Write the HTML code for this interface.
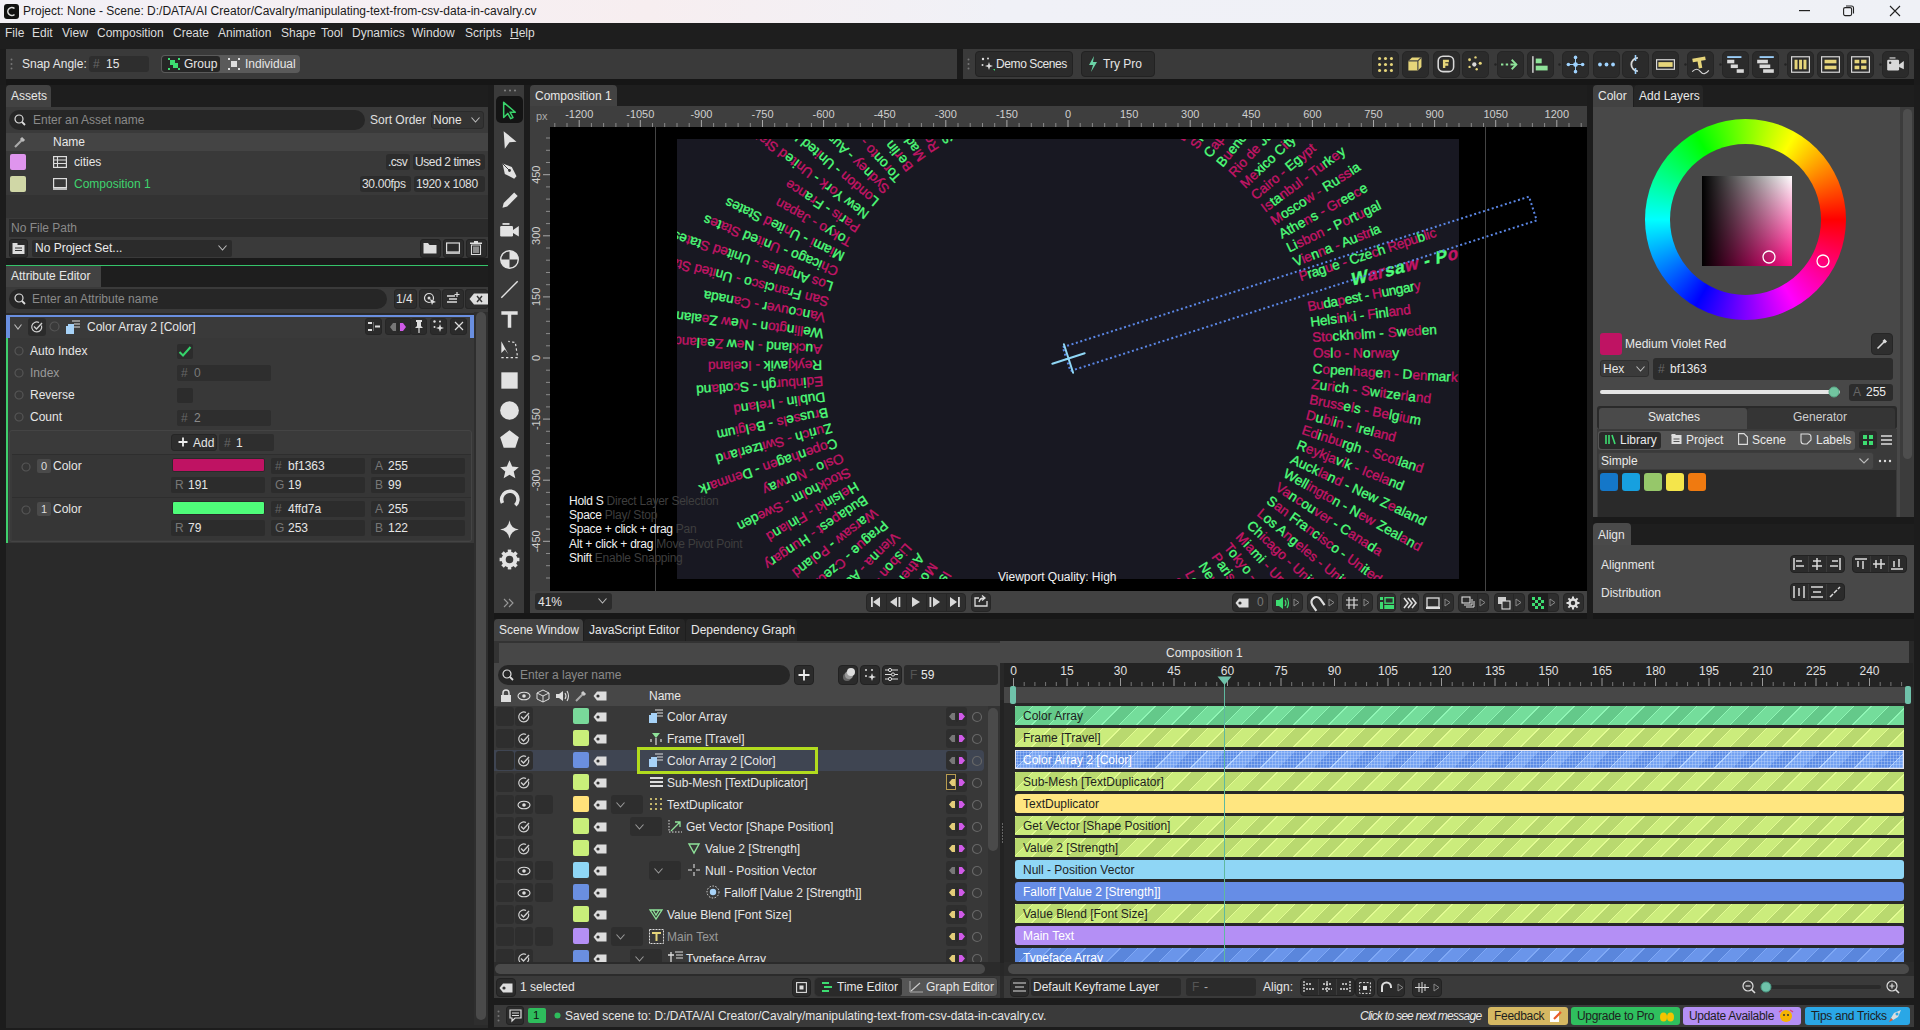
<!DOCTYPE html><html><head><meta charset="utf-8"><style>
*{margin:0;padding:0;box-sizing:border-box}
html,body{width:1920px;height:1030px;overflow:hidden;background:#1c1c1c;font-family:"Liberation Sans",sans-serif;}
div{position:absolute}
.t{white-space:nowrap;line-height:1}
.p{fill:#c21566;stroke:#c21566}.g{fill:#4ffd7a;stroke:#4ffd7a}
svg{position:absolute;overflow:visible}
</style></head><body><div style="left:0px;top:0px;width:1920px;height:23px;background:linear-gradient(to right,#f2f0f6 0px,#f6eff2 450px,#f7eef0 650px,#f0f1f7 1000px,#eff1f6 1920px);"></div>
<svg style="left:4px;top:4px" width="15" height="15"><rect x="0" y="0" width="15" height="15" rx="3" fill="#111"/><path d="M10.5 4.5 A4 4 0 1 0 10.5 10.5" stroke="#ddd" stroke-width="1.6" fill="none"/></svg>
<div class="t" style="left:23px;top:5px;color:#1a1a1a;font-size:12px;">Project: None - Scene: D:/DATA/AI Creator/Cavalry/manipulating-text-from-csv-data-in-cavalry.cv</div>
<svg style="left:1799px;top:10px" width="12" height="2"><rect width="11" height="1.2" fill="#222"/></svg>
<svg style="left:1843px;top:5px" width="12" height="12"><rect x="0.6" y="2.6" width="8" height="8" rx="1.5" fill="none" stroke="#222" stroke-width="1.1"/><path d="M3 1 h5.5 a2 2 0 0 1 2 2 v5.5" fill="none" stroke="#222" stroke-width="1.1"/></svg>
<svg style="left:1889px;top:5px" width="12" height="12"><path d="M1 1 L11 11 M11 1 L1 11" stroke="#222" stroke-width="1.1"/></svg>
<div style="left:0px;top:23px;width:1920px;height:26px;background:#1e1e1e;"></div>
<div class="t" style="left:5px;top:27px;color:#dcdcdc;font-size:12px;">File</div>
<div class="t" style="left:32px;top:27px;color:#dcdcdc;font-size:12px;">Edit</div>
<div class="t" style="left:62px;top:27px;color:#dcdcdc;font-size:12px;">View</div>
<div class="t" style="left:97px;top:27px;color:#dcdcdc;font-size:12px;">Composition</div>
<div class="t" style="left:173px;top:27px;color:#dcdcdc;font-size:12px;">Create</div>
<div class="t" style="left:218px;top:27px;color:#dcdcdc;font-size:12px;">Animation</div>
<div class="t" style="left:281px;top:27px;color:#dcdcdc;font-size:12px;">Shape</div>
<div class="t" style="left:321px;top:27px;color:#dcdcdc;font-size:12px;">Tool</div>
<div class="t" style="left:352px;top:27px;color:#dcdcdc;font-size:12px;">Dynamics</div>
<div class="t" style="left:412px;top:27px;color:#dcdcdc;font-size:12px;">Window</div>
<div class="t" style="left:465px;top:27px;color:#dcdcdc;font-size:12px;">Scripts</div>
<div class="t" style="left:510px;top:27px;color:#dcdcdc;font-size:12px;"><u>H</u>elp</div>
<div style="left:0px;top:49px;width:1920px;height:36px;background:#1b1b1b;"></div>
<div style="left:6px;top:49px;width:951px;height:30px;background:#3a3a3a;"></div>
<div style="left:963px;top:49px;width:951px;height:30px;background:#3a3a3a;"></div>
<div style="left:6px;top:79px;width:1908px;height:6px;background:#161616;"></div>
<svg style="left:10px;top:58px" width="3" height="12"><circle cx="1.5" cy="1.5" r="1" fill="#777"/><circle cx="1.5" cy="6" r="1" fill="#777"/><circle cx="1.5" cy="10.5" r="1" fill="#777"/></svg>
<div class="t" style="left:22px;top:58px;color:#e6e6e6;font-size:12px;">Snap Angle:</div>
<div style="left:89px;top:56px;width:60px;height:16px;background:#2e2e2e;border-radius:3px;"></div>
<div class="t" style="left:93px;top:58px;color:#666;font-size:12px;">#</div>
<div class="t" style="left:106px;top:58px;color:#e6e6e6;font-size:12px;">15</div>
<div style="left:161px;top:55px;width:139px;height:18px;background:#5a5a5a;border-radius:4px;"></div>
<div style="left:162px;top:56px;width:58px;height:16px;background:#262626;border-radius:3px;"></div>
<svg style="left:168px;top:58px" width="12" height="12"><g fill="#3ddc71"><rect x="0" y="0" width="2" height="2"/><rect x="10" y="0" width="2" height="2"/><rect x="0" y="10" width="2" height="2"/><rect x="10" y="10" width="2" height="2"/><rect x="2" y="2" width="5" height="5"/><rect x="5" y="5" width="5" height="5"/></g></svg>
<div class="t" style="left:184px;top:58px;color:#e6e6e6;font-size:12px;">Group</div>
<svg style="left:228px;top:58px" width="12" height="12"><g fill="#ddd"><rect x="0" y="0" width="2" height="2"/><rect x="10" y="0" width="2" height="2"/><rect x="0" y="10" width="2" height="2"/><rect x="10" y="10" width="2" height="2"/><rect x="3" y="3" width="6" height="6"/></g></svg>
<div class="t" style="left:245px;top:58px;color:#e6e6e6;font-size:12px;">Individual</div>
<svg style="left:967px;top:58px" width="3" height="12"><circle cx="1.5" cy="1.5" r="1" fill="#777"/><circle cx="1.5" cy="6" r="1" fill="#777"/><circle cx="1.5" cy="10.5" r="1" fill="#777"/></svg>
<div style="left:975px;top:51px;width:98px;height:26px;background:#2b2b2b;border:1px solid #222;border-radius:4px;"></div>
<svg style="left:981px;top:57px" width="14" height="14"><g fill="#ddd"><circle cx="2" cy="2" r="1.2"/><circle cx="7" cy="1.5" r="1"/><circle cx="1.5" cy="8" r="1"/><path d="M8 5 L9 8 L12 9 L9 10 L8 13 L7 10 L4 9 L7 8 Z"/></g><path d="M12 12 L14 12 L14 14 Z" fill="#3ddc71"/></svg>
<div class="t" style="left:996px;top:58px;color:#e6e6e6;font-size:12px;letter-spacing:-0.4px;">Demo Scenes</div>
<div style="left:1081px;top:51px;width:74px;height:26px;background:#2b2b2b;border:1px solid #222;border-radius:4px;"></div>
<svg style="left:1088px;top:56px" width="10" height="16"><path d="M6 0 L1 9 L5 9 L3 16 L9 6 L5 6 Z" fill="#6ad3a6"/></svg>
<div class="t" style="left:1103px;top:58px;color:#e6e6e6;font-size:12px;">Try Pro</div>
<div style="left:1372px;top:51px;width:27px;height:27px;background:#2b2b2b;border:1px solid #262626;border-radius:5px;"></div>
<svg style="left:1376px;top:55px" width="19" height="19" viewBox="0 0 16 16"><circle cx="3" cy="3" r="1.3" fill="#e6d57a"/><circle cx="3" cy="8" r="1.3" fill="#e6d57a"/><circle cx="3" cy="13" r="1.3" fill="#e6d57a"/><circle cx="8" cy="3" r="1.3" fill="#e6d57a"/><circle cx="8" cy="8" r="1.3" fill="#e6d57a"/><circle cx="8" cy="13" r="1.3" fill="#e6d57a"/><circle cx="13" cy="3" r="1.3" fill="#e6d57a"/><circle cx="13" cy="8" r="1.3" fill="#e6d57a"/><circle cx="13" cy="13" r="1.3" fill="#e6d57a"/></svg>
<div style="left:1402px;top:51px;width:27px;height:27px;background:#2b2b2b;border:1px solid #262626;border-radius:5px;"></div>
<svg style="left:1406px;top:55px" width="19" height="19" viewBox="0 0 16 16"><path d="M2 5 L5 2 L13 2 L13 10 L10 13 L2 13 Z" fill="#e6d57a"/><path d="M2 5 L10 5 L13 2 M10 5 L10 13" stroke="#444" stroke-width="1" fill="none"/></svg>
<div style="left:1433px;top:51px;width:27px;height:27px;background:#2b2b2b;border:1px solid #262626;border-radius:5px;"></div>
<svg style="left:1437px;top:55px" width="19" height="19" viewBox="0 0 16 16"><rect x="1" y="1" width="13" height="13" rx="4" fill="none" stroke="#d9d9d9" stroke-width="1.3"/><path d="M5 4 H10 V6 H7 V7 H9.5 V9 H7 V11 H5 Z" fill="#e6d57a"/></svg>
<div style="left:1462px;top:51px;width:27px;height:27px;background:#2b2b2b;border:1px solid #262626;border-radius:5px;"></div>
<svg style="left:1466px;top:55px" width="19" height="19" viewBox="0 0 16 16"><circle cx="3" cy="4" r="1.2" fill="#e6d57a"/><circle cx="8" cy="2" r="1" fill="#e6d57a"/><circle cx="7" cy="8" r="1.8" fill="#d9d9d9"/><circle cx="12" cy="7" r="1.3" fill="#e6d57a"/><circle cx="3" cy="10" r="1" fill="#e6d57a"/><circle cx="9" cy="12" r="1" fill="#e6d57a"/></svg>
<div style="left:1497px;top:51px;width:27px;height:27px;background:#2b2b2b;border:1px solid #262626;border-radius:5px;"></div>
<svg style="left:1501px;top:55px" width="19" height="19" viewBox="0 0 16 16"><path d="M0 8 H2 M4 8 H6 M8 8 H13" stroke="#8fe39a" stroke-width="1.5"/><path d="M9 4 L13 8 L9 12" stroke="#8fe39a" stroke-width="1.5" fill="none"/></svg>
<div style="left:1527px;top:51px;width:27px;height:27px;background:#2b2b2b;border:1px solid #262626;border-radius:5px;"></div>
<svg style="left:1531px;top:55px" width="19" height="19" viewBox="0 0 16 16"><rect x="1" y="1" width="1.2" height="14" fill="#d9d9d9"/><rect x="4" y="3" width="5" height="4" fill="#8fe39a"/><rect x="4" y="9" width="10" height="4" fill="#8fe39a"/></svg>
<div style="left:1562px;top:51px;width:27px;height:27px;background:#2b2b2b;border:1px solid #262626;border-radius:5px;"></div>
<svg style="left:1566px;top:55px" width="19" height="19" viewBox="0 0 16 16"><circle cx="8" cy="8" r="2" fill="#9fd3ff"/><circle cx="8" cy="2" r="1.5" fill="#9fd3ff"/><circle cx="8" cy="14" r="1.5" fill="#9fd3ff"/><circle cx="2" cy="8" r="1.5" fill="#9fd3ff"/><circle cx="14" cy="8" r="1.5" fill="#9fd3ff"/><path d="M8 2 V14 M2 8 H14" stroke="#9fd3ff" stroke-width="0.8"/></svg>
<div style="left:1593px;top:51px;width:27px;height:27px;background:#2b2b2b;border:1px solid #262626;border-radius:5px;"></div>
<svg style="left:1597px;top:55px" width="19" height="19" viewBox="0 0 16 16"><circle cx="2.5" cy="8" r="1.6" fill="#9fd3ff"/><circle cx="8" cy="8" r="1.6" fill="#9fd3ff"/><circle cx="13.5" cy="8" r="1.6" fill="#9fd3ff"/></svg>
<div style="left:1622px;top:51px;width:27px;height:27px;background:#2b2b2b;border:1px solid #262626;border-radius:5px;"></div>
<svg style="left:1626px;top:55px" width="19" height="19" viewBox="0 0 16 16"><path d="M10 2.5 A5.5 5.5 0 0 0 10 13.5" stroke="#d9d9d9" stroke-width="1.5" fill="none"/><path d="M8 0 V5 M8 11 V16" stroke="#9fd3ff" stroke-width="1.3"/></svg>
<div style="left:1652px;top:51px;width:27px;height:27px;background:#2b2b2b;border:1px solid #262626;border-radius:5px;"></div>
<svg style="left:1656px;top:55px" width="19" height="19" viewBox="0 0 16 16"><rect x="0.5" y="4" width="15" height="8" fill="none" stroke="#d9d9d9" stroke-width="1"/><rect x="2" y="6" width="12" height="4" fill="#e6d57a"/></svg>
<div style="left:1687px;top:51px;width:27px;height:27px;background:#2b2b2b;border:1px solid #262626;border-radius:5px;"></div>
<svg style="left:1691px;top:55px" width="19" height="19" viewBox="0 0 16 16"><path d="M2 2 H13 V5 H9 V11 H6 V5 H2 Z" fill="#e6d57a" transform="rotate(-10 8 8)"/><path d="M1 14 Q5 10 8 14 T15 13" stroke="#d9d9d9" fill="none" stroke-width="1"/></svg>
<div style="left:1722px;top:51px;width:27px;height:27px;background:#2b2b2b;border:1px solid #262626;border-radius:5px;"></div>
<svg style="left:1726px;top:55px" width="19" height="19" viewBox="0 0 16 16"><rect x="1" y="1" width="12" height="1.5" fill="#9fd3ff"/><rect x="1" y="4" width="6" height="3" fill="#d9d9d9"/><rect x="4" y="8" width="6" height="3" fill="#d9d9d9"/><rect x="9" y="12" width="6" height="3" fill="#d9d9d9"/></svg>
<div style="left:1752px;top:51px;width:27px;height:27px;background:#2b2b2b;border:1px solid #262626;border-radius:5px;"></div>
<svg style="left:1756px;top:55px" width="19" height="19" viewBox="0 0 16 16"><rect x="3" y="1" width="12" height="1.5" fill="#9fd3ff"/><rect x="1" y="4" width="9" height="3" fill="#d9d9d9"/><rect x="3" y="8" width="9" height="3" fill="#d9d9d9"/><rect x="6" y="12" width="9" height="3" fill="#d9d9d9"/></svg>
<div style="left:1787px;top:51px;width:27px;height:27px;background:#2b2b2b;border:1px solid #262626;border-radius:5px;"></div>
<svg style="left:1791px;top:55px" width="19" height="19" viewBox="0 0 16 16"><rect x="0.5" y="1.5" width="15" height="13" fill="none" stroke="#d9d9d9" stroke-width="1"/><rect x="3" y="4" width="2.5" height="8" fill="#e6d57a"/><rect x="6.8" y="4" width="2.5" height="8" fill="#e6d57a"/><rect x="10.5" y="4" width="2.5" height="8" fill="#e6d57a"/></svg>
<div style="left:1817px;top:51px;width:27px;height:27px;background:#2b2b2b;border:1px solid #262626;border-radius:5px;"></div>
<svg style="left:1821px;top:55px" width="19" height="19" viewBox="0 0 16 16"><rect x="0.5" y="1.5" width="15" height="13" fill="none" stroke="#d9d9d9" stroke-width="1"/><rect x="3" y="4" width="10" height="3" fill="#e6d57a"/><rect x="3" y="9" width="10" height="3" fill="#e6d57a"/></svg>
<div style="left:1847px;top:51px;width:27px;height:27px;background:#2b2b2b;border:1px solid #262626;border-radius:5px;"></div>
<svg style="left:1851px;top:55px" width="19" height="19" viewBox="0 0 16 16"><rect x="0.5" y="1.5" width="15" height="13" fill="none" stroke="#d9d9d9" stroke-width="1"/><rect x="3" y="4" width="4" height="3" fill="#e6d57a"/><rect x="8.5" y="4" width="4.5" height="3" fill="#e6d57a"/><rect x="3" y="9" width="4" height="3" fill="#e6d57a"/><rect x="8.5" y="9" width="4.5" height="3" fill="#e6d57a"/></svg>
<div style="left:1882px;top:51px;width:27px;height:27px;background:#2b2b2b;border:1px solid #262626;border-radius:5px;"></div>
<svg style="left:1886px;top:55px" width="19" height="19" viewBox="0 0 16 16"><rect x="1" y="4" width="10" height="9" rx="1" fill="#d9d9d9"/><path d="M11 8 L15 5 V12 L11 10 Z" fill="#d9d9d9"/><rect x="3" y="2" width="5" height="1" fill="#d9d9d9"/><circle cx="3.5" cy="6.5" r="1" fill="#333"/></svg>
<svg style="left:1494px;top:63px" width="3" height="3"><circle cx="1.5" cy="1.5" r="1.2" fill="#222"/></svg>
<svg style="left:1558px;top:63px" width="3" height="3"><circle cx="1.5" cy="1.5" r="1.2" fill="#222"/></svg>
<svg style="left:1684px;top:63px" width="3" height="3"><circle cx="1.5" cy="1.5" r="1.2" fill="#222"/></svg>
<svg style="left:1719px;top:63px" width="3" height="3"><circle cx="1.5" cy="1.5" r="1.2" fill="#222"/></svg>
<svg style="left:1784px;top:63px" width="3" height="3"><circle cx="1.5" cy="1.5" r="1.2" fill="#222"/></svg>
<svg style="left:1879px;top:63px" width="3" height="3"><circle cx="1.5" cy="1.5" r="1.2" fill="#222"/></svg>
<div style="left:6px;top:85px;width:482px;height:22px;background:#1e1e1e;"></div>
<div style="left:6px;top:85px;width:45px;height:22px;background:#424242;border-radius:4px 4px 0 0;"></div>
<div class="t" style="left:11px;top:90px;color:#e8e8e8;font-size:12px;">Assets</div>
<div style="left:6px;top:107px;width:482px;height:155px;background:#2b2b2b;"></div>
<div style="left:6px;top:107px;width:482px;height:26px;background:#3a3a3a;"></div>
<div style="left:9px;top:110px;width:356px;height:20px;background:#262626;border-radius:10px;"></div>
<svg style="left:14px;top:114px" width="12" height="12"><circle cx="5" cy="5" r="4" stroke="#ddd" stroke-width="1.2" fill="none"/><path d="M8 8 L11 11" stroke="#ddd" stroke-width="1.8"/></svg>
<div class="t" style="left:33px;top:114px;color:#8a8a8a;font-size:12px;">Enter an Asset name</div>
<div class="t" style="left:370px;top:114px;color:#e0e0e0;font-size:12px;">Sort Order</div>
<div style="left:431px;top:111px;width:53px;height:18px;background:#333;border:1px solid #2a2a2a;border-radius:3px;"></div>
<div class="t" style="left:433px;top:114px;color:#e6e6e6;font-size:12px;">None</div>
<svg style="left:471px;top:117px" width="9" height="6"><path d="M0.5 0.5 L4.5 5 L8.5 0.5" stroke="#bbb" stroke-width="1.1" fill="none"/></svg>
<div style="left:6px;top:133px;width:482px;height:18px;background:#444444;"></div>
<svg style="left:13px;top:136px" width="14" height="13"><path d="M2 11 L9 4" stroke="#aaa" stroke-width="2.2"/><path d="M8 2 L11 5" stroke="#bbb" stroke-width="3"/></svg>
<div class="t" style="left:53px;top:136px;color:#e8e8e8;font-size:12px;">Name</div>
<div style="left:6px;top:151px;width:482px;height:44px;background:#393939;"></div>
<div style="left:6px;top:195px;width:482px;height:23px;background:#333333;"></div>
<div style="left:10px;top:154px;width:16px;height:16px;background:#df95ee;border-radius:2px;"></div>
<div style="left:10px;top:176px;width:16px;height:16px;background:#d0d7a6;border-radius:2px;"></div>
<svg style="left:53px;top:156px" width="14" height="12"><rect x="0.6" y="0.6" width="12.8" height="10.8" fill="none" stroke="#ddd" stroke-width="1.2"/><path d="M0.6 4 H13.4 M0.6 7.5 H13.4 M4.5 0.6 V11.4" stroke="#ddd" stroke-width="1.1"/></svg>
<div class="t" style="left:74px;top:156px;color:#e6e6e6;font-size:12px;">cities</div>
<svg style="left:53px;top:178px" width="14" height="12"><rect x="0.6" y="0.6" width="12.8" height="9" fill="none" stroke="#ddd" stroke-width="1.2"/><rect x="0" y="10" width="14" height="2" fill="#bbb"/></svg>
<div class="t" style="left:74px;top:178px;color:#3fd46e;font-size:12px;">Composition 1</div>
<div style="left:386px;top:154px;width:24px;height:16px;background:#2c2c2c;border-radius:3px;"></div>
<div class="t" style="left:388px;top:156px;color:#e0e0e0;font-size:12px;letter-spacing:-0.5px;">.csv</div>
<div style="left:413px;top:154px;width:72px;height:16px;background:#2c2c2c;border-radius:3px;"></div>
<div class="t" style="left:415px;top:156px;color:#e0e0e0;font-size:12px;letter-spacing:-0.4px;">Used 2 times</div>
<div style="left:360px;top:176px;width:51px;height:16px;background:#2c2c2c;border-radius:3px;"></div>
<div class="t" style="left:362px;top:178px;color:#e0e0e0;font-size:12px;letter-spacing:-0.3px;">30.00fps</div>
<div style="left:414px;top:176px;width:71px;height:16px;background:#2c2c2c;border-radius:3px;"></div>
<div class="t" style="left:416px;top:178px;color:#e0e0e0;font-size:12px;letter-spacing:-0.4px;">1920 x 1080</div>
<div style="left:6px;top:218px;width:482px;height:20px;background:#3a3a3a;"></div>
<div style="left:9px;top:219px;width:479px;height:18px;background:#2b2b2b;"></div>
<div class="t" style="left:11px;top:222px;color:#8a8a8a;font-size:12px;">No File Path</div>
<div style="left:6px;top:238px;width:482px;height:20px;background:#3a3a3a;"></div>
<div style="left:9px;top:239px;width:19px;height:19px;background:#2b2b2b;border:1px solid #222;border-radius:3px;"></div>
<svg style="left:12px;top:242px" width="14" height="13"><rect x="0.5" y="3" width="12" height="9" fill="#ddd"/><rect x="0.5" y="1" width="5" height="2" fill="#ddd"/><path d="M3 6 H10 M3 8.5 H10" stroke="#333" stroke-width="1"/></svg>
<div style="left:32px;top:240px;width:200px;height:17px;background:#2b2b2b;border-radius:2px;"></div>
<div class="t" style="left:35px;top:242px;color:#ececec;font-size:12px;">No Project Set...</div>
<svg style="left:218px;top:245px" width="9" height="6"><path d="M0.5 0.5 L4.5 5 L8.5 0.5" stroke="#bbb" stroke-width="1.1" fill="none"/></svg>
<div style="left:420px;top:239px;width:21px;height:19px;background:#2b2b2b;border:1px solid #222;border-radius:3px;"></div>
<div style="left:443px;top:239px;width:21px;height:19px;background:#2b2b2b;border:1px solid #222;border-radius:3px;"></div>
<div style="left:466px;top:239px;width:21px;height:19px;background:#2b2b2b;border:1px solid #222;border-radius:3px;"></div>
<svg style="left:423px;top:242px" width="14" height="12"><path d="M0.5 1 H5 L6.5 3 H13.5 V11.5 H0.5 Z" fill="#ddd"/></svg>
<svg style="left:446px;top:242px" width="14" height="12"><rect x="0.6" y="1" width="12.8" height="9" fill="none" stroke="#ddd" stroke-width="1.2"/><rect x="0" y="10" width="14" height="2" fill="#bbb"/></svg>
<svg style="left:470px;top:241px" width="12" height="14"><rect x="0" y="1.5" width="12" height="1.5" fill="#ddd"/><rect x="4" y="0" width="4" height="2" fill="#ddd"/><path d="M1.5 4 H10.5 V13.5 H1.5 Z M4 5.5 V12 M6 5.5 V12 M8 5.5 V12" fill="none" stroke="#ddd" stroke-width="1.1"/></svg>
<div style="left:6px;top:258px;width:482px;height:7px;background:#1a1a1a;"></div>
<div style="left:6px;top:265px;width:482px;height:1px;background:#35c46a;"></div>
<div style="left:6px;top:266px;width:482px;height:21px;background:#1e1e1e;"></div>
<div style="left:6px;top:266px;width:95px;height:21px;background:#424242;"></div>
<div class="t" style="left:11px;top:270px;color:#e8e8e8;font-size:12px;">Attribute Editor</div>
<div style="left:6px;top:287px;width:482px;height:741px;background:#2a2a2a;"></div>
<div style="left:6px;top:287px;width:482px;height:26px;background:#3a3a3a;"></div>
<div style="left:9px;top:289px;width:378px;height:20px;background:#262626;border-radius:10px;"></div>
<svg style="left:14px;top:293px" width="12" height="12"><circle cx="5" cy="5" r="4" stroke="#ddd" stroke-width="1.2" fill="none"/><path d="M8 8 L11 11" stroke="#ddd" stroke-width="1.8"/></svg>
<div class="t" style="left:32px;top:293px;color:#8a8a8a;font-size:12px;">Enter an Attribute name</div>
<div style="left:394px;top:289px;width:23px;height:20px;background:#2d2d2d;border:1px solid #262626;border-radius:3px;"></div>
<div class="t" style="left:396px;top:293px;color:#e6e6e6;font-size:12px;">1/4</div>
<div style="left:419px;top:289px;width:22px;height:20px;background:#2d2d2d;border:1px solid #262626;border-radius:3px;"></div>
<div style="left:442px;top:289px;width:22px;height:20px;background:#2d2d2d;border:1px solid #262626;border-radius:3px;"></div>
<div style="left:465px;top:289px;width:22px;height:20px;background:#2d2d2d;border:1px solid #262626;border-radius:3px;"></div>
<svg style="left:423px;top:292px" width="14" height="14"><circle cx="6" cy="6" r="4.5" stroke="#ddd" stroke-width="1.2" fill="none"/><circle cx="6" cy="6" r="1.5" fill="#ddd"/><path d="M7 7 L13 10 L10 11 L9 13 Z" fill="#ddd"/></svg>
<svg style="left:446px;top:292px" width="14" height="14"><path d="M1 4 H9 M3 7 H11 M1 10 H11" stroke="#ddd" stroke-width="1.5"/><path d="M11 0 V5 M8.5 2.5 H13.5" stroke="#ddd" stroke-width="1.2"/></svg>
<svg style="left:469px;top:293px" width="14" height="12"><path d="M4 1 H13 V11 H4 L0 6 Z" fill="#ddd"/><path d="M6 3.5 L10.5 8.5 M10.5 3.5 L6 8.5" stroke="#333" stroke-width="1.4"/></svg>
<div style="left:6px;top:315px;width:468px;height:228px;background:#383838;"></div>
<div style="left:6px;top:315px;width:468px;height:23px;background:#3a3a3a;border-top:2px solid #6a8fe0;"></div>
<div style="left:6px;top:315px;width:4px;height:23px;background:#6a8fe0;"></div>
<div style="left:6px;top:338px;width:2px;height:205px;background:#3fcf6c;"></div>
<svg style="left:14px;top:324px" width="8" height="6"><path d="M0.5 0.5 L4.0 5 L7.5 0.5" stroke="#bbb" stroke-width="1.1" fill="none"/></svg>
<div style="left:28px;top:318px;width:18px;height:18px;background:#2b2b2b;border-radius:3px;"></div>
<svg style="left:31px;top:321px" width="12" height="12"><path d="M10.5 4.5 A5 5 0 1 1 8 1.5" stroke="#cfcfcf" stroke-width="1.2" fill="none"/><path d="M3 5.5 L5.5 8 L11 2" stroke="#cfcfcf" stroke-width="1.4" fill="none"/></svg>
<svg style="left:49px;top:321px" width="11" height="11"><circle cx="5.5" cy="5.5" r="4.5" stroke="#555" stroke-width="1.2" fill="none"/></svg>
<svg style="left:66px;top:320px" width="14" height="14"><rect x="0" y="6" width="8" height="8" fill="#a7d2f7"/><rect x="2" y="4" width="6" height="4" fill="#a7d2f7"/><path d="M6 1 H14 M8 4 H14 M8 7 H14" stroke="#ddd" stroke-width="1.1"/></svg>
<div class="t" style="left:87px;top:321px;color:#e8e8e8;font-size:12px;">Color Array 2 [Color]</div>
<div style="left:365px;top:318px;width:17px;height:17px;background:#2b2b2b;border:1px solid #262626;border-radius:3px;"></div>
<div style="left:385px;top:318px;width:27px;height:17px;background:#2b2b2b;border:1px solid #262626;border-radius:3px;"></div>
<div style="left:410px;top:318px;width:17px;height:17px;background:#2b2b2b;border:1px solid #262626;border-radius:3px;"></div>
<div style="left:430px;top:318px;width:17px;height:17px;background:#2b2b2b;border:1px solid #262626;border-radius:3px;"></div>
<div style="left:450px;top:318px;width:17px;height:17px;background:#2b2b2b;border:1px solid #262626;border-radius:3px;"></div>
<svg style="left:368px;top:321px" width="12" height="11"><path d="M0 2 H4 M0 9 H4 M7 5.5 H12" stroke="#ddd" stroke-width="2"/><path d="M5.5 1 V10" stroke="#666" stroke-width="1"/></svg>
<svg style="left:387px;top:321px" width="22" height="12"><path d="M3 6 L6 2 H9 V10 H6 Z" fill="#777"/><path d="M13 2 H16 L19 6 L16 10 H13 Z" fill="#d05ae8"/><path d="M11 0 V12" stroke="#262626"/></svg>
<svg style="left:414px;top:320px" width="10" height="13"><path d="M2 0 H8 V2 H7 V6 L9 8 H1 L3 6 V2 H2 Z" fill="#ddd"/><path d="M5 8 V13" stroke="#ddd" stroke-width="1.2"/></svg>
<svg style="left:433px;top:320px" width="12" height="12"><g fill="#ddd"><circle cx="1.5" cy="1.5" r="1.2"/><circle cx="7" cy="1.5" r="1"/><circle cx="1.5" cy="7" r="1"/><path d="M7 4 L8 7 L11 8 L8 9 L7 12 L6 9 L3 8 L6 7 Z"/></g></svg>
<svg style="left:454px;top:321px" width="10" height="10"><path d="M1 1 L9 9 M9 1 L1 9" stroke="#ddd" stroke-width="1.2"/></svg>
<svg style="left:14px;top:346px" width="10" height="10"><circle cx="5" cy="5" r="4" stroke="#555" stroke-width="1.2" fill="none"/></svg>
<div class="t" style="left:30px;top:345px;color:#e6e6e6;font-size:12px;">Auto Index</div>
<svg style="left:14px;top:368px" width="10" height="10"><circle cx="5" cy="5" r="4" stroke="#555" stroke-width="1.2" fill="none"/></svg>
<div class="t" style="left:30px;top:367px;color:#9a9a9a;font-size:12px;">Index</div>
<svg style="left:14px;top:390px" width="10" height="10"><circle cx="5" cy="5" r="4" stroke="#555" stroke-width="1.2" fill="none"/></svg>
<div class="t" style="left:30px;top:389px;color:#e6e6e6;font-size:12px;">Reverse</div>
<svg style="left:14px;top:412px" width="10" height="10"><circle cx="5" cy="5" r="4" stroke="#555" stroke-width="1.2" fill="none"/></svg>
<div class="t" style="left:30px;top:411px;color:#e6e6e6;font-size:12px;">Count</div>
<div style="left:177px;top:344px;width:16px;height:15px;background:#2c2c2c;border-radius:2px;"></div>
<svg style="left:178px;top:345px" width="14" height="13"><path d="M1.5 7 L5 10.5 L12.5 2" stroke="#35d46b" stroke-width="2" fill="none"/></svg>
<div style="left:177px;top:365px;width:94px;height:16px;background:#2e2e2e;border-radius:2px;"></div>
<div class="t" style="left:181px;top:367px;color:#666;font-size:12px;">#</div>
<div class="t" style="left:194px;top:367px;color:#7a7a7a;font-size:12px;">0</div>
<div style="left:177px;top:388px;width:16px;height:15px;background:#2c2c2c;border-radius:2px;"></div>
<div style="left:177px;top:410px;width:94px;height:16px;background:#2e2e2e;border-radius:2px;"></div>
<div class="t" style="left:181px;top:412px;color:#666;font-size:12px;">#</div>
<div class="t" style="left:194px;top:412px;color:#8a8a8a;font-size:12px;">2</div>
<div style="left:9px;top:430px;width:463px;height:112px;background:#3a3a3a;border:1px solid #444;border-radius:3px;"></div>
<div style="left:171px;top:434px;width:46px;height:17px;background:#2d2d2d;border:1px solid #262626;border-radius:3px;"></div>
<svg style="left:178px;top:437px" width="10" height="10"><path d="M5 0.5 V9.5 M0.5 5 H9.5" stroke="#eee" stroke-width="1.8"/></svg>
<div class="t" style="left:193px;top:437px;color:#e6e6e6;font-size:12px;">Add</div>
<div style="left:219px;top:434px;width:55px;height:17px;background:#2e2e2e;border-radius:2px;"></div>
<div class="t" style="left:224px;top:437px;color:#666;font-size:12px;">#</div>
<div class="t" style="left:236px;top:437px;color:#e6e6e6;font-size:12px;">1</div>
<div style="left:12px;top:454px;width:459px;height:43px;background:#363636;border-top:1px solid #2e2e2e;"></div>
<svg style="left:21px;top:462px" width="10" height="10"><circle cx="5" cy="5" r="4" stroke="#555" stroke-width="1.2" fill="none"/></svg>
<div style="left:37px;top:459px;width:14px;height:14px;background:#4a4a4a;border-radius:2px;"></div>
<div class="t" style="left:41px;top:461px;color:#ddd;font-size:11px;">0</div>
<div class="t" style="left:53px;top:460px;color:#e6e6e6;font-size:12px;">Color</div>
<div style="left:172px;top:458px;width:93px;height:14px;background:#bf1363;border-radius:2px;border:1px solid #2a2a2a;"></div>
<div style="left:271px;top:458px;width:94px;height:16px;background:#2c2c2c;border-radius:2px;"></div>
<div class="t" style="left:275px;top:460px;color:#666;font-size:12px;">#</div>
<div class="t" style="left:288px;top:460px;color:#e6e6e6;font-size:12px;">bf1363</div>
<div style="left:371px;top:458px;width:94px;height:16px;background:#2c2c2c;border-radius:2px;"></div>
<div class="t" style="left:375px;top:460px;color:#777;font-size:12px;">A</div>
<div class="t" style="left:388px;top:460px;color:#e6e6e6;font-size:12px;">255</div>
<div style="left:171px;top:477px;width:94px;height:16px;background:#2c2c2c;border-radius:2px;"></div>
<div class="t" style="left:175px;top:479px;color:#777;font-size:12px;">R</div>
<div class="t" style="left:188px;top:479px;color:#e6e6e6;font-size:12px;">191</div>
<div style="left:271px;top:477px;width:94px;height:16px;background:#2c2c2c;border-radius:2px;"></div>
<div class="t" style="left:275px;top:479px;color:#777;font-size:12px;">G</div>
<div class="t" style="left:288px;top:479px;color:#e6e6e6;font-size:12px;">19</div>
<div style="left:371px;top:477px;width:94px;height:16px;background:#2c2c2c;border-radius:2px;"></div>
<div class="t" style="left:375px;top:479px;color:#777;font-size:12px;">B</div>
<div class="t" style="left:388px;top:479px;color:#e6e6e6;font-size:12px;">99</div>
<div style="left:12px;top:497px;width:459px;height:43px;background:#363636;border-top:1px solid #2e2e2e;"></div>
<svg style="left:21px;top:505px" width="10" height="10"><circle cx="5" cy="5" r="4" stroke="#555" stroke-width="1.2" fill="none"/></svg>
<div style="left:37px;top:502px;width:14px;height:14px;background:#4a4a4a;border-radius:2px;"></div>
<div class="t" style="left:41px;top:504px;color:#ddd;font-size:11px;">1</div>
<div class="t" style="left:53px;top:503px;color:#e6e6e6;font-size:12px;">Color</div>
<div style="left:172px;top:501px;width:93px;height:14px;background:#4ffd7a;border-radius:2px;border:1px solid #2a2a2a;"></div>
<div style="left:271px;top:501px;width:94px;height:16px;background:#2c2c2c;border-radius:2px;"></div>
<div class="t" style="left:275px;top:503px;color:#666;font-size:12px;">#</div>
<div class="t" style="left:288px;top:503px;color:#e6e6e6;font-size:12px;">4ffd7a</div>
<div style="left:371px;top:501px;width:94px;height:16px;background:#2c2c2c;border-radius:2px;"></div>
<div class="t" style="left:375px;top:503px;color:#777;font-size:12px;">A</div>
<div class="t" style="left:388px;top:503px;color:#e6e6e6;font-size:12px;">255</div>
<div style="left:171px;top:520px;width:94px;height:16px;background:#2c2c2c;border-radius:2px;"></div>
<div class="t" style="left:175px;top:522px;color:#777;font-size:12px;">R</div>
<div class="t" style="left:188px;top:522px;color:#e6e6e6;font-size:12px;">79</div>
<div style="left:271px;top:520px;width:94px;height:16px;background:#2c2c2c;border-radius:2px;"></div>
<div class="t" style="left:275px;top:522px;color:#777;font-size:12px;">G</div>
<div class="t" style="left:288px;top:522px;color:#e6e6e6;font-size:12px;">253</div>
<div style="left:371px;top:520px;width:94px;height:16px;background:#2c2c2c;border-radius:2px;"></div>
<div class="t" style="left:375px;top:522px;color:#777;font-size:12px;">B</div>
<div class="t" style="left:388px;top:522px;color:#e6e6e6;font-size:12px;">122</div>
<div style="left:474px;top:312px;width:14px;height:713px;background:#2e2e2e;"></div>
<div style="left:476px;top:312px;width:10px;height:708px;background:#4a4a4a;border-radius:5px;"></div>
<div style="left:470px;top:315px;width:4px;height:23px;background:#6a8fe0;"></div>
<div style="left:465px;top:289px;width:23px;height:20px;background:#2d2d2d;border:1px solid #262626;border-radius:3px;"></div>
<svg style="left:469px;top:293px" width="19" height="12"><path d="M5 0.5 H19 V11.5 H5 L0.5 6 Z" fill="#ddd"/><path d="M8 3 L13 9 M13 3 L8 9" stroke="#333" stroke-width="1.4"/></svg>
<div style="left:494px;top:85px;width:30px;height:528px;background:#3a3a3a;"></div>
<svg style="left:503px;top:89px" width="14" height="3"><circle cx="2" cy="1.5" r="1" fill="#888"/><circle cx="7" cy="1.5" r="1" fill="#888"/><circle cx="12" cy="1.5" r="1" fill="#888"/></svg>
<div style="left:496px;top:96px;width:27px;height:27px;background:#141414;border-radius:5px;"></div>
<svg style="left:498.5px;top:99.5px" width="21" height="21" viewBox="0 0 18 18"><path d="M4 2 L4 15 L7.5 11.5 L10 16 L12 15 L9.5 10.5 L14 10.5 Z" fill="none" stroke="#39d46b" stroke-width="1.3" stroke-linejoin="round"/></svg>
<svg style="left:498.5px;top:129.5px" width="21" height="21" viewBox="0 0 18 18"><path d="M4 1 L15 10 L9 10.5 L5 16 Z" fill="#e2e2e2"/></svg>
<svg style="left:498.5px;top:159.5px" width="21" height="21" viewBox="0 0 18 18"><path d="M3 3 L11 6 L15 14 L13 16 L5 12 Z" fill="#e2e2e2"/><circle cx="9" cy="9" r="1.2" fill="#333"/><path d="M3 3 L9 9" stroke="#333" stroke-width="0.8"/></svg>
<svg style="left:498.5px;top:188.5px" width="21" height="21" viewBox="0 0 18 18"><path d="M3 16 L4 12 L13 3 L16 6 L7 15 Z" fill="#e2e2e2"/></svg>
<svg style="left:498.5px;top:218.5px" width="21" height="21" viewBox="0 0 18 18"><rect x="1" y="6" width="11" height="9" rx="1" fill="#e2e2e2"/><path d="M12 9.5 L17 6 V15 L12 12 Z" fill="#e2e2e2"/><rect x="3" y="3.5" width="6" height="1.5" fill="#e2e2e2"/></svg>
<svg style="left:498.5px;top:248.5px" width="21" height="21" viewBox="0 0 18 18"><circle cx="9" cy="9" r="7.5" fill="#e2e2e2"/><path d="M9 1.5 V9 H1.5 A7.5 7.5 0 0 1 9 1.5 Z M9 9 H16.5 A7.5 7.5 0 0 1 9 16.5 Z" fill="#3a3a3a"/><circle cx="9" cy="9" r="7.5" fill="none" stroke="#e2e2e2" stroke-width="1.2"/></svg>
<svg style="left:498.5px;top:278.5px" width="21" height="21" viewBox="0 0 18 18"><path d="M2 16 L16 2" stroke="#e2e2e2" stroke-width="1.2"/></svg>
<svg style="left:498.5px;top:308.5px" width="21" height="21" viewBox="0 0 18 18"><path d="M2 2 H16 V5 H10.5 V16 H7.5 V5 H2 Z" fill="#e2e2e2"/></svg>
<svg style="left:498.5px;top:338.5px" width="21" height="21" viewBox="0 0 18 18"><path d="M2 2 L2 12 L5 9 L8 13 Z" fill="#e2e2e2"/><path d="M2 16 H16 L14 3 L8 2" stroke="#e2e2e2" stroke-width="1" stroke-dasharray="2 2" fill="none"/></svg>
<svg style="left:498.5px;top:369.5px" width="21" height="21" viewBox="0 0 18 18"><rect x="2" y="2" width="14" height="14" fill="#e2e2e2"/></svg>
<svg style="left:498.5px;top:399.5px" width="21" height="21" viewBox="0 0 18 18"><circle cx="9" cy="9" r="8" fill="#e2e2e2"/></svg>
<svg style="left:498.5px;top:428.5px" width="21" height="21" viewBox="0 0 18 18"><path d="M9 1 L17 7 L14 16 H4 L1 7 Z" fill="#e2e2e2"/></svg>
<svg style="left:498.5px;top:458.5px" width="21" height="21" viewBox="0 0 18 18"><path d="M9 1 L11.3 6.5 L17 7 L12.6 10.8 L14 16.5 L9 13.5 L4 16.5 L5.4 10.8 L1 7 L6.7 6.5 Z" fill="#e2e2e2"/></svg>
<svg style="left:498.5px;top:488.5px" width="21" height="21" viewBox="0 0 18 18"><path d="M3 12 A7 7 0 1 1 14 14" stroke="#e2e2e2" stroke-width="3" fill="none"/></svg>
<svg style="left:498.5px;top:518.5px" width="21" height="21" viewBox="0 0 18 18"><path d="M9 1 Q10 8 17 9 Q10 10 9 17 Q8 10 1 9 Q8 8 9 1 Z" fill="#e2e2e2"/></svg>
<svg style="left:498.5px;top:548.5px" width="21" height="21" viewBox="0 0 18 18"><circle cx="9" cy="9" r="5" fill="none" stroke="#e2e2e2" stroke-width="3.5"/><rect x="7.5" y="0.5" width="3" height="4" fill="#e2e2e2" transform="rotate(0 9 9)"/><rect x="7.5" y="0.5" width="3" height="4" fill="#e2e2e2" transform="rotate(45 9 9)"/><rect x="7.5" y="0.5" width="3" height="4" fill="#e2e2e2" transform="rotate(90 9 9)"/><rect x="7.5" y="0.5" width="3" height="4" fill="#e2e2e2" transform="rotate(135 9 9)"/><rect x="7.5" y="0.5" width="3" height="4" fill="#e2e2e2" transform="rotate(180 9 9)"/><rect x="7.5" y="0.5" width="3" height="4" fill="#e2e2e2" transform="rotate(225 9 9)"/><rect x="7.5" y="0.5" width="3" height="4" fill="#e2e2e2" transform="rotate(270 9 9)"/><rect x="7.5" y="0.5" width="3" height="4" fill="#e2e2e2" transform="rotate(315 9 9)"/></svg>
<svg style="left:503px;top:598px" width="12" height="10"><path d="M1 1 L5 5 L1 9 M6 1 L10 5 L6 9" stroke="#999" stroke-width="1.1" fill="none"/></svg>
<div style="left:530px;top:85px;width:1057px;height:21px;background:#1e1e1e;"></div>
<div style="left:530px;top:85px;width:87px;height:21px;background:#424242;border-radius:4px 4px 0 0;"></div>
<div class="t" style="left:535px;top:90px;color:#e8e8e8;font-size:12px;">Composition 1</div>
<div style="left:530px;top:106px;width:1057px;height:485px;background:#3e3e3e;"></div>
<div style="left:550px;top:127px;width:1037px;height:464px;background:#000;"></div>
<svg style="left:530px;top:106px" width="1057" height="21"><path d="M24.8 17 V21" stroke="#8a8a8a" stroke-width="1"/><path d="M37.0 17 V21" stroke="#8a8a8a" stroke-width="1"/><path d="M49.2 14 V21" stroke="#a8a8a8" stroke-width="1"/><text x="49.2" y="12" fill="#cfcfcf" font-size="11" text-anchor="middle" font-family="Liberation Sans">-1200</text><path d="M61.4 17 V21" stroke="#8a8a8a" stroke-width="1"/><path d="M73.6 17 V21" stroke="#8a8a8a" stroke-width="1"/><path d="M85.9 17 V21" stroke="#8a8a8a" stroke-width="1"/><path d="M98.1 17 V21" stroke="#8a8a8a" stroke-width="1"/><path d="M110.3 14 V21" stroke="#a8a8a8" stroke-width="1"/><text x="110.3" y="12" fill="#cfcfcf" font-size="11" text-anchor="middle" font-family="Liberation Sans">-1050</text><path d="M122.5 17 V21" stroke="#8a8a8a" stroke-width="1"/><path d="M134.7 17 V21" stroke="#8a8a8a" stroke-width="1"/><path d="M147.0 17 V21" stroke="#8a8a8a" stroke-width="1"/><path d="M159.2 17 V21" stroke="#8a8a8a" stroke-width="1"/><path d="M171.4 14 V21" stroke="#a8a8a8" stroke-width="1"/><text x="171.4" y="12" fill="#cfcfcf" font-size="11" text-anchor="middle" font-family="Liberation Sans">-900</text><path d="M183.6 17 V21" stroke="#8a8a8a" stroke-width="1"/><path d="M195.8 17 V21" stroke="#8a8a8a" stroke-width="1"/><path d="M208.1 17 V21" stroke="#8a8a8a" stroke-width="1"/><path d="M220.3 17 V21" stroke="#8a8a8a" stroke-width="1"/><path d="M232.5 14 V21" stroke="#a8a8a8" stroke-width="1"/><text x="232.5" y="12" fill="#cfcfcf" font-size="11" text-anchor="middle" font-family="Liberation Sans">-750</text><path d="M244.7 17 V21" stroke="#8a8a8a" stroke-width="1"/><path d="M256.9 17 V21" stroke="#8a8a8a" stroke-width="1"/><path d="M269.2 17 V21" stroke="#8a8a8a" stroke-width="1"/><path d="M281.4 17 V21" stroke="#8a8a8a" stroke-width="1"/><path d="M293.6 14 V21" stroke="#a8a8a8" stroke-width="1"/><text x="293.6" y="12" fill="#cfcfcf" font-size="11" text-anchor="middle" font-family="Liberation Sans">-600</text><path d="M305.8 17 V21" stroke="#8a8a8a" stroke-width="1"/><path d="M318.0 17 V21" stroke="#8a8a8a" stroke-width="1"/><path d="M330.3 17 V21" stroke="#8a8a8a" stroke-width="1"/><path d="M342.5 17 V21" stroke="#8a8a8a" stroke-width="1"/><path d="M354.7 14 V21" stroke="#a8a8a8" stroke-width="1"/><text x="354.7" y="12" fill="#cfcfcf" font-size="11" text-anchor="middle" font-family="Liberation Sans">-450</text><path d="M366.9 17 V21" stroke="#8a8a8a" stroke-width="1"/><path d="M379.1 17 V21" stroke="#8a8a8a" stroke-width="1"/><path d="M391.4 17 V21" stroke="#8a8a8a" stroke-width="1"/><path d="M403.6 17 V21" stroke="#8a8a8a" stroke-width="1"/><path d="M415.8 14 V21" stroke="#a8a8a8" stroke-width="1"/><text x="415.8" y="12" fill="#cfcfcf" font-size="11" text-anchor="middle" font-family="Liberation Sans">-300</text><path d="M428.0 17 V21" stroke="#8a8a8a" stroke-width="1"/><path d="M440.2 17 V21" stroke="#8a8a8a" stroke-width="1"/><path d="M452.5 17 V21" stroke="#8a8a8a" stroke-width="1"/><path d="M464.7 17 V21" stroke="#8a8a8a" stroke-width="1"/><path d="M476.9 14 V21" stroke="#a8a8a8" stroke-width="1"/><text x="476.9" y="12" fill="#cfcfcf" font-size="11" text-anchor="middle" font-family="Liberation Sans">-150</text><path d="M489.1 17 V21" stroke="#8a8a8a" stroke-width="1"/><path d="M501.3 17 V21" stroke="#8a8a8a" stroke-width="1"/><path d="M513.6 17 V21" stroke="#8a8a8a" stroke-width="1"/><path d="M525.8 17 V21" stroke="#8a8a8a" stroke-width="1"/><path d="M538.0 14 V21" stroke="#a8a8a8" stroke-width="1"/><text x="538.0" y="12" fill="#cfcfcf" font-size="11" text-anchor="middle" font-family="Liberation Sans">0</text><path d="M550.2 17 V21" stroke="#8a8a8a" stroke-width="1"/><path d="M562.4 17 V21" stroke="#8a8a8a" stroke-width="1"/><path d="M574.7 17 V21" stroke="#8a8a8a" stroke-width="1"/><path d="M586.9 17 V21" stroke="#8a8a8a" stroke-width="1"/><path d="M599.1 14 V21" stroke="#a8a8a8" stroke-width="1"/><text x="599.1" y="12" fill="#cfcfcf" font-size="11" text-anchor="middle" font-family="Liberation Sans">150</text><path d="M611.3 17 V21" stroke="#8a8a8a" stroke-width="1"/><path d="M623.5 17 V21" stroke="#8a8a8a" stroke-width="1"/><path d="M635.8 17 V21" stroke="#8a8a8a" stroke-width="1"/><path d="M648.0 17 V21" stroke="#8a8a8a" stroke-width="1"/><path d="M660.2 14 V21" stroke="#a8a8a8" stroke-width="1"/><text x="660.2" y="12" fill="#cfcfcf" font-size="11" text-anchor="middle" font-family="Liberation Sans">300</text><path d="M672.4 17 V21" stroke="#8a8a8a" stroke-width="1"/><path d="M684.6 17 V21" stroke="#8a8a8a" stroke-width="1"/><path d="M696.9 17 V21" stroke="#8a8a8a" stroke-width="1"/><path d="M709.1 17 V21" stroke="#8a8a8a" stroke-width="1"/><path d="M721.3 14 V21" stroke="#a8a8a8" stroke-width="1"/><text x="721.3" y="12" fill="#cfcfcf" font-size="11" text-anchor="middle" font-family="Liberation Sans">450</text><path d="M733.5 17 V21" stroke="#8a8a8a" stroke-width="1"/><path d="M745.7 17 V21" stroke="#8a8a8a" stroke-width="1"/><path d="M758.0 17 V21" stroke="#8a8a8a" stroke-width="1"/><path d="M770.2 17 V21" stroke="#8a8a8a" stroke-width="1"/><path d="M782.4 14 V21" stroke="#a8a8a8" stroke-width="1"/><text x="782.4" y="12" fill="#cfcfcf" font-size="11" text-anchor="middle" font-family="Liberation Sans">600</text><path d="M794.6 17 V21" stroke="#8a8a8a" stroke-width="1"/><path d="M806.8 17 V21" stroke="#8a8a8a" stroke-width="1"/><path d="M819.1 17 V21" stroke="#8a8a8a" stroke-width="1"/><path d="M831.3 17 V21" stroke="#8a8a8a" stroke-width="1"/><path d="M843.5 14 V21" stroke="#a8a8a8" stroke-width="1"/><text x="843.5" y="12" fill="#cfcfcf" font-size="11" text-anchor="middle" font-family="Liberation Sans">750</text><path d="M855.7 17 V21" stroke="#8a8a8a" stroke-width="1"/><path d="M867.9 17 V21" stroke="#8a8a8a" stroke-width="1"/><path d="M880.2 17 V21" stroke="#8a8a8a" stroke-width="1"/><path d="M892.4 17 V21" stroke="#8a8a8a" stroke-width="1"/><path d="M904.6 14 V21" stroke="#a8a8a8" stroke-width="1"/><text x="904.6" y="12" fill="#cfcfcf" font-size="11" text-anchor="middle" font-family="Liberation Sans">900</text><path d="M916.8 17 V21" stroke="#8a8a8a" stroke-width="1"/><path d="M929.0 17 V21" stroke="#8a8a8a" stroke-width="1"/><path d="M941.3 17 V21" stroke="#8a8a8a" stroke-width="1"/><path d="M953.5 17 V21" stroke="#8a8a8a" stroke-width="1"/><path d="M965.7 14 V21" stroke="#a8a8a8" stroke-width="1"/><text x="965.7" y="12" fill="#cfcfcf" font-size="11" text-anchor="middle" font-family="Liberation Sans">1050</text><path d="M977.9 17 V21" stroke="#8a8a8a" stroke-width="1"/><path d="M990.1 17 V21" stroke="#8a8a8a" stroke-width="1"/><path d="M1002.4 17 V21" stroke="#8a8a8a" stroke-width="1"/><path d="M1014.6 17 V21" stroke="#8a8a8a" stroke-width="1"/><path d="M1026.8 14 V21" stroke="#a8a8a8" stroke-width="1"/><text x="1026.8" y="12" fill="#cfcfcf" font-size="11" text-anchor="middle" font-family="Liberation Sans">1200</text><path d="M1039.0 17 V21" stroke="#8a8a8a" stroke-width="1"/><path d="M1051.2 17 V21" stroke="#8a8a8a" stroke-width="1"/><text x="6" y="14" fill="#aaa" font-size="11" font-family="Liberation Sans">px</text></svg>
<svg style="left:530px;top:106px" width="20" height="485"><path d="M16 472.0 H20" stroke="#8a8a8a" stroke-width="1"/><path d="M16 459.7 H20" stroke="#8a8a8a" stroke-width="1"/><path d="M16 447.5 H20" stroke="#8a8a8a" stroke-width="1"/><path d="M13 435.3 H20" stroke="#a8a8a8" stroke-width="1"/><text transform="translate(10 435.3) rotate(-90)" fill="#cfcfcf" font-size="11" text-anchor="middle" font-family="Liberation Sans">-450</text><path d="M16 423.1 H20" stroke="#8a8a8a" stroke-width="1"/><path d="M16 410.9 H20" stroke="#8a8a8a" stroke-width="1"/><path d="M16 398.6 H20" stroke="#8a8a8a" stroke-width="1"/><path d="M16 386.4 H20" stroke="#8a8a8a" stroke-width="1"/><path d="M13 374.2 H20" stroke="#a8a8a8" stroke-width="1"/><text transform="translate(10 374.2) rotate(-90)" fill="#cfcfcf" font-size="11" text-anchor="middle" font-family="Liberation Sans">-300</text><path d="M16 362.0 H20" stroke="#8a8a8a" stroke-width="1"/><path d="M16 349.8 H20" stroke="#8a8a8a" stroke-width="1"/><path d="M16 337.5 H20" stroke="#8a8a8a" stroke-width="1"/><path d="M16 325.3 H20" stroke="#8a8a8a" stroke-width="1"/><path d="M13 313.1 H20" stroke="#a8a8a8" stroke-width="1"/><text transform="translate(10 313.1) rotate(-90)" fill="#cfcfcf" font-size="11" text-anchor="middle" font-family="Liberation Sans">-150</text><path d="M16 300.9 H20" stroke="#8a8a8a" stroke-width="1"/><path d="M16 288.7 H20" stroke="#8a8a8a" stroke-width="1"/><path d="M16 276.4 H20" stroke="#8a8a8a" stroke-width="1"/><path d="M16 264.2 H20" stroke="#8a8a8a" stroke-width="1"/><path d="M13 252.0 H20" stroke="#a8a8a8" stroke-width="1"/><text transform="translate(10 252.0) rotate(-90)" fill="#cfcfcf" font-size="11" text-anchor="middle" font-family="Liberation Sans">0</text><path d="M16 239.8 H20" stroke="#8a8a8a" stroke-width="1"/><path d="M16 227.6 H20" stroke="#8a8a8a" stroke-width="1"/><path d="M16 215.3 H20" stroke="#8a8a8a" stroke-width="1"/><path d="M16 203.1 H20" stroke="#8a8a8a" stroke-width="1"/><path d="M13 190.9 H20" stroke="#a8a8a8" stroke-width="1"/><text transform="translate(10 190.9) rotate(-90)" fill="#cfcfcf" font-size="11" text-anchor="middle" font-family="Liberation Sans">150</text><path d="M16 178.7 H20" stroke="#8a8a8a" stroke-width="1"/><path d="M16 166.5 H20" stroke="#8a8a8a" stroke-width="1"/><path d="M16 154.2 H20" stroke="#8a8a8a" stroke-width="1"/><path d="M16 142.0 H20" stroke="#8a8a8a" stroke-width="1"/><path d="M13 129.8 H20" stroke="#a8a8a8" stroke-width="1"/><text transform="translate(10 129.8) rotate(-90)" fill="#cfcfcf" font-size="11" text-anchor="middle" font-family="Liberation Sans">300</text><path d="M16 117.6 H20" stroke="#8a8a8a" stroke-width="1"/><path d="M16 105.4 H20" stroke="#8a8a8a" stroke-width="1"/><path d="M16 93.1 H20" stroke="#8a8a8a" stroke-width="1"/><path d="M16 80.9 H20" stroke="#8a8a8a" stroke-width="1"/><path d="M13 68.7 H20" stroke="#a8a8a8" stroke-width="1"/><text transform="translate(10 68.7) rotate(-90)" fill="#cfcfcf" font-size="11" text-anchor="middle" font-family="Liberation Sans">450</text><path d="M16 56.5 H20" stroke="#8a8a8a" stroke-width="1"/><path d="M16 44.3 H20" stroke="#8a8a8a" stroke-width="1"/><path d="M16 32.0 H20" stroke="#8a8a8a" stroke-width="1"/></svg>
<div style="left:655px;top:127px;width:1px;height:464px;background:#444;"></div>
<div style="left:1485px;top:127px;width:1px;height:464px;background:#444;"></div>
<div style="left:677px;top:139px;width:782px;height:440px;background:#181822;"></div>
<svg style="left:677px;top:139px" width="782" height="440" viewBox="0 0 782 440"><defs><clipPath id="cf"><rect width="782" height="440"/></clipPath></defs><g clip-path="url(#cf)" font-family="Liberation Sans" stroke-width="0.35"><text transform="translate(390.5 219) rotate(-61.64)" x="245.5" y="0" font-size="13.6" letter-spacing="0" font-weight="normal"><tspan class="p">L</tspan><tspan class="p">a</tspan><tspan class="g">g</tspan><tspan class="p">o</tspan><tspan class="g">s</tspan><tspan class="p"> </tspan><tspan class="p">-</tspan><tspan class="g"> </tspan><tspan class="p">N</tspan><tspan class="p">i</tspan><tspan class="p">g</tspan><tspan class="p">e</tspan><tspan class="p">r</tspan><tspan class="g">i</tspan><tspan class="p">a</tspan></text><text transform="translate(390.5 219) rotate(-58.02)" x="245.5" y="0" font-size="13.6" letter-spacing="0" font-weight="normal"><tspan class="p">S</tspan><tspan class="g">i</tspan><tspan class="g">n</tspan><tspan class="g">g</tspan><tspan class="p">a</tspan><tspan class="g">p</tspan><tspan class="p">o</tspan><tspan class="g">r</tspan><tspan class="p">e</tspan><tspan class="p"> </tspan><tspan class="p">-</tspan><tspan class="p"> </tspan><tspan class="g">S</tspan><tspan class="p">i</tspan><tspan class="g">n</tspan><tspan class="g">g</tspan><tspan class="p">a</tspan><tspan class="g">p</tspan><tspan class="p">o</tspan><tspan class="p">r</tspan><tspan class="p">e</tspan></text><text transform="translate(390.5 219) rotate(-54.40)" x="245.5" y="0" font-size="13.6" letter-spacing="0" font-weight="normal"><tspan class="g">C</tspan><tspan class="p">a</tspan><tspan class="p">p</tspan><tspan class="g">e</tspan><tspan class="p"> </tspan><tspan class="p">T</tspan><tspan class="g">o</tspan><tspan class="g">w</tspan><tspan class="p">n</tspan><tspan class="g"> </tspan><tspan class="g">-</tspan><tspan class="g"> </tspan><tspan class="g">S</tspan><tspan class="p">o</tspan><tspan class="g">u</tspan><tspan class="p">t</tspan><tspan class="p">h</tspan><tspan class="g"> </tspan><tspan class="p">A</tspan><tspan class="p">f</tspan><tspan class="p">r</tspan><tspan class="g">i</tspan><tspan class="g">c</tspan><tspan class="g">a</tspan></text><text transform="translate(390.5 219) rotate(-50.78)" x="245.5" y="0" font-size="13.6" letter-spacing="0" font-weight="normal"><tspan class="g">B</tspan><tspan class="p">u</tspan><tspan class="g">e</tspan><tspan class="g">n</tspan><tspan class="g">o</tspan><tspan class="p">s</tspan><tspan class="g"> </tspan><tspan class="g">A</tspan><tspan class="p">i</tspan><tspan class="g">r</tspan><tspan class="p">e</tspan><tspan class="g">s</tspan><tspan class="g"> </tspan><tspan class="g">-</tspan><tspan class="g"> </tspan><tspan class="p">A</tspan><tspan class="p">r</tspan><tspan class="g">g</tspan><tspan class="p">e</tspan><tspan class="p">n</tspan><tspan class="p">t</tspan><tspan class="p">i</tspan><tspan class="p">n</tspan><tspan class="g">a</tspan></text><text transform="translate(390.5 219) rotate(-47.16)" x="245.5" y="0" font-size="13.6" letter-spacing="0" font-weight="normal"><tspan class="p">R</tspan><tspan class="p">i</tspan><tspan class="p">o</tspan><tspan class="g"> </tspan><tspan class="p">d</tspan><tspan class="p">e</tspan><tspan class="g"> </tspan><tspan class="g">J</tspan><tspan class="g">a</tspan><tspan class="g">n</tspan><tspan class="p">e</tspan><tspan class="p">i</tspan><tspan class="p">r</tspan><tspan class="g">o</tspan><tspan class="g"> </tspan><tspan class="p">-</tspan><tspan class="p"> </tspan><tspan class="p">B</tspan><tspan class="p">r</tspan><tspan class="p">a</tspan><tspan class="g">z</tspan><tspan class="p">i</tspan><tspan class="p">l</tspan></text><text transform="translate(390.5 219) rotate(-43.54)" x="245.5" y="0" font-size="13.6" letter-spacing="0" font-weight="normal"><tspan class="p">M</tspan><tspan class="p">e</tspan><tspan class="g">x</tspan><tspan class="g">i</tspan><tspan class="g">c</tspan><tspan class="g">o</tspan><tspan class="g"> </tspan><tspan class="g">C</tspan><tspan class="p">i</tspan><tspan class="g">t</tspan><tspan class="g">y</tspan><tspan class="g"> </tspan><tspan class="g">-</tspan><tspan class="p"> </tspan><tspan class="p">M</tspan><tspan class="p">e</tspan><tspan class="g">x</tspan><tspan class="p">i</tspan><tspan class="p">c</tspan><tspan class="p">o</tspan></text><text transform="translate(390.5 219) rotate(-39.92)" x="245.5" y="0" font-size="13.6" letter-spacing="0" font-weight="normal"><tspan class="p">C</tspan><tspan class="p">a</tspan><tspan class="p">i</tspan><tspan class="p">r</tspan><tspan class="p">o</tspan><tspan class="p"> </tspan><tspan class="p">-</tspan><tspan class="p"> </tspan><tspan class="g">E</tspan><tspan class="g">g</tspan><tspan class="p">y</tspan><tspan class="p">p</tspan><tspan class="p">t</tspan></text><text transform="translate(390.5 219) rotate(-36.30)" x="245.5" y="0" font-size="13.6" letter-spacing="0" font-weight="normal"><tspan class="p">I</tspan><tspan class="p">s</tspan><tspan class="g">t</tspan><tspan class="g">a</tspan><tspan class="p">n</tspan><tspan class="p">b</tspan><tspan class="p">u</tspan><tspan class="p">l</tspan><tspan class="p"> </tspan><tspan class="p">-</tspan><tspan class="g"> </tspan><tspan class="p">T</tspan><tspan class="p">u</tspan><tspan class="g">r</tspan><tspan class="g">k</tspan><tspan class="p">e</tspan><tspan class="g">y</tspan></text><text transform="translate(390.5 219) rotate(-32.68)" x="245.5" y="0" font-size="13.6" letter-spacing="0" font-weight="normal"><tspan class="p">M</tspan><tspan class="g">o</tspan><tspan class="g">s</tspan><tspan class="g">c</tspan><tspan class="g">o</tspan><tspan class="p">w</tspan><tspan class="p"> </tspan><tspan class="p">-</tspan><tspan class="g"> </tspan><tspan class="g">R</tspan><tspan class="g">u</tspan><tspan class="p">s</tspan><tspan class="p">s</tspan><tspan class="g">i</tspan><tspan class="g">a</tspan></text><text transform="translate(390.5 219) rotate(-29.06)" x="245.5" y="0" font-size="13.6" letter-spacing="0" font-weight="normal"><tspan class="g">A</tspan><tspan class="g">t</tspan><tspan class="g">h</tspan><tspan class="g">e</tspan><tspan class="p">n</tspan><tspan class="g">s</tspan><tspan class="p"> </tspan><tspan class="p">-</tspan><tspan class="p"> </tspan><tspan class="p">G</tspan><tspan class="p">r</tspan><tspan class="g">e</tspan><tspan class="g">e</tspan><tspan class="p">c</tspan><tspan class="g">e</tspan></text><text transform="translate(390.5 219) rotate(-25.44)" x="245.5" y="0" font-size="13.6" letter-spacing="0" font-weight="normal"><tspan class="g">L</tspan><tspan class="g">i</tspan><tspan class="p">s</tspan><tspan class="p">b</tspan><tspan class="p">o</tspan><tspan class="p">n</tspan><tspan class="p"> </tspan><tspan class="g">-</tspan><tspan class="g"> </tspan><tspan class="g">P</tspan><tspan class="p">o</tspan><tspan class="g">r</tspan><tspan class="g">t</tspan><tspan class="p">u</tspan><tspan class="g">g</tspan><tspan class="g">a</tspan><tspan class="g">l</tspan></text><text transform="translate(390.5 219) rotate(-21.82)" x="245.5" y="0" font-size="13.6" letter-spacing="-0.2" font-weight="normal"><tspan class="g">V</tspan><tspan class="p">i</tspan><tspan class="p">e</tspan><tspan class="g">n</tspan><tspan class="p">n</tspan><tspan class="g">a</tspan><tspan class="g"> </tspan><tspan class="p">-</tspan><tspan class="p"> </tspan><tspan class="g">A</tspan><tspan class="g">u</tspan><tspan class="p">s</tspan><tspan class="p">t</tspan><tspan class="p">r</tspan><tspan class="g">i</tspan><tspan class="g">a</tspan></text><text transform="translate(390.5 219) rotate(-18.20)" x="245.5" y="0" font-size="13.6" letter-spacing="-0.35" font-weight="normal"><tspan class="p">P</tspan><tspan class="g">r</tspan><tspan class="g">a</tspan><tspan class="g">g</tspan><tspan class="p">u</tspan><tspan class="g">e</tspan><tspan class="p"> </tspan><tspan class="p">-</tspan><tspan class="g"> </tspan><tspan class="g">C</tspan><tspan class="g">z</tspan><tspan class="g">e</tspan><tspan class="p">c</tspan><tspan class="g">h</tspan><tspan class="g"> </tspan><tspan class="p">R</tspan><tspan class="p">e</tspan><tspan class="p">p</tspan><tspan class="p">u</tspan><tspan class="g">b</tspan><tspan class="p">l</tspan><tspan class="p">i</tspan><tspan class="p">c</tspan></text><text transform="translate(390.5 219) rotate(-14.28) skewX(-14)" x="293" y="0" font-size="17.5" letter-spacing="0.6" font-weight="bold"><tspan class="g">W</tspan><tspan class="p">a</tspan><tspan class="p">r</tspan><tspan class="g">s</tspan><tspan class="g">a</tspan><tspan class="p">w</tspan><tspan class="g"> </tspan><tspan class="g">-</tspan><tspan class="g"> </tspan><tspan class="g">P</tspan><tspan class="p">o</tspan><tspan class="p">l</tspan><tspan class="p">a</tspan><tspan class="p">n</tspan><tspan class="g">d</tspan></text><text transform="translate(390.5 219) rotate(-10.96)" x="245.5" y="0" font-size="13.6" letter-spacing="-0.35" font-weight="normal"><tspan class="p">B</tspan><tspan class="p">u</tspan><tspan class="g">d</tspan><tspan class="g">a</tspan><tspan class="p">p</tspan><tspan class="g">e</tspan><tspan class="g">s</tspan><tspan class="g">t</tspan><tspan class="p"> </tspan><tspan class="g">-</tspan><tspan class="p"> </tspan><tspan class="p">H</tspan><tspan class="g">u</tspan><tspan class="g">n</tspan><tspan class="g">g</tspan><tspan class="g">a</tspan><tspan class="g">r</tspan><tspan class="p">y</tspan></text><text transform="translate(390.5 219) rotate(-7.34)" x="245.5" y="0" font-size="13.6" letter-spacing="-0.2" font-weight="normal"><tspan class="g">H</tspan><tspan class="g">e</tspan><tspan class="g">l</tspan><tspan class="g">s</tspan><tspan class="p">i</tspan><tspan class="g">n</tspan><tspan class="p">k</tspan><tspan class="g">i</tspan><tspan class="g"> </tspan><tspan class="g">-</tspan><tspan class="g"> </tspan><tspan class="p">F</tspan><tspan class="g">i</tspan><tspan class="g">n</tspan><tspan class="g">l</tspan><tspan class="p">a</tspan><tspan class="p">n</tspan><tspan class="p">d</tspan></text><text transform="translate(390.5 219) rotate(-3.72)" x="245.5" y="0" font-size="13.6" letter-spacing="0" font-weight="normal"><tspan class="p">S</tspan><tspan class="p">t</tspan><tspan class="p">o</tspan><tspan class="g">c</tspan><tspan class="g">k</tspan><tspan class="g">h</tspan><tspan class="p">o</tspan><tspan class="g">l</tspan><tspan class="g">m</tspan><tspan class="p"> </tspan><tspan class="g">-</tspan><tspan class="g"> </tspan><tspan class="p">S</tspan><tspan class="g">w</tspan><tspan class="p">e</tspan><tspan class="p">d</tspan><tspan class="g">e</tspan><tspan class="g">n</tspan></text><text transform="translate(390.5 219) rotate(-0.10)" x="245.5" y="0" font-size="13.6" letter-spacing="0" font-weight="normal"><tspan class="p">O</tspan><tspan class="p">s</tspan><tspan class="g">l</tspan><tspan class="p">o</tspan><tspan class="p"> </tspan><tspan class="p">-</tspan><tspan class="g"> </tspan><tspan class="p">N</tspan><tspan class="g">o</tspan><tspan class="p">r</tspan><tspan class="p">w</tspan><tspan class="p">a</tspan><tspan class="g">y</tspan></text><text transform="translate(390.5 219) rotate(3.52)" x="245.5" y="0" font-size="13.6" letter-spacing="0" font-weight="normal"><tspan class="g">C</tspan><tspan class="p">o</tspan><tspan class="g">p</tspan><tspan class="g">e</tspan><tspan class="g">n</tspan><tspan class="p">h</tspan><tspan class="p">a</tspan><tspan class="p">g</tspan><tspan class="g">e</tspan><tspan class="p">n</tspan><tspan class="p"> </tspan><tspan class="p">-</tspan><tspan class="g"> </tspan><tspan class="g">D</tspan><tspan class="p">e</tspan><tspan class="p">n</tspan><tspan class="g">m</tspan><tspan class="g">a</tspan><tspan class="g">r</tspan><tspan class="p">k</tspan></text><text transform="translate(390.5 219) rotate(7.14)" x="245.5" y="0" font-size="13.6" letter-spacing="0" font-weight="normal"><tspan class="p">Z</tspan><tspan class="g">u</tspan><tspan class="p">r</tspan><tspan class="p">i</tspan><tspan class="g">c</tspan><tspan class="g">h</tspan><tspan class="g"> </tspan><tspan class="p">-</tspan><tspan class="g"> </tspan><tspan class="p">S</tspan><tspan class="g">w</tspan><tspan class="p">i</tspan><tspan class="p">t</tspan><tspan class="g">z</tspan><tspan class="g">e</tspan><tspan class="p">r</tspan><tspan class="p">l</tspan><tspan class="g">a</tspan><tspan class="p">n</tspan><tspan class="p">d</tspan></text><text transform="translate(390.5 219) rotate(10.76)" x="245.5" y="0" font-size="13.6" letter-spacing="0" font-weight="normal"><tspan class="p">B</tspan><tspan class="p">r</tspan><tspan class="p">u</tspan><tspan class="p">s</tspan><tspan class="p">s</tspan><tspan class="g">e</tspan><tspan class="p">l</tspan><tspan class="g">s</tspan><tspan class="p"> </tspan><tspan class="p">-</tspan><tspan class="p"> </tspan><tspan class="p">B</tspan><tspan class="p">e</tspan><tspan class="g">l</tspan><tspan class="g">g</tspan><tspan class="p">i</tspan><tspan class="p">u</tspan><tspan class="g">m</tspan></text><text transform="translate(390.5 219) rotate(14.38)" x="245.5" y="0" font-size="13.6" letter-spacing="0" font-weight="normal"><tspan class="p">D</tspan><tspan class="g">u</tspan><tspan class="p">b</tspan><tspan class="p">l</tspan><tspan class="g">i</tspan><tspan class="p">n</tspan><tspan class="g"> </tspan><tspan class="g">-</tspan><tspan class="g"> </tspan><tspan class="p">I</tspan><tspan class="g">r</tspan><tspan class="g">e</tspan><tspan class="g">l</tspan><tspan class="p">a</tspan><tspan class="p">n</tspan><tspan class="p">d</tspan></text><text transform="translate(390.5 219) rotate(18.00)" x="245.5" y="0" font-size="13.6" letter-spacing="0" font-weight="normal"><tspan class="p">E</tspan><tspan class="p">d</tspan><tspan class="g">i</tspan><tspan class="p">n</tspan><tspan class="p">b</tspan><tspan class="p">u</tspan><tspan class="g">r</tspan><tspan class="g">g</tspan><tspan class="g">h</tspan><tspan class="p"> </tspan><tspan class="p">-</tspan><tspan class="p"> </tspan><tspan class="p">S</tspan><tspan class="p">c</tspan><tspan class="p">o</tspan><tspan class="p">t</tspan><tspan class="g">l</tspan><tspan class="g">a</tspan><tspan class="g">n</tspan><tspan class="p">d</tspan></text><text transform="translate(390.5 219) rotate(21.62)" x="245.5" y="0" font-size="13.6" letter-spacing="0" font-weight="normal"><tspan class="g">R</tspan><tspan class="p">e</tspan><tspan class="p">y</tspan><tspan class="p">k</tspan><tspan class="p">j</tspan><tspan class="p">a</tspan><tspan class="g">v</tspan><tspan class="p">i</tspan><tspan class="g">k</tspan><tspan class="p"> </tspan><tspan class="p">-</tspan><tspan class="p"> </tspan><tspan class="p">I</tspan><tspan class="p">c</tspan><tspan class="p">e</tspan><tspan class="p">l</tspan><tspan class="p">a</tspan><tspan class="g">n</tspan><tspan class="g">d</tspan></text><text transform="translate(390.5 219) rotate(25.24)" x="245.5" y="0" font-size="13.6" letter-spacing="0" font-weight="normal"><tspan class="g">A</tspan><tspan class="g">u</tspan><tspan class="g">c</tspan><tspan class="g">k</tspan><tspan class="p">l</tspan><tspan class="p">a</tspan><tspan class="g">n</tspan><tspan class="p">d</tspan><tspan class="g"> </tspan><tspan class="g">-</tspan><tspan class="p"> </tspan><tspan class="g">N</tspan><tspan class="g">e</tspan><tspan class="g">w</tspan><tspan class="g"> </tspan><tspan class="g">Z</tspan><tspan class="p">e</tspan><tspan class="g">a</tspan><tspan class="g">l</tspan><tspan class="g">a</tspan><tspan class="g">n</tspan><tspan class="g">d</tspan></text><text transform="translate(390.5 219) rotate(28.86)" x="245.5" y="0" font-size="13.6" letter-spacing="0" font-weight="normal"><tspan class="g">W</tspan><tspan class="g">e</tspan><tspan class="g">l</tspan><tspan class="g">l</tspan><tspan class="p">i</tspan><tspan class="p">n</tspan><tspan class="p">g</tspan><tspan class="p">t</tspan><tspan class="p">o</tspan><tspan class="g">n</tspan><tspan class="g"> </tspan><tspan class="g">-</tspan><tspan class="g"> </tspan><tspan class="g">N</tspan><tspan class="p">e</tspan><tspan class="p">w</tspan><tspan class="g"> </tspan><tspan class="g">Z</tspan><tspan class="g">e</tspan><tspan class="g">a</tspan><tspan class="g">l</tspan><tspan class="p">a</tspan><tspan class="g">n</tspan><tspan class="p">d</tspan></text><text transform="translate(390.5 219) rotate(32.48)" x="245.5" y="0" font-size="13.6" letter-spacing="0" font-weight="normal"><tspan class="p">V</tspan><tspan class="p">a</tspan><tspan class="g">n</tspan><tspan class="p">c</tspan><tspan class="g">o</tspan><tspan class="g">u</tspan><tspan class="p">v</tspan><tspan class="p">e</tspan><tspan class="p">r</tspan><tspan class="g"> </tspan><tspan class="g">-</tspan><tspan class="g"> </tspan><tspan class="g">C</tspan><tspan class="p">a</tspan><tspan class="p">n</tspan><tspan class="p">a</tspan><tspan class="g">d</tspan><tspan class="p">a</tspan></text><text transform="translate(390.5 219) rotate(36.10)" x="245.5" y="0" font-size="13.6" letter-spacing="0" font-weight="normal"><tspan class="g">S</tspan><tspan class="p">a</tspan><tspan class="p">n</tspan><tspan class="p"> </tspan><tspan class="g">F</tspan><tspan class="g">r</tspan><tspan class="g">a</tspan><tspan class="p">n</tspan><tspan class="g">c</tspan><tspan class="p">i</tspan><tspan class="p">s</tspan><tspan class="p">c</tspan><tspan class="g">o</tspan><tspan class="p"> </tspan><tspan class="g">-</tspan><tspan class="g"> </tspan><tspan class="p">U</tspan><tspan class="p">n</tspan><tspan class="g">i</tspan><tspan class="g">t</tspan><tspan class="p">e</tspan><tspan class="p">d</tspan><tspan class="p"> </tspan><tspan class="g">S</tspan><tspan class="p">t</tspan><tspan class="g">a</tspan><tspan class="p">t</tspan><tspan class="g">e</tspan><tspan class="g">s</tspan></text><text transform="translate(390.5 219) rotate(39.72)" x="245.5" y="0" font-size="13.6" letter-spacing="0" font-weight="normal"><tspan class="p">L</tspan><tspan class="g">o</tspan><tspan class="g">s</tspan><tspan class="g"> </tspan><tspan class="g">A</tspan><tspan class="p">n</tspan><tspan class="g">g</tspan><tspan class="p">e</tspan><tspan class="p">l</tspan><tspan class="p">e</tspan><tspan class="p">s</tspan><tspan class="p"> </tspan><tspan class="p">-</tspan><tspan class="p"> </tspan><tspan class="p">U</tspan><tspan class="p">n</tspan><tspan class="g">i</tspan><tspan class="p">t</tspan><tspan class="g">e</tspan><tspan class="g">d</tspan><tspan class="p"> </tspan><tspan class="g">S</tspan><tspan class="g">t</tspan><tspan class="g">a</tspan><tspan class="p">t</tspan><tspan class="p">e</tspan><tspan class="p">s</tspan></text><text transform="translate(390.5 219) rotate(43.34)" x="245.5" y="0" font-size="13.6" letter-spacing="0" font-weight="normal"><tspan class="g">C</tspan><tspan class="g">h</tspan><tspan class="p">i</tspan><tspan class="p">c</tspan><tspan class="p">a</tspan><tspan class="p">g</tspan><tspan class="p">o</tspan><tspan class="g"> </tspan><tspan class="p">-</tspan><tspan class="g"> </tspan><tspan class="p">U</tspan><tspan class="p">n</tspan><tspan class="g">i</tspan><tspan class="p">t</tspan><tspan class="p">e</tspan><tspan class="g">d</tspan><tspan class="g"> </tspan><tspan class="g">S</tspan><tspan class="g">t</tspan><tspan class="g">a</tspan><tspan class="g">t</tspan><tspan class="g">e</tspan><tspan class="g">s</tspan></text><text transform="translate(390.5 219) rotate(46.96)" x="245.5" y="0" font-size="13.6" letter-spacing="0" font-weight="normal"><tspan class="p">M</tspan><tspan class="g">i</tspan><tspan class="p">a</tspan><tspan class="g">m</tspan><tspan class="g">i</tspan><tspan class="p"> </tspan><tspan class="p">-</tspan><tspan class="g"> </tspan><tspan class="p">U</tspan><tspan class="p">n</tspan><tspan class="p">i</tspan><tspan class="p">t</tspan><tspan class="g">e</tspan><tspan class="g">d</tspan><tspan class="p"> </tspan><tspan class="g">S</tspan><tspan class="p">t</tspan><tspan class="g">a</tspan><tspan class="p">t</tspan><tspan class="p">e</tspan><tspan class="p">s</tspan></text><text transform="translate(390.5 219) rotate(50.58)" x="245.5" y="0" font-size="13.6" letter-spacing="0" font-weight="normal"><tspan class="p">T</tspan><tspan class="g">o</tspan><tspan class="p">k</tspan><tspan class="p">y</tspan><tspan class="g">o</tspan><tspan class="g"> </tspan><tspan class="p">-</tspan><tspan class="p"> </tspan><tspan class="p">J</tspan><tspan class="p">a</tspan><tspan class="p">p</tspan><tspan class="p">a</tspan><tspan class="p">n</tspan></text><text transform="translate(390.5 219) rotate(54.20)" x="245.5" y="0" font-size="13.6" letter-spacing="0" font-weight="normal"><tspan class="p">P</tspan><tspan class="g">a</tspan><tspan class="g">r</tspan><tspan class="g">i</tspan><tspan class="p">s</tspan><tspan class="p"> </tspan><tspan class="g">-</tspan><tspan class="p"> </tspan><tspan class="p">F</tspan><tspan class="p">r</tspan><tspan class="p">a</tspan><tspan class="g">n</tspan><tspan class="p">c</tspan><tspan class="g">e</tspan></text><text transform="translate(390.5 219) rotate(57.82)" x="245.5" y="0" font-size="13.6" letter-spacing="0" font-weight="normal"><tspan class="g">N</tspan><tspan class="g">e</tspan><tspan class="p">w</tspan><tspan class="p"> </tspan><tspan class="p">Y</tspan><tspan class="p">o</tspan><tspan class="p">r</tspan><tspan class="g">k</tspan><tspan class="g"> </tspan><tspan class="g">-</tspan><tspan class="p"> </tspan><tspan class="p">U</tspan><tspan class="g">n</tspan><tspan class="g">i</tspan><tspan class="p">t</tspan><tspan class="g">e</tspan><tspan class="p">d</tspan><tspan class="p"> </tspan><tspan class="g">S</tspan><tspan class="g">t</tspan><tspan class="g">a</tspan><tspan class="g">t</tspan><tspan class="p">e</tspan><tspan class="p">s</tspan></text><text transform="translate(390.5 219) rotate(61.44)" x="245.5" y="0" font-size="13.6" letter-spacing="0" font-weight="normal"><tspan class="p">L</tspan><tspan class="g">o</tspan><tspan class="g">n</tspan><tspan class="g">d</tspan><tspan class="g">o</tspan><tspan class="g">n</tspan><tspan class="g"> </tspan><tspan class="p">-</tspan><tspan class="g"> </tspan><tspan class="p">U</tspan><tspan class="g">n</tspan><tspan class="p">i</tspan><tspan class="g">t</tspan><tspan class="g">e</tspan><tspan class="p">d</tspan><tspan class="p"> </tspan><tspan class="p">K</tspan><tspan class="g">i</tspan><tspan class="g">n</tspan><tspan class="p">g</tspan><tspan class="p">d</tspan><tspan class="g">o</tspan><tspan class="g">m</tspan></text><text transform="translate(390.5 219) rotate(65.06)" x="245.5" y="0" font-size="13.6" letter-spacing="0" font-weight="normal"><tspan class="p">S</tspan><tspan class="p">y</tspan><tspan class="g">d</tspan><tspan class="p">n</tspan><tspan class="p">e</tspan><tspan class="p">y</tspan><tspan class="g"> </tspan><tspan class="g">-</tspan><tspan class="g"> </tspan><tspan class="p">A</tspan><tspan class="p">u</tspan><tspan class="p">s</tspan><tspan class="g">t</tspan><tspan class="g">r</tspan><tspan class="p">a</tspan><tspan class="p">l</tspan><tspan class="p">i</tspan><tspan class="g">a</tspan></text><text transform="translate(390.5 219) rotate(68.68)" x="245.5" y="0" font-size="13.6" letter-spacing="0" font-weight="normal"><tspan class="p">T</tspan><tspan class="p">o</tspan><tspan class="g">r</tspan><tspan class="g">o</tspan><tspan class="p">n</tspan><tspan class="p">t</tspan><tspan class="p">o</tspan><tspan class="p"> </tspan><tspan class="g">-</tspan><tspan class="p"> </tspan><tspan class="g">C</tspan><tspan class="g">a</tspan><tspan class="g">n</tspan><tspan class="p">a</tspan><tspan class="g">d</tspan><tspan class="p">a</tspan></text><text transform="translate(390.5 219) rotate(72.30)" x="245.5" y="0" font-size="13.6" letter-spacing="0" font-weight="normal"><tspan class="g">B</tspan><tspan class="p">e</tspan><tspan class="p">r</tspan><tspan class="g">l</tspan><tspan class="p">i</tspan><tspan class="g">n</tspan><tspan class="p"> </tspan><tspan class="p">-</tspan><tspan class="p"> </tspan><tspan class="p">G</tspan><tspan class="g">e</tspan><tspan class="g">r</tspan><tspan class="p">m</tspan><tspan class="p">a</tspan><tspan class="p">n</tspan><tspan class="g">y</tspan></text><text transform="translate(390.5 219) rotate(75.92)" x="245.5" y="0" font-size="13.6" letter-spacing="0" font-weight="normal"><tspan class="p">M</tspan><tspan class="p">a</tspan><tspan class="p">d</tspan><tspan class="p">r</tspan><tspan class="g">i</tspan><tspan class="g">d</tspan><tspan class="g"> </tspan><tspan class="g">-</tspan><tspan class="g"> </tspan><tspan class="p">S</tspan><tspan class="p">p</tspan><tspan class="g">a</tspan><tspan class="g">i</tspan><tspan class="p">n</tspan></text><text transform="translate(390.5 219) rotate(79.54)" x="245.5" y="0" font-size="13.6" letter-spacing="0" font-weight="normal"><tspan class="g">R</tspan><tspan class="p">o</tspan><tspan class="p">m</tspan><tspan class="p">e</tspan><tspan class="p"> </tspan><tspan class="p">-</tspan><tspan class="p"> </tspan><tspan class="p">I</tspan><tspan class="g">t</tspan><tspan class="p">a</tspan><tspan class="g">l</tspan><tspan class="p">y</tspan></text><text transform="translate(390.5 219) rotate(83.16)" x="245.5" y="0" font-size="13.6" letter-spacing="0" font-weight="normal"><tspan class="p">S</tspan><tspan class="g">e</tspan><tspan class="g">o</tspan><tspan class="p">u</tspan><tspan class="p">l</tspan><tspan class="p"> </tspan><tspan class="p">-</tspan><tspan class="g"> </tspan><tspan class="p">S</tspan><tspan class="p">o</tspan><tspan class="g">u</tspan><tspan class="p">t</tspan><tspan class="p">h</tspan><tspan class="g"> </tspan><tspan class="g">K</tspan><tspan class="p">o</tspan><tspan class="p">r</tspan><tspan class="p">e</tspan><tspan class="g">a</tspan></text><text transform="translate(390.5 219) rotate(86.78)" x="245.5" y="0" font-size="13.6" letter-spacing="0" font-weight="normal"><tspan class="p">D</tspan><tspan class="g">u</tspan><tspan class="g">b</tspan><tspan class="p">a</tspan><tspan class="p">i</tspan><tspan class="g"> </tspan><tspan class="g">-</tspan><tspan class="p"> </tspan><tspan class="g">U</tspan><tspan class="p">A</tspan><tspan class="p">E</tspan></text><text transform="translate(390.5 219) rotate(94.30)" x="245.5" y="0" font-size="13.6" letter-spacing="0" font-weight="normal"><tspan class="p">L</tspan><tspan class="g">a</tspan><tspan class="g">g</tspan><tspan class="g">o</tspan><tspan class="g">s</tspan><tspan class="p"> </tspan><tspan class="p">-</tspan><tspan class="p"> </tspan><tspan class="g">N</tspan><tspan class="g">i</tspan><tspan class="p">g</tspan><tspan class="p">e</tspan><tspan class="p">r</tspan><tspan class="p">i</tspan><tspan class="g">a</tspan></text><text transform="translate(390.5 219) rotate(98.00)" x="245.5" y="0" font-size="13.6" letter-spacing="0" font-weight="normal"><tspan class="p">S</tspan><tspan class="g">i</tspan><tspan class="g">n</tspan><tspan class="g">g</tspan><tspan class="g">a</tspan><tspan class="g">p</tspan><tspan class="p">o</tspan><tspan class="p">r</tspan><tspan class="p">e</tspan><tspan class="g"> </tspan><tspan class="p">-</tspan><tspan class="p"> </tspan><tspan class="g">S</tspan><tspan class="p">i</tspan><tspan class="p">n</tspan><tspan class="p">g</tspan><tspan class="g">a</tspan><tspan class="p">p</tspan><tspan class="g">o</tspan><tspan class="g">r</tspan><tspan class="g">e</tspan></text><text transform="translate(390.5 219) rotate(101.70)" x="245.5" y="0" font-size="13.6" letter-spacing="0" font-weight="normal"><tspan class="p">C</tspan><tspan class="p">a</tspan><tspan class="p">p</tspan><tspan class="p">e</tspan><tspan class="g"> </tspan><tspan class="p">T</tspan><tspan class="p">o</tspan><tspan class="p">w</tspan><tspan class="g">n</tspan><tspan class="g"> </tspan><tspan class="g">-</tspan><tspan class="g"> </tspan><tspan class="g">S</tspan><tspan class="p">o</tspan><tspan class="g">u</tspan><tspan class="p">t</tspan><tspan class="g">h</tspan><tspan class="p"> </tspan><tspan class="g">A</tspan><tspan class="p">f</tspan><tspan class="p">r</tspan><tspan class="p">i</tspan><tspan class="p">c</tspan><tspan class="g">a</tspan></text><text transform="translate(390.5 219) rotate(105.40)" x="245.5" y="0" font-size="13.6" letter-spacing="0" font-weight="normal"><tspan class="g">B</tspan><tspan class="p">u</tspan><tspan class="p">e</tspan><tspan class="g">n</tspan><tspan class="g">o</tspan><tspan class="p">s</tspan><tspan class="g"> </tspan><tspan class="g">A</tspan><tspan class="g">i</tspan><tspan class="p">r</tspan><tspan class="p">e</tspan><tspan class="g">s</tspan><tspan class="g"> </tspan><tspan class="g">-</tspan><tspan class="p"> </tspan><tspan class="p">A</tspan><tspan class="p">r</tspan><tspan class="p">g</tspan><tspan class="g">e</tspan><tspan class="g">n</tspan><tspan class="g">t</tspan><tspan class="p">i</tspan><tspan class="g">n</tspan><tspan class="p">a</tspan></text><text transform="translate(390.5 219) rotate(109.10)" x="245.5" y="0" font-size="13.6" letter-spacing="0" font-weight="normal"><tspan class="p">R</tspan><tspan class="g">i</tspan><tspan class="g">o</tspan><tspan class="p"> </tspan><tspan class="g">d</tspan><tspan class="g">e</tspan><tspan class="p"> </tspan><tspan class="p">J</tspan><tspan class="p">a</tspan><tspan class="p">n</tspan><tspan class="p">e</tspan><tspan class="g">i</tspan><tspan class="g">r</tspan><tspan class="p">o</tspan><tspan class="p"> </tspan><tspan class="p">-</tspan><tspan class="g"> </tspan><tspan class="p">B</tspan><tspan class="p">r</tspan><tspan class="p">a</tspan><tspan class="g">z</tspan><tspan class="g">i</tspan><tspan class="p">l</tspan></text><text transform="translate(390.5 219) rotate(112.80)" x="245.5" y="0" font-size="13.6" letter-spacing="0" font-weight="normal"><tspan class="p">M</tspan><tspan class="p">e</tspan><tspan class="g">x</tspan><tspan class="g">i</tspan><tspan class="p">c</tspan><tspan class="p">o</tspan><tspan class="g"> </tspan><tspan class="p">C</tspan><tspan class="p">i</tspan><tspan class="p">t</tspan><tspan class="g">y</tspan><tspan class="p"> </tspan><tspan class="g">-</tspan><tspan class="p"> </tspan><tspan class="p">M</tspan><tspan class="g">e</tspan><tspan class="g">x</tspan><tspan class="p">i</tspan><tspan class="p">c</tspan><tspan class="g">o</tspan></text><text transform="translate(390.5 219) rotate(116.50)" x="245.5" y="0" font-size="13.6" letter-spacing="0" font-weight="normal"><tspan class="p">C</tspan><tspan class="p">a</tspan><tspan class="g">i</tspan><tspan class="p">r</tspan><tspan class="g">o</tspan><tspan class="p"> </tspan><tspan class="g">-</tspan><tspan class="p"> </tspan><tspan class="p">E</tspan><tspan class="p">g</tspan><tspan class="g">y</tspan><tspan class="g">p</tspan><tspan class="g">t</tspan></text><text transform="translate(390.5 219) rotate(120.20)" x="245.5" y="0" font-size="13.6" letter-spacing="0" font-weight="normal"><tspan class="p">I</tspan><tspan class="g">s</tspan><tspan class="p">t</tspan><tspan class="g">a</tspan><tspan class="p">n</tspan><tspan class="p">b</tspan><tspan class="g">u</tspan><tspan class="g">l</tspan><tspan class="p"> </tspan><tspan class="p">-</tspan><tspan class="g"> </tspan><tspan class="g">T</tspan><tspan class="p">u</tspan><tspan class="p">r</tspan><tspan class="g">k</tspan><tspan class="g">e</tspan><tspan class="p">y</tspan></text><text transform="translate(390.5 219) rotate(123.90)" x="245.5" y="0" font-size="13.6" letter-spacing="0" font-weight="normal"><tspan class="p">M</tspan><tspan class="g">o</tspan><tspan class="p">s</tspan><tspan class="g">c</tspan><tspan class="g">o</tspan><tspan class="g">w</tspan><tspan class="p"> </tspan><tspan class="g">-</tspan><tspan class="p"> </tspan><tspan class="p">R</tspan><tspan class="g">u</tspan><tspan class="g">s</tspan><tspan class="p">s</tspan><tspan class="p">i</tspan><tspan class="p">a</tspan></text><text transform="translate(390.5 219) rotate(127.60)" x="245.5" y="0" font-size="13.6" letter-spacing="0" font-weight="normal"><tspan class="g">A</tspan><tspan class="p">t</tspan><tspan class="p">h</tspan><tspan class="p">e</tspan><tspan class="g">n</tspan><tspan class="g">s</tspan><tspan class="p"> </tspan><tspan class="g">-</tspan><tspan class="g"> </tspan><tspan class="p">G</tspan><tspan class="g">r</tspan><tspan class="p">e</tspan><tspan class="g">e</tspan><tspan class="g">c</tspan><tspan class="g">e</tspan></text><text transform="translate(390.5 219) rotate(131.30)" x="245.5" y="0" font-size="13.6" letter-spacing="0" font-weight="normal"><tspan class="p">L</tspan><tspan class="p">i</tspan><tspan class="g">s</tspan><tspan class="p">b</tspan><tspan class="g">o</tspan><tspan class="p">n</tspan><tspan class="p"> </tspan><tspan class="p">-</tspan><tspan class="g"> </tspan><tspan class="p">P</tspan><tspan class="p">o</tspan><tspan class="g">r</tspan><tspan class="g">t</tspan><tspan class="p">u</tspan><tspan class="p">g</tspan><tspan class="p">a</tspan><tspan class="p">l</tspan></text><text transform="translate(390.5 219) rotate(135.00)" x="245.5" y="0" font-size="13.6" letter-spacing="0" font-weight="normal"><tspan class="p">V</tspan><tspan class="p">i</tspan><tspan class="p">e</tspan><tspan class="p">n</tspan><tspan class="g">n</tspan><tspan class="p">a</tspan><tspan class="g"> </tspan><tspan class="p">-</tspan><tspan class="g"> </tspan><tspan class="g">A</tspan><tspan class="g">u</tspan><tspan class="p">s</tspan><tspan class="g">t</tspan><tspan class="p">r</tspan><tspan class="g">i</tspan><tspan class="p">a</tspan></text><text transform="translate(390.5 219) rotate(138.70)" x="245.5" y="0" font-size="13.6" letter-spacing="0" font-weight="normal"><tspan class="g">P</tspan><tspan class="g">r</tspan><tspan class="g">a</tspan><tspan class="g">g</tspan><tspan class="p">u</tspan><tspan class="g">e</tspan><tspan class="p"> </tspan><tspan class="g">-</tspan><tspan class="g"> </tspan><tspan class="p">C</tspan><tspan class="g">z</tspan><tspan class="g">e</tspan><tspan class="p">c</tspan><tspan class="p">h</tspan><tspan class="g"> </tspan><tspan class="p">R</tspan><tspan class="g">e</tspan><tspan class="p">p</tspan><tspan class="g">u</tspan><tspan class="p">b</tspan><tspan class="g">l</tspan><tspan class="g">i</tspan><tspan class="p">c</tspan></text><text transform="translate(390.5 219) rotate(142.40)" x="245.5" y="0" font-size="13.6" letter-spacing="0" font-weight="normal"><tspan class="p">W</tspan><tspan class="g">a</tspan><tspan class="p">r</tspan><tspan class="p">s</tspan><tspan class="p">a</tspan><tspan class="p">w</tspan><tspan class="g"> </tspan><tspan class="g">-</tspan><tspan class="g"> </tspan><tspan class="p">P</tspan><tspan class="g">o</tspan><tspan class="p">l</tspan><tspan class="g">a</tspan><tspan class="g">n</tspan><tspan class="p">d</tspan></text><text transform="translate(390.5 219) rotate(146.10)" x="245.5" y="0" font-size="13.6" letter-spacing="0" font-weight="normal"><tspan class="g">B</tspan><tspan class="g">u</tspan><tspan class="g">d</tspan><tspan class="g">a</tspan><tspan class="p">p</tspan><tspan class="g">e</tspan><tspan class="g">s</tspan><tspan class="p">t</tspan><tspan class="g"> </tspan><tspan class="p">-</tspan><tspan class="g"> </tspan><tspan class="g">H</tspan><tspan class="p">u</tspan><tspan class="g">n</tspan><tspan class="p">g</tspan><tspan class="p">a</tspan><tspan class="g">r</tspan><tspan class="p">y</tspan></text><text transform="translate(390.5 219) rotate(149.80)" x="245.5" y="0" font-size="13.6" letter-spacing="0" font-weight="normal"><tspan class="g">H</tspan><tspan class="p">e</tspan><tspan class="g">l</tspan><tspan class="g">s</tspan><tspan class="g">i</tspan><tspan class="g">n</tspan><tspan class="p">k</tspan><tspan class="p">i</tspan><tspan class="p"> </tspan><tspan class="p">-</tspan><tspan class="g"> </tspan><tspan class="p">F</tspan><tspan class="g">i</tspan><tspan class="g">n</tspan><tspan class="p">l</tspan><tspan class="p">a</tspan><tspan class="g">n</tspan><tspan class="p">d</tspan></text><text transform="translate(390.5 219) rotate(153.50)" x="245.5" y="0" font-size="13.6" letter-spacing="0" font-weight="normal"><tspan class="p">S</tspan><tspan class="p">t</tspan><tspan class="p">o</tspan><tspan class="p">c</tspan><tspan class="p">k</tspan><tspan class="g">h</tspan><tspan class="g">o</tspan><tspan class="p">l</tspan><tspan class="g">m</tspan><tspan class="p"> </tspan><tspan class="p">-</tspan><tspan class="g"> </tspan><tspan class="p">S</tspan><tspan class="p">w</tspan><tspan class="p">e</tspan><tspan class="g">d</tspan><tspan class="g">e</tspan><tspan class="g">n</tspan></text><text transform="translate(390.5 219) rotate(157.20)" x="245.5" y="0" font-size="13.6" letter-spacing="0" font-weight="normal"><tspan class="p">O</tspan><tspan class="p">s</tspan><tspan class="p">l</tspan><tspan class="g">o</tspan><tspan class="g"> </tspan><tspan class="p">-</tspan><tspan class="g"> </tspan><tspan class="p">N</tspan><tspan class="g">o</tspan><tspan class="g">r</tspan><tspan class="p">w</tspan><tspan class="g">a</tspan><tspan class="p">y</tspan></text><text transform="translate(390.5 219) rotate(160.90)" x="245.5" y="0" font-size="13.6" letter-spacing="0" font-weight="normal"><tspan class="g">C</tspan><tspan class="p">o</tspan><tspan class="p">p</tspan><tspan class="p">e</tspan><tspan class="g">n</tspan><tspan class="p">h</tspan><tspan class="g">a</tspan><tspan class="g">g</tspan><tspan class="p">e</tspan><tspan class="p">n</tspan><tspan class="g"> </tspan><tspan class="g">-</tspan><tspan class="g"> </tspan><tspan class="g">D</tspan><tspan class="p">e</tspan><tspan class="p">n</tspan><tspan class="p">m</tspan><tspan class="p">a</tspan><tspan class="g">r</tspan><tspan class="g">k</tspan></text><text transform="translate(390.5 219) rotate(164.60)" x="245.5" y="0" font-size="13.6" letter-spacing="0" font-weight="normal"><tspan class="g">Z</tspan><tspan class="p">u</tspan><tspan class="g">r</tspan><tspan class="g">i</tspan><tspan class="p">c</tspan><tspan class="g">h</tspan><tspan class="p"> </tspan><tspan class="p">-</tspan><tspan class="p"> </tspan><tspan class="p">S</tspan><tspan class="p">w</tspan><tspan class="p">i</tspan><tspan class="g">t</tspan><tspan class="g">z</tspan><tspan class="g">e</tspan><tspan class="g">r</tspan><tspan class="p">l</tspan><tspan class="g">a</tspan><tspan class="p">n</tspan><tspan class="g">d</tspan></text><text transform="translate(390.5 219) rotate(168.30)" x="245.5" y="0" font-size="13.6" letter-spacing="0" font-weight="normal"><tspan class="g">B</tspan><tspan class="p">r</tspan><tspan class="g">u</tspan><tspan class="g">s</tspan><tspan class="p">s</tspan><tspan class="g">e</tspan><tspan class="p">l</tspan><tspan class="p">s</tspan><tspan class="p"> </tspan><tspan class="g">-</tspan><tspan class="g"> </tspan><tspan class="g">B</tspan><tspan class="p">e</tspan><tspan class="g">l</tspan><tspan class="p">g</tspan><tspan class="p">i</tspan><tspan class="g">u</tspan><tspan class="g">m</tspan></text><text transform="translate(390.5 219) rotate(172.00)" x="245.5" y="0" font-size="13.6" letter-spacing="0" font-weight="normal"><tspan class="g">D</tspan><tspan class="g">u</tspan><tspan class="g">b</tspan><tspan class="p">l</tspan><tspan class="g">i</tspan><tspan class="g">n</tspan><tspan class="g"> </tspan><tspan class="p">-</tspan><tspan class="g"> </tspan><tspan class="g">I</tspan><tspan class="p">r</tspan><tspan class="p">e</tspan><tspan class="g">l</tspan><tspan class="p">a</tspan><tspan class="g">n</tspan><tspan class="p">d</tspan></text><text transform="translate(390.5 219) rotate(175.70)" x="245.5" y="0" font-size="13.6" letter-spacing="0" font-weight="normal"><tspan class="p">E</tspan><tspan class="p">d</tspan><tspan class="g">i</tspan><tspan class="p">n</tspan><tspan class="p">b</tspan><tspan class="p">u</tspan><tspan class="p">r</tspan><tspan class="g">g</tspan><tspan class="g">h</tspan><tspan class="g"> </tspan><tspan class="g">-</tspan><tspan class="p"> </tspan><tspan class="g">S</tspan><tspan class="p">c</tspan><tspan class="g">o</tspan><tspan class="g">t</tspan><tspan class="g">l</tspan><tspan class="p">a</tspan><tspan class="g">n</tspan><tspan class="g">d</tspan></text><text transform="translate(390.5 219) rotate(179.40)" x="245.5" y="0" font-size="13.6" letter-spacing="0" font-weight="normal"><tspan class="g">R</tspan><tspan class="p">e</tspan><tspan class="p">y</tspan><tspan class="p">k</tspan><tspan class="p">j</tspan><tspan class="g">a</tspan><tspan class="g">v</tspan><tspan class="g">i</tspan><tspan class="g">k</tspan><tspan class="g"> </tspan><tspan class="p">-</tspan><tspan class="p"> </tspan><tspan class="p">I</tspan><tspan class="g">c</tspan><tspan class="p">e</tspan><tspan class="p">l</tspan><tspan class="p">a</tspan><tspan class="p">n</tspan><tspan class="p">d</tspan></text><text transform="translate(390.5 219) rotate(183.10)" x="245.5" y="0" font-size="13.6" letter-spacing="0" font-weight="normal"><tspan class="p">A</tspan><tspan class="g">u</tspan><tspan class="p">c</tspan><tspan class="p">k</tspan><tspan class="g">l</tspan><tspan class="g">a</tspan><tspan class="g">n</tspan><tspan class="g">d</tspan><tspan class="p"> </tspan><tspan class="p">-</tspan><tspan class="p"> </tspan><tspan class="g">N</tspan><tspan class="p">e</tspan><tspan class="g">w</tspan><tspan class="g"> </tspan><tspan class="p">Z</tspan><tspan class="g">e</tspan><tspan class="p">a</tspan><tspan class="g">l</tspan><tspan class="p">a</tspan><tspan class="p">n</tspan><tspan class="p">d</tspan></text><text transform="translate(390.5 219) rotate(186.80)" x="245.5" y="0" font-size="13.6" letter-spacing="0" font-weight="normal"><tspan class="g">W</tspan><tspan class="g">e</tspan><tspan class="p">l</tspan><tspan class="p">l</tspan><tspan class="p">i</tspan><tspan class="g">n</tspan><tspan class="p">g</tspan><tspan class="p">t</tspan><tspan class="p">o</tspan><tspan class="g">n</tspan><tspan class="p"> </tspan><tspan class="g">-</tspan><tspan class="p"> </tspan><tspan class="p">N</tspan><tspan class="g">e</tspan><tspan class="p">w</tspan><tspan class="p"> </tspan><tspan class="g">Z</tspan><tspan class="p">e</tspan><tspan class="g">a</tspan><tspan class="g">l</tspan><tspan class="g">a</tspan><tspan class="g">n</tspan><tspan class="p">d</tspan></text><text transform="translate(390.5 219) rotate(190.50)" x="245.5" y="0" font-size="13.6" letter-spacing="0" font-weight="normal"><tspan class="p">V</tspan><tspan class="p">a</tspan><tspan class="g">n</tspan><tspan class="p">c</tspan><tspan class="g">o</tspan><tspan class="p">u</tspan><tspan class="p">v</tspan><tspan class="p">e</tspan><tspan class="g">r</tspan><tspan class="g"> </tspan><tspan class="p">-</tspan><tspan class="g"> </tspan><tspan class="p">C</tspan><tspan class="p">a</tspan><tspan class="g">n</tspan><tspan class="g">a</tspan><tspan class="g">d</tspan><tspan class="g">a</tspan></text><text transform="translate(390.5 219) rotate(194.20)" x="245.5" y="0" font-size="13.6" letter-spacing="0" font-weight="normal"><tspan class="p">S</tspan><tspan class="p">a</tspan><tspan class="p">n</tspan><tspan class="g"> </tspan><tspan class="g">F</tspan><tspan class="g">r</tspan><tspan class="p">a</tspan><tspan class="p">n</tspan><tspan class="g">c</tspan><tspan class="g">i</tspan><tspan class="p">s</tspan><tspan class="p">c</tspan><tspan class="g">o</tspan><tspan class="p"> </tspan><tspan class="p">-</tspan><tspan class="p"> </tspan><tspan class="g">U</tspan><tspan class="g">n</tspan><tspan class="p">i</tspan><tspan class="p">t</tspan><tspan class="p">e</tspan><tspan class="p">d</tspan><tspan class="g"> </tspan><tspan class="p">S</tspan><tspan class="p">t</tspan><tspan class="p">a</tspan><tspan class="g">t</tspan><tspan class="g">e</tspan><tspan class="p">s</tspan></text><text transform="translate(390.5 219) rotate(197.90)" x="245.5" y="0" font-size="13.6" letter-spacing="0" font-weight="normal"><tspan class="g">L</tspan><tspan class="p">o</tspan><tspan class="p">s</tspan><tspan class="g"> </tspan><tspan class="g">A</tspan><tspan class="g">n</tspan><tspan class="p">g</tspan><tspan class="p">e</tspan><tspan class="g">l</tspan><tspan class="p">e</tspan><tspan class="p">s</tspan><tspan class="p"> </tspan><tspan class="p">-</tspan><tspan class="p"> </tspan><tspan class="g">U</tspan><tspan class="g">n</tspan><tspan class="g">i</tspan><tspan class="g">t</tspan><tspan class="p">e</tspan><tspan class="p">d</tspan><tspan class="g"> </tspan><tspan class="p">S</tspan><tspan class="g">t</tspan><tspan class="g">a</tspan><tspan class="p">t</tspan><tspan class="g">e</tspan><tspan class="g">s</tspan></text><text transform="translate(390.5 219) rotate(201.60)" x="245.5" y="0" font-size="13.6" letter-spacing="0" font-weight="normal"><tspan class="p">C</tspan><tspan class="p">h</tspan><tspan class="g">i</tspan><tspan class="g">c</tspan><tspan class="g">a</tspan><tspan class="g">g</tspan><tspan class="g">o</tspan><tspan class="g"> </tspan><tspan class="g">-</tspan><tspan class="p"> </tspan><tspan class="p">U</tspan><tspan class="g">n</tspan><tspan class="p">i</tspan><tspan class="p">t</tspan><tspan class="g">e</tspan><tspan class="g">d</tspan><tspan class="g"> </tspan><tspan class="p">S</tspan><tspan class="p">t</tspan><tspan class="p">a</tspan><tspan class="g">t</tspan><tspan class="p">e</tspan><tspan class="g">s</tspan></text><text transform="translate(390.5 219) rotate(205.30)" x="245.5" y="0" font-size="13.6" letter-spacing="0" font-weight="normal"><tspan class="g">M</tspan><tspan class="p">i</tspan><tspan class="g">a</tspan><tspan class="g">m</tspan><tspan class="p">i</tspan><tspan class="p"> </tspan><tspan class="g">-</tspan><tspan class="p"> </tspan><tspan class="g">U</tspan><tspan class="p">n</tspan><tspan class="g">i</tspan><tspan class="g">t</tspan><tspan class="g">e</tspan><tspan class="p">d</tspan><tspan class="g"> </tspan><tspan class="g">S</tspan><tspan class="g">t</tspan><tspan class="g">a</tspan><tspan class="g">t</tspan><tspan class="g">e</tspan><tspan class="g">s</tspan></text><text transform="translate(390.5 219) rotate(209.00)" x="245.5" y="0" font-size="13.6" letter-spacing="0" font-weight="normal"><tspan class="p">T</tspan><tspan class="g">o</tspan><tspan class="p">k</tspan><tspan class="g">y</tspan><tspan class="p">o</tspan><tspan class="g"> </tspan><tspan class="p">-</tspan><tspan class="g"> </tspan><tspan class="p">J</tspan><tspan class="p">a</tspan><tspan class="p">p</tspan><tspan class="p">a</tspan><tspan class="p">n</tspan></text><text transform="translate(390.5 219) rotate(212.70)" x="245.5" y="0" font-size="13.6" letter-spacing="0" font-weight="normal"><tspan class="p">P</tspan><tspan class="p">a</tspan><tspan class="g">r</tspan><tspan class="p">i</tspan><tspan class="p">s</tspan><tspan class="p"> </tspan><tspan class="g">-</tspan><tspan class="g"> </tspan><tspan class="g">F</tspan><tspan class="p">r</tspan><tspan class="g">a</tspan><tspan class="p">n</tspan><tspan class="p">c</tspan><tspan class="p">e</tspan></text><text transform="translate(390.5 219) rotate(216.40)" x="245.5" y="0" font-size="13.6" letter-spacing="0" font-weight="normal"><tspan class="g">N</tspan><tspan class="g">e</tspan><tspan class="g">w</tspan><tspan class="p"> </tspan><tspan class="g">Y</tspan><tspan class="p">o</tspan><tspan class="g">r</tspan><tspan class="p">k</tspan><tspan class="g"> </tspan><tspan class="g">-</tspan><tspan class="g"> </tspan><tspan class="p">U</tspan><tspan class="p">n</tspan><tspan class="g">i</tspan><tspan class="p">t</tspan><tspan class="g">e</tspan><tspan class="p">d</tspan><tspan class="g"> </tspan><tspan class="p">S</tspan><tspan class="p">t</tspan><tspan class="p">a</tspan><tspan class="p">t</tspan><tspan class="p">e</tspan><tspan class="p">s</tspan></text><text transform="translate(390.5 219) rotate(220.10)" x="245.5" y="0" font-size="13.6" letter-spacing="0" font-weight="normal"><tspan class="g">L</tspan><tspan class="p">o</tspan><tspan class="p">n</tspan><tspan class="p">d</tspan><tspan class="p">o</tspan><tspan class="p">n</tspan><tspan class="g"> </tspan><tspan class="g">-</tspan><tspan class="p"> </tspan><tspan class="g">U</tspan><tspan class="g">n</tspan><tspan class="p">i</tspan><tspan class="g">t</tspan><tspan class="g">e</tspan><tspan class="g">d</tspan><tspan class="p"> </tspan><tspan class="g">K</tspan><tspan class="g">i</tspan><tspan class="p">n</tspan><tspan class="p">g</tspan><tspan class="g">d</tspan><tspan class="g">o</tspan><tspan class="p">m</tspan></text><text transform="translate(390.5 219) rotate(223.80)" x="245.5" y="0" font-size="13.6" letter-spacing="0" font-weight="normal"><tspan class="p">S</tspan><tspan class="p">y</tspan><tspan class="p">d</tspan><tspan class="g">n</tspan><tspan class="p">e</tspan><tspan class="p">y</tspan><tspan class="g"> </tspan><tspan class="g">-</tspan><tspan class="p"> </tspan><tspan class="g">A</tspan><tspan class="g">u</tspan><tspan class="g">s</tspan><tspan class="g">t</tspan><tspan class="g">r</tspan><tspan class="g">a</tspan><tspan class="g">l</tspan><tspan class="p">i</tspan><tspan class="g">a</tspan></text><text transform="translate(390.5 219) rotate(227.50)" x="245.5" y="0" font-size="13.6" letter-spacing="0" font-weight="normal"><tspan class="g">T</tspan><tspan class="g">o</tspan><tspan class="p">r</tspan><tspan class="g">o</tspan><tspan class="g">n</tspan><tspan class="p">t</tspan><tspan class="p">o</tspan><tspan class="p"> </tspan><tspan class="p">-</tspan><tspan class="p"> </tspan><tspan class="p">C</tspan><tspan class="p">a</tspan><tspan class="p">n</tspan><tspan class="p">a</tspan><tspan class="g">d</tspan><tspan class="g">a</tspan></text><text transform="translate(390.5 219) rotate(231.20)" x="245.5" y="0" font-size="13.6" letter-spacing="0" font-weight="normal"><tspan class="p">B</tspan><tspan class="g">e</tspan><tspan class="p">r</tspan><tspan class="g">l</tspan><tspan class="g">i</tspan><tspan class="g">n</tspan><tspan class="p"> </tspan><tspan class="p">-</tspan><tspan class="g"> </tspan><tspan class="p">G</tspan><tspan class="g">e</tspan><tspan class="g">r</tspan><tspan class="p">m</tspan><tspan class="g">a</tspan><tspan class="g">n</tspan><tspan class="g">y</tspan></text><text transform="translate(390.5 219) rotate(234.90)" x="245.5" y="0" font-size="13.6" letter-spacing="0" font-weight="normal"><tspan class="p">M</tspan><tspan class="g">a</tspan><tspan class="g">d</tspan><tspan class="p">r</tspan><tspan class="g">i</tspan><tspan class="p">d</tspan><tspan class="g"> </tspan><tspan class="g">-</tspan><tspan class="p"> </tspan><tspan class="g">S</tspan><tspan class="p">p</tspan><tspan class="p">a</tspan><tspan class="g">i</tspan><tspan class="g">n</tspan></text><text transform="translate(390.5 219) rotate(238.60)" x="245.5" y="0" font-size="13.6" letter-spacing="0" font-weight="normal"><tspan class="p">R</tspan><tspan class="p">o</tspan><tspan class="p">m</tspan><tspan class="g">e</tspan><tspan class="g"> </tspan><tspan class="p">-</tspan><tspan class="g"> </tspan><tspan class="p">I</tspan><tspan class="g">t</tspan><tspan class="p">a</tspan><tspan class="g">l</tspan><tspan class="g">y</tspan></text><text transform="translate(390.5 219) rotate(242.30)" x="245.5" y="0" font-size="13.6" letter-spacing="0" font-weight="normal"><tspan class="g">S</tspan><tspan class="g">e</tspan><tspan class="p">o</tspan><tspan class="p">u</tspan><tspan class="p">l</tspan><tspan class="g"> </tspan><tspan class="g">-</tspan><tspan class="g"> </tspan><tspan class="p">S</tspan><tspan class="g">o</tspan><tspan class="g">u</tspan><tspan class="g">t</tspan><tspan class="p">h</tspan><tspan class="p"> </tspan><tspan class="p">K</tspan><tspan class="p">o</tspan><tspan class="g">r</tspan><tspan class="g">e</tspan><tspan class="g">a</tspan></text><text transform="translate(390.5 219) rotate(246.00)" x="245.5" y="0" font-size="13.6" letter-spacing="0" font-weight="normal"><tspan class="g">D</tspan><tspan class="g">u</tspan><tspan class="g">b</tspan><tspan class="g">a</tspan><tspan class="g">i</tspan><tspan class="g"> </tspan><tspan class="g">-</tspan><tspan class="g"> </tspan><tspan class="p">U</tspan><tspan class="g">A</tspan><tspan class="p">E</tspan></text></g></svg>
<svg style="left:0;top:0" width="1920" height="1030"><g transform="translate(1068.5 358.5) rotate(-17.9)"><rect x="-2" y="-12.5" width="490" height="25" fill="none" stroke="#5b87e6" stroke-width="2" stroke-dasharray="2 2.6"/><path d="M-17 0 H17 M0 -15 V15" stroke="#8fd6f5" stroke-width="2" stroke-linecap="round"/></g></svg>
<div class="t" style="left:569px;top:495.0px;font-size:12px;color:#f0f0f0;letter-spacing:-0.25px">Hold S <span style="color:#3e3e3e">Direct Layer Selection</span></div>
<div class="t" style="left:569px;top:509.2px;font-size:12px;color:#f0f0f0;letter-spacing:-0.25px">Space <span style="color:#3e3e3e">Play/ Stop</span></div>
<div class="t" style="left:569px;top:523.4px;font-size:12px;color:#f0f0f0;letter-spacing:-0.25px">Space + click + drag <span style="color:#3e3e3e">Pan</span></div>
<div class="t" style="left:569px;top:537.6px;font-size:12px;color:#f0f0f0;letter-spacing:-0.25px">Alt + click + drag <span style="color:#3e3e3e">Move Pivot Point</span></div>
<div class="t" style="left:569px;top:551.8px;font-size:12px;color:#f0f0f0;letter-spacing:-0.25px">Shift <span style="color:#3e3e3e">Enable Snapping</span></div>
<div class="t" style="left:998px;top:571px;color:#f2f2f2;font-size:12px;">Viewport Quality: High</div>
<div style="left:530px;top:591px;width:1057px;height:22px;background:#424242;"></div>
<div style="left:535px;top:593px;width:77px;height:17px;background:#2b2b2b;border-radius:3px;"></div>
<div class="t" style="left:538px;top:596px;color:#e6e6e6;font-size:12px;">41%</div>
<svg style="left:598px;top:598px" width="9" height="6"><path d="M0.5 0.5 L4.5 5 L8.5 0.5" stroke="#bbb" stroke-width="1.1" fill="none"/></svg>
<div style="left:866px;top:593px;width:100px;height:19px;background:#2e2e2e;border:1px solid #262626;border-radius:4px;"></div>
<div style="left:886px;top:594px;width:1px;height:17px;background:#262626;"></div>
<div style="left:906px;top:594px;width:1px;height:17px;background:#262626;"></div>
<div style="left:926px;top:594px;width:1px;height:17px;background:#262626;"></div>
<div style="left:946px;top:594px;width:1px;height:17px;background:#262626;"></div>
<svg style="left:870.0px;top:596px" width="12" height="12"><rect x="1" y="1" width="1.8" height="10" fill="#d8d8d8"/><path d="M10 1 L3 6 L10 11 Z" fill="#d8d8d8"/></svg>
<svg style="left:889.8px;top:596px" width="12" height="12"><path d="M7 1 L0 6 L7 11 Z" fill="#d8d8d8"/><rect x="8.5" y="1" width="1.8" height="10" fill="#d8d8d8"/></svg>
<svg style="left:909.6px;top:596px" width="12" height="12"><path d="M2 1 L10 6 L2 11 Z" fill="#d8d8d8"/></svg>
<svg style="left:929.4px;top:596px" width="12" height="12"><rect x="0.5" y="1" width="1.8" height="10" fill="#d8d8d8"/><path d="M4 1 L11 6 L4 11 Z" fill="#d8d8d8"/></svg>
<svg style="left:949.2px;top:596px" width="12" height="12"><path d="M1 1 L8 6 L1 11 Z" fill="#d8d8d8"/><rect x="9" y="1" width="1.8" height="10" fill="#d8d8d8"/></svg>
<div style="left:971px;top:593px;width:20px;height:19px;background:#2e2e2e;border:1px solid #262626;border-radius:4px;"></div>
<svg style="left:974px;top:595px" width="14" height="13"><path d="M5 3 H1 V11 H13 V6" stroke="#ddd" stroke-width="1.3" fill="none"/><path d="M5 7 Q6 3 10 3 M8 0.5 L11 3 L8 5.5" stroke="#ddd" stroke-width="1.3" fill="none"/></svg>
<div style="left:1232px;top:593px;width:36px;height:19px;background:#2e2e2e;border:1px solid #262626;border-radius:4px;"></div>
<svg style="left:1235px;top:598px" width="14" height="10"><path d="M4 0.5 H13.5 V9.5 H4 L0.5 5 Z" fill="#ddd"/><circle cx="5" cy="5" r="1.6" fill="#333"/></svg>
<div class="t" style="left:1257px;top:596px;color:#777;font-size:12px;">0</div>
<div style="left:1272px;top:593px;width:31px;height:19px;background:#2e2e2e;border:1px solid #262626;border-radius:4px;"></div>
<div style="left:1291px;top:594px;width:1px;height:17px;background:#262626;"></div>
<svg style="left:1293px;top:598px" width="7" height="9"><path d="M1 1 L6 4.5 L1 8 Z" fill="none" stroke="#888" stroke-width="1"/></svg>
<div style="left:1307px;top:593px;width:31px;height:19px;background:#2e2e2e;border:1px solid #262626;border-radius:4px;"></div>
<div style="left:1326px;top:594px;width:1px;height:17px;background:#262626;"></div>
<svg style="left:1328px;top:598px" width="7" height="9"><path d="M1 1 L6 4.5 L1 8 Z" fill="none" stroke="#888" stroke-width="1"/></svg>
<div style="left:1342px;top:593px;width:31px;height:19px;background:#2e2e2e;border:1px solid #262626;border-radius:4px;"></div>
<div style="left:1361px;top:594px;width:1px;height:17px;background:#262626;"></div>
<svg style="left:1363px;top:598px" width="7" height="9"><path d="M1 1 L6 4.5 L1 8 Z" fill="none" stroke="#888" stroke-width="1"/></svg>
<div style="left:1377px;top:593px;width:19px;height:19px;background:#2e2e2e;border:1px solid #262626;border-radius:4px;"></div>
<div style="left:1400px;top:593px;width:19px;height:19px;background:#2e2e2e;border:1px solid #262626;border-radius:4px;"></div>
<div style="left:1423px;top:593px;width:31px;height:19px;background:#2e2e2e;border:1px solid #262626;border-radius:4px;"></div>
<div style="left:1442px;top:594px;width:1px;height:17px;background:#262626;"></div>
<svg style="left:1444px;top:598px" width="7" height="9"><path d="M1 1 L6 4.5 L1 8 Z" fill="none" stroke="#888" stroke-width="1"/></svg>
<div style="left:1458px;top:593px;width:31px;height:19px;background:#2e2e2e;border:1px solid #262626;border-radius:4px;"></div>
<div style="left:1477px;top:594px;width:1px;height:17px;background:#262626;"></div>
<svg style="left:1479px;top:598px" width="7" height="9"><path d="M1 1 L6 4.5 L1 8 Z" fill="none" stroke="#888" stroke-width="1"/></svg>
<div style="left:1494px;top:593px;width:31px;height:19px;background:#2e2e2e;border:1px solid #262626;border-radius:4px;"></div>
<div style="left:1513px;top:594px;width:1px;height:17px;background:#262626;"></div>
<svg style="left:1515px;top:598px" width="7" height="9"><path d="M1 1 L6 4.5 L1 8 Z" fill="none" stroke="#888" stroke-width="1"/></svg>
<div style="left:1528px;top:593px;width:31px;height:19px;background:#2e2e2e;border:1px solid #262626;border-radius:4px;"></div>
<div style="left:1547px;top:594px;width:1px;height:17px;background:#262626;"></div>
<svg style="left:1549px;top:598px" width="7" height="9"><path d="M1 1 L6 4.5 L1 8 Z" fill="none" stroke="#888" stroke-width="1"/></svg>
<div style="left:1563px;top:593px;width:21px;height:19px;background:#2e2e2e;border:1px solid #262626;border-radius:4px;"></div>
<div style="left:1528px;top:593px;width:20px;height:19px;background:#1e1e1e;border-radius:4px 0 0 4px;"></div>
<svg style="left:1275px;top:596px" width="14" height="14"><path d="M1 4 H4 L8 1 V13 L4 10 H1 Z" fill="#3ddc71"/><path d="M10 4 Q12 7 10 10 M12 2 Q15 7 12 12" stroke="#3ddc71" stroke-width="1.2" fill="none"/></svg>
<svg style="left:1310px;top:596px" width="14" height="14"><g transform="rotate(-35 7 7)"><path d="M2 13 V6 A5 5 0 0 1 12 6 V13" stroke="#ddd" stroke-width="2.2" fill="none"/></g></svg>
<svg style="left:1345px;top:596px" width="14" height="14"><path d="M4 1 V13 M9 1 V13 M1 4 H13 M1 9 H13" stroke="#ddd" stroke-width="1.2"/></svg>
<svg style="left:1380px;top:596px" width="14" height="14"><rect x="0" y="1" width="3" height="3" fill="#3ddc71"/><rect x="0" y="6" width="3" height="7" fill="#3ddc71"/><rect x="5" y="1.7" width="8.3" height="5.5" fill="none" stroke="#3ddc71" stroke-width="1.4"/><rect x="4.3" y="9" width="9.7" height="4" fill="#3ddc71"/></svg>
<svg style="left:1403px;top:596px" width="14" height="14"><path d="M1 2 L5 7 L1 12 M5 2 L9 7 L5 12 M9 2 L13 7 L9 12" stroke="#ddd" stroke-width="1.6" fill="none"/></svg>
<svg style="left:1426px;top:596px" width="14" height="14"><rect x="1" y="2" width="12" height="9" fill="none" stroke="#ddd" stroke-width="1.3"/><rect x="0" y="11" width="14" height="2" fill="#ddd"/></svg>
<svg style="left:1461px;top:596px" width="14" height="14"><rect x="1" y="1" width="8" height="6" fill="none" stroke="#ddd" stroke-width="1.1"/><path d="M3 9 H11 V3 M5 11 H13 V5" stroke="#ddd" stroke-width="1" fill="none"/></svg>
<svg style="left:1497px;top:596px" width="14" height="14"><rect x="1" y="1" width="8" height="7" fill="#ccc"/><rect x="5" y="5" width="8" height="8" fill="#333" stroke="#ddd" stroke-width="1.1"/></svg>
<svg style="left:1531px;top:596px" width="14" height="14"><rect x="1" y="1" width="3" height="3" fill="#3ddc71"/><rect x="1" y="7" width="3" height="3" fill="#3ddc71"/><rect x="4" y="4" width="3" height="3" fill="#3ddc71"/><rect x="4" y="10" width="3" height="3" fill="#3ddc71"/><rect x="7" y="1" width="3" height="3" fill="#3ddc71"/><rect x="7" y="7" width="3" height="3" fill="#3ddc71"/><rect x="10" y="4" width="3" height="3" fill="#3ddc71"/><rect x="10" y="10" width="3" height="3" fill="#3ddc71"/></svg>
<svg style="left:1566px;top:596px" width="14" height="14"><circle cx="7" cy="7" r="3.5" fill="none" stroke="#ddd" stroke-width="2.5"/><rect x="6" y="0.5" width="2" height="3" fill="#ddd" transform="rotate(0 7 7)"/><rect x="6" y="0.5" width="2" height="3" fill="#ddd" transform="rotate(45 7 7)"/><rect x="6" y="0.5" width="2" height="3" fill="#ddd" transform="rotate(90 7 7)"/><rect x="6" y="0.5" width="2" height="3" fill="#ddd" transform="rotate(135 7 7)"/><rect x="6" y="0.5" width="2" height="3" fill="#ddd" transform="rotate(180 7 7)"/><rect x="6" y="0.5" width="2" height="3" fill="#ddd" transform="rotate(225 7 7)"/><rect x="6" y="0.5" width="2" height="3" fill="#ddd" transform="rotate(270 7 7)"/><rect x="6" y="0.5" width="2" height="3" fill="#ddd" transform="rotate(315 7 7)"/></svg>
<div style="left:494px;top:613px;width:1093px;height:6px;background:#171717;"></div>
<div style="left:1593px;top:85px;width:321px;height:22px;background:#1e1e1e;"></div>
<div style="left:1593px;top:85px;width:40px;height:22px;background:#424242;border-radius:4px 4px 0 0;"></div>
<div style="left:1634px;top:85px;width:69px;height:22px;background:#262626;border-radius:4px 4px 0 0;"></div>
<div class="t" style="left:1598px;top:90px;color:#e8e8e8;font-size:12px;">Color</div>
<div class="t" style="left:1639px;top:90px;color:#e8e8e8;font-size:12px;">Add Layers</div>
<div style="left:1593px;top:107px;width:321px;height:410px;background:#484848;"></div>
<div style="left:1900px;top:107px;width:14px;height:410px;background:#3c3c3c;"></div>
<div style="left:1903px;top:109px;width:9px;height:350px;background:#4e4e4e;border-radius:5px;"></div>
<div style="left:1645px;top:119px;width:201px;height:201px;border-radius:50%;background:conic-gradient(from 0deg, hsl(90,100%,50%), hsl(60,100%,50%) 30deg, hsl(30,100%,50%) 60deg, hsl(0,100%,50%) 90deg, hsl(330,100%,50%) 120deg, hsl(300,100%,50%) 150deg, hsl(270,100%,50%) 180deg, hsl(240,100%,50%) 210deg, hsl(210,100%,50%) 240deg, hsl(180,100%,50%) 270deg, hsl(150,100%,50%) 300deg, hsl(120,100%,50%) 330deg, hsl(90,100%,50%) 360deg);"></div>
<div style="left:1670px;top:144px;width:151px;height:151px;border-radius:50%;background:#484848"></div>
<div style="left:1702px;top:176px;width:90px;height:90px;background:linear-gradient(to right,#000,rgba(0,0,0,0)),linear-gradient(to bottom,#fff,#ff0a84)"></div>
<svg style="left:1760px;top:248px" width="18" height="18"><circle cx="9" cy="9" r="6" fill="none" stroke="#fff" stroke-width="1.3"/></svg>
<svg style="left:1814px;top:252px" width="18" height="18"><circle cx="9" cy="9" r="6" fill="none" stroke="#fff" stroke-width="1.3"/></svg>
<div style="left:1600px;top:333px;width:22px;height:22px;background:#bf1363;border-radius:3px;"></div>
<div class="t" style="left:1625px;top:338px;color:#eaeaea;font-size:12px;">Medium Violet Red</div>
<div style="left:1871px;top:333px;width:22px;height:22px;background:#2e2e2e;border:1px solid #262626;border-radius:4px;"></div>
<svg style="left:1876px;top:337px" width="13" height="13"><path d="M1.5 11.5 L8 5" stroke="#ddd" stroke-width="1.6"/><path d="M7.5 3 L10 5.5" stroke="#ddd" stroke-width="3"/></svg>
<div style="left:1600px;top:360px;width:49px;height:17px;background:#3a3a3a;border:1px solid #2e2e2e;border-radius:3px;"></div>
<div class="t" style="left:1603px;top:363px;color:#e6e6e6;font-size:12px;">Hex</div>
<svg style="left:1636px;top:366px" width="9" height="6"><path d="M0.5 0.5 L4.5 5 L8.5 0.5" stroke="#bbb" stroke-width="1.1" fill="none"/></svg>
<div style="left:1653px;top:358px;width:240px;height:22px;background:#2c2c2c;border-radius:3px;"></div>
<div class="t" style="left:1658px;top:363px;color:#666;font-size:12px;">#</div>
<div class="t" style="left:1670px;top:363px;color:#eaeaea;font-size:12px;">bf1363</div>
<svg style="left:1598px;top:385px" width="250" height="14"><rect x="2" y="5" width="240" height="4" rx="2" fill="#e6e6e6"/><circle cx="236" cy="7" r="5" fill="#72c5a0" stroke="#5aa987" stroke-width="1"/></svg>
<div style="left:1849px;top:384px;width:44px;height:17px;background:#2c2c2c;border-radius:3px;"></div>
<div class="t" style="left:1853px;top:386px;color:#666;font-size:12px;">A</div>
<div class="t" style="left:1866px;top:386px;color:#eaeaea;font-size:12px;">255</div>
<div style="left:1597px;top:406px;width:300px;height:23px;background:#2a2a2a;border-radius:3px;"></div>
<div style="left:1599px;top:408px;width:148px;height:21px;background:#4a4a4a;border-radius:3px 3px 0 0;"></div>
<div style="left:1747px;top:408px;width:148px;height:21px;background:#353535;border-radius:3px 3px 0 0;"></div>
<div class="t" style="left:1648px;top:411px;color:#eaeaea;font-size:12px;">Swatches</div>
<div class="t" style="left:1793px;top:411px;color:#cfcfcf;font-size:12px;">Generator</div>
<div style="left:1597px;top:429px;width:300px;height:88px;background:#3a3a3a;"></div>
<div style="left:1598px;top:431px;width:257px;height:19px;background:#555555;border-radius:3px;"></div>
<div style="left:1599px;top:432px;width:62px;height:17px;background:#2a2a2a;border-radius:3px;"></div>
<svg style="left:1605px;top:434px" width="12" height="11"><path d="M1 1 V10 M4 1 V10 M7 1 L10 10" stroke="#3ddc71" stroke-width="1.6"/></svg>
<div class="t" style="left:1620px;top:434px;color:#eaeaea;font-size:12px;">Library</div>
<svg style="left:1671px;top:434px" width="11" height="11"><rect x="0.5" y="1" width="10" height="9" fill="#ddd"/><rect x="0.5" y="0" width="4" height="2" fill="#ddd"/><path d="M2.5 5 H8.5 M2.5 7.5 H8.5" stroke="#555" stroke-width="1"/></svg>
<div class="t" style="left:1686px;top:434px;color:#eaeaea;font-size:12px;">Project</div>
<svg style="left:1738px;top:433px" width="10" height="12"><path d="M0.6 0.6 H6 L9.4 4 V11.4 H0.6 Z" fill="none" stroke="#ddd" stroke-width="1.1"/></svg>
<div class="t" style="left:1752px;top:434px;color:#eaeaea;font-size:12px;">Scene</div>
<svg style="left:1800px;top:433px" width="12" height="12"><path d="M1 1 H8 Q11 1 11 4 V7 L7 11 H4 Q1 11 1 8 Z" fill="none" stroke="#ddd" stroke-width="1.1"/></svg>
<div class="t" style="left:1816px;top:434px;color:#eaeaea;font-size:12px;">Labels</div>
<div style="left:1859px;top:431px;width:18px;height:18px;background:#2a2a2a;border-radius:3px;"></div>
<svg style="left:1863px;top:435px" width="10" height="10"><rect x="0" y="0" width="4" height="4" fill="#3ddc71"/><rect x="6" y="0" width="4" height="4" fill="#3ddc71"/><rect x="0" y="6" width="4" height="4" fill="#3ddc71"/><rect x="6" y="6" width="4" height="4" fill="#3ddc71"/></svg>
<svg style="left:1881px;top:435px" width="11" height="10"><path d="M0 1 H11 M0 5 H11 M0 9 H11" stroke="#ddd" stroke-width="1.3"/></svg>
<div style="left:1598px;top:452px;width:276px;height:18px;background:#474747;border:1px solid #3c3c3c;border-radius:3px;"></div>
<div class="t" style="left:1601px;top:455px;color:#eaeaea;font-size:12px;">Simple</div>
<svg style="left:1859px;top:458px" width="10" height="6"><path d="M0.5 0.5 L5.0 5 L9.5 0.5" stroke="#bbb" stroke-width="1.1" fill="none"/></svg>
<svg style="left:1878px;top:459px" width="14" height="4"><circle cx="2" cy="2" r="1.2" fill="#ddd"/><circle cx="7" cy="2" r="1.2" fill="#ddd"/><circle cx="12" cy="2" r="1.2" fill="#ddd"/></svg>
<div style="left:1598px;top:470px;width:298px;height:47px;background:#2a2a2a;"></div>
<div style="left:1600px;top:473px;width:18px;height:18px;background:#1477c9;border-radius:3px;"></div>
<div style="left:1622px;top:473px;width:18px;height:18px;background:#17a0df;border-radius:3px;"></div>
<div style="left:1644px;top:473px;width:18px;height:18px;background:#96c76a;border-radius:3px;"></div>
<div style="left:1666px;top:473px;width:18px;height:18px;background:#f4e54b;border-radius:3px;"></div>
<div style="left:1688px;top:473px;width:18px;height:18px;background:#f07a10;border-radius:3px;"></div>
<div style="left:1593px;top:517px;width:321px;height:7px;background:#1a1a1a;"></div>
<div style="left:1593px;top:524px;width:321px;height:21px;background:#1e1e1e;"></div>
<div style="left:1593px;top:523px;width:38px;height:22px;background:#4a4a4a;border-radius:4px 4px 0 0;"></div>
<div class="t" style="left:1598px;top:529px;color:#e8e8e8;font-size:12px;">Align</div>
<div style="left:1593px;top:545px;width:321px;height:68px;background:#484848;"></div>
<div class="t" style="left:1601px;top:559px;color:#e6e6e6;font-size:12px;">Alignment</div>
<div class="t" style="left:1601px;top:587px;color:#e6e6e6;font-size:12px;">Distribution</div>
<div style="left:1790px;top:555px;width:55px;height:18px;background:#2b2b2b;border:1px solid #222;border-radius:4px;"></div>
<svg style="left:1793px;top:558px" width="12" height="12"><path d="M1 0 V12 M3 3 H9 M3 8 H11" stroke="#dcdcdc" stroke-width="1.5"/></svg>
<div style="left:1808px;top:556px;width:1px;height:16px;background:#3a3a3a;"></div>
<svg style="left:1811px;top:558px" width="12" height="12"><path d="M6 0 V12 M2 3 H10 M1 8 H11" stroke="#dcdcdc" stroke-width="1.5"/></svg>
<div style="left:1826px;top:556px;width:1px;height:16px;background:#3a3a3a;"></div>
<svg style="left:1829px;top:558px" width="12" height="12"><path d="M11 0 V12 M3 3 H9 M1 8 H9" stroke="#dcdcdc" stroke-width="1.5"/></svg>
<div style="left:1852px;top:555px;width:55px;height:18px;background:#2b2b2b;border:1px solid #222;border-radius:4px;"></div>
<svg style="left:1855px;top:558px" width="12" height="12"><path d="M0 1 H12 M3 3 V9 M8 3 V11" stroke="#dcdcdc" stroke-width="1.5"/></svg>
<div style="left:1870px;top:556px;width:1px;height:16px;background:#3a3a3a;"></div>
<svg style="left:1873px;top:558px" width="12" height="12"><path d="M0 6 H12 M3 2 V10 M8 1 V11" stroke="#dcdcdc" stroke-width="1.5"/></svg>
<div style="left:1888px;top:556px;width:1px;height:16px;background:#3a3a3a;"></div>
<svg style="left:1891px;top:558px" width="12" height="12"><path d="M0 11 H12 M3 3 V9 M8 1 V9" stroke="#dcdcdc" stroke-width="1.5"/></svg>
<div style="left:1790px;top:583px;width:55px;height:18px;background:#2b2b2b;border:1px solid #222;border-radius:4px;"></div>
<svg style="left:1793px;top:586px" width="12" height="12"><path d="M1 0 V12 M6 2 V10 M11 0 V12" stroke="#dcdcdc" stroke-width="1.5"/></svg>
<div style="left:1808px;top:584px;width:1px;height:16px;background:#3a3a3a;"></div>
<svg style="left:1811px;top:586px" width="12" height="12"><path d="M0 1 H12 M2 6 H10 M0 11 H12" stroke="#dcdcdc" stroke-width="1.5"/></svg>
<div style="left:1826px;top:584px;width:1px;height:16px;background:#3a3a3a;"></div>
<svg style="left:1829px;top:586px" width="12" height="12"><path d="M1 11 L4 8 M5 7 L8 4 M9 3 L11 1" stroke="#dcdcdc" stroke-width="1.5"/></svg>
<div style="left:1593px;top:613px;width:321px;height:6px;background:#171717;"></div>
<div style="left:494px;top:619px;width:1420px;height:22px;background:#1e1e1e;"></div>
<div style="left:494px;top:619px;width:89px;height:22px;background:#424242;border-radius:4px 4px 0 0;"></div>
<div style="left:584px;top:619px;width:101px;height:22px;background:#262626;border-radius:4px 4px 0 0;"></div>
<div style="left:686px;top:619px;width:111px;height:22px;background:#262626;border-radius:4px 4px 0 0;"></div>
<div class="t" style="left:499px;top:624px;color:#e8e8e8;font-size:12px;">Scene Window</div>
<div class="t" style="left:589px;top:624px;color:#e8e8e8;font-size:12px;">JavaScript Editor</div>
<div class="t" style="left:691px;top:624px;color:#e8e8e8;font-size:12px;">Dependency Graph</div>
<div style="left:494px;top:641px;width:1420px;height:362px;background:#2b2b2b;"></div>
<div style="left:494px;top:641px;width:506px;height:335px;background:#333333;"></div>
<div style="left:1000px;top:641px;width:914px;height:335px;background:#282828;"></div>
<div style="left:499px;top:643px;width:501px;height:20px;background:#474747;"></div>
<div style="left:494px;top:663px;width:506px;height:43px;background:#474747;"></div>
<div style="left:498px;top:665px;width:292px;height:20px;background:#262626;border-radius:10px;"></div>
<svg style="left:502px;top:669px" width="12" height="12"><circle cx="5" cy="5" r="4" stroke="#ddd" stroke-width="1.2" fill="none"/><path d="M8 8 L11 11" stroke="#ddd" stroke-width="1.8"/></svg>
<div class="t" style="left:520px;top:669px;color:#8a8a8a;font-size:12px;">Enter a layer name</div>
<div style="left:794px;top:665px;width:20px;height:20px;background:#2b2b2b;border:1px solid #222;border-radius:4px;"></div>
<svg style="left:798px;top:669px" width="12" height="12"><path d="M6 0.5 V11.5 M0.5 6 H11.5" stroke="#eee" stroke-width="1.8"/></svg>
<div style="left:838px;top:665px;width:20px;height:20px;background:#2b2b2b;border:1px solid #222;border-radius:4px;"></div>
<div style="left:860px;top:665px;width:20px;height:20px;background:#2b2b2b;border:1px solid #222;border-radius:4px;"></div>
<div style="left:882px;top:665px;width:20px;height:20px;background:#2b2b2b;border:1px solid #222;border-radius:4px;"></div>
<svg style="left:841px;top:667px" width="15" height="15"><circle cx="6" cy="10" r="4" fill="#666"/><circle cx="8" cy="8" r="4" fill="#999"/><circle cx="10" cy="5" r="4" fill="#ddd"/></svg>
<svg style="left:864px;top:668px" width="13" height="13"><g fill="#ddd"><circle cx="2" cy="2" r="1"/><circle cx="8" cy="2" r="1"/><circle cx="2" cy="8" r="1"/><path d="M8 5 L9 8 L12 9 L9 10 L8 13 L7 10 L4 9 L7 8 Z"/></g></svg>
<svg style="left:885px;top:668px" width="14" height="13"><path d="M0 2 H13 M0 6.5 H13 M0 11 H13" stroke="#ddd" stroke-width="1"/><circle cx="5" cy="2" r="1.6" fill="#2b2b2b" stroke="#ddd"/><circle cx="8" cy="6.5" r="1.6" fill="#2b2b2b" stroke="#ddd"/><circle cx="5" cy="11" r="1.6" fill="#2b2b2b" stroke="#ddd"/></svg>
<div style="left:904px;top:665px;width:94px;height:20px;background:#2b2b2b;border-radius:3px;"></div>
<div class="t" style="left:910px;top:669px;color:#555;font-size:12px;">F</div>
<div class="t" style="left:921px;top:669px;color:#eaeaea;font-size:12px;">59</div>
<svg style="left:500px;top:689px" width="14" height="14"><rect x="1" y="6" width="10" height="7" fill="#ddd"/><path d="M3 6 V4 A3 3 0 0 1 9 4 V6" stroke="#ddd" stroke-width="1.5" fill="none"/></svg>
<svg style="left:517px;top:689px" width="14" height="14"><ellipse cx="7" cy="7" rx="6" ry="3.8" fill="none" stroke="#ddd" stroke-width="1.1"/><circle cx="7" cy="7" r="1.8" fill="#ddd"/></svg>
<svg style="left:536px;top:689px" width="14" height="14"><path d="M7 1 L13 4 V10 L7 13 L1 10 V4 Z M1 4 L7 7 L13 4 M7 7 V13" fill="none" stroke="#ddd" stroke-width="1"/></svg>
<svg style="left:555px;top:689px" width="14" height="14"><path d="M1 5 H4 L8 2 V12 L4 9 H1 Z" fill="#ddd"/><path d="M10 4 Q12 7 10 10 M12 2 Q15 7 12 12" stroke="#ddd" stroke-width="1.1" fill="none"/></svg>
<svg style="left:574px;top:689px" width="14" height="14"><path d="M2 12 L9 5" stroke="#aaa" stroke-width="2"/><path d="M8 3 L11 6" stroke="#ccc" stroke-width="3"/></svg>
<svg style="left:593px;top:691px" width="14" height="10"><path d="M4 0.5 H13.5 V9.5 H4 L0.5 5 Z" fill="#ddd"/><circle cx="5" cy="5" r="1.6" fill="#333"/></svg>
<div class="t" style="left:649px;top:690px;color:#e8e8e8;font-size:12px;">Name</div>
<div style="left:494px;top:706px;width:494px;height:22px;background:#383838;"></div>
<div style="left:496px;top:707px;width:18px;height:19px;background:#2e2e2e;border-radius:3px;"></div>
<div style="left:515px;top:707px;width:18px;height:19px;background:#2e2e2e;border-radius:3px;"></div>
<svg style="left:518px;top:711px" width="12" height="12"><path d="M10.5 4.5 A5 5 0 1 1 8 1.5" stroke="#cfcfcf" stroke-width="1.2" fill="none"/><path d="M3 5.5 L5.5 8 L11 2" stroke="#cfcfcf" stroke-width="1.4" fill="none"/></svg>
<div style="left:573px;top:708px;width:16px;height:16px;background:#79d99a;border-radius:2px;"></div>
<svg style="left:593px;top:712px" width="14" height="10"><path d="M4 0.5 H13.5 V9.5 H4 L0.5 5 Z" fill="#ddd"/><circle cx="5" cy="5" r="1.6" fill="#333"/></svg>
<svg style="left:649px;top:709px" width="15" height="15"><rect x="0" y="6" width="8" height="8" fill="#a7d2f7"/><rect x="2" y="4" width="6" height="4" fill="#a7d2f7"/><path d="M6 1 H14 M8 4 H14 M8 7 H14" stroke="#ddd" stroke-width="1.1"/></svg>
<div class="t" style="left:667px;top:711px;color:#e6e6e6;font-size:12px;">Color Array</div>
<div style="left:946px;top:707px;width:21px;height:19px;background:#2e2e2e;border-radius:3px;"></div>
<svg style="left:948px;top:711px" width="18" height="11"><path d="M1 5.5 L4 2 H7 V9 H4 Z" fill="#777"/><path d="M11 2 H14 L17 5.5 L14 9 H11 Z" fill="#d05ae8"/><path d="M9 0 V11" stroke="#262626"/></svg>
<svg style="left:971px;top:711px" width="12" height="12"><circle cx="6" cy="6" r="4.5" fill="none" stroke="#666" stroke-width="1.2"/></svg>
<div style="left:1015px;top:706px;width:889px;height:19px;background:repeating-linear-gradient(135deg, #8ff5b5 0 1px, #64c98a 1px 12.35px, #8ff5b5 12.35px 13.35px, #74dd9b 13.35px 24.7px);"></div>
<div class="t" style="left:1023px;top:710px;font-size:12px;color:#1e1e1e">Color Array</div>
<div style="left:494px;top:728px;width:494px;height:22px;background:#383838;"></div>
<div style="left:496px;top:729px;width:18px;height:19px;background:#2e2e2e;border-radius:3px;"></div>
<div style="left:515px;top:729px;width:18px;height:19px;background:#2e2e2e;border-radius:3px;"></div>
<svg style="left:518px;top:733px" width="12" height="12"><path d="M10.5 4.5 A5 5 0 1 1 8 1.5" stroke="#cfcfcf" stroke-width="1.2" fill="none"/><path d="M3 5.5 L5.5 8 L11 2" stroke="#cfcfcf" stroke-width="1.4" fill="none"/></svg>
<div style="left:573px;top:730px;width:16px;height:16px;background:#c9ef7a;border-radius:2px;"></div>
<svg style="left:593px;top:734px" width="14" height="10"><path d="M4 0.5 H13.5 V9.5 H4 L0.5 5 Z" fill="#ddd"/><circle cx="5" cy="5" r="1.6" fill="#333"/></svg>
<svg style="left:649px;top:731px" width="15" height="15"><path d="M3 2 H11 L7 7 Z" fill="#8fe39a"/><path d="M7 7 V14 M2 8 V11 M12 8 V11" stroke="#ddd" stroke-width="1.2"/></svg>
<div class="t" style="left:667px;top:733px;color:#e6e6e6;font-size:12px;">Frame [Travel]</div>
<div style="left:946px;top:729px;width:21px;height:19px;background:#2e2e2e;border-radius:3px;"></div>
<svg style="left:948px;top:733px" width="18" height="11"><path d="M1 5.5 L4 2 H7 V9 H4 Z" fill="#777"/><path d="M11 2 H14 L17 5.5 L14 9 H11 Z" fill="#d05ae8"/><path d="M9 0 V11" stroke="#262626"/></svg>
<svg style="left:971px;top:733px" width="12" height="12"><circle cx="6" cy="6" r="4.5" fill="none" stroke="#666" stroke-width="1.2"/></svg>
<div style="left:1015px;top:728px;width:889px;height:19px;background:repeating-linear-gradient(135deg, #e2fb92 0 1px, #b9d96f 1px 12.35px, #e2fb92 12.35px 13.35px, #cbec7c 13.35px 24.7px);"></div>
<div class="t" style="left:1023px;top:732px;font-size:12px;color:#1e1e1e">Frame [Travel]</div>
<div style="left:494px;top:750px;width:494px;height:22px;background:#383838;"></div>
<div style="left:494px;top:750px;width:490px;height:21px;background:#3f4552;border-radius:0 4px 4px 0;"></div>
<div style="left:496px;top:751px;width:18px;height:19px;background:#2e2e2e;border-radius:3px;"></div>
<div style="left:515px;top:751px;width:18px;height:19px;background:#2e2e2e;border-radius:3px;"></div>
<svg style="left:518px;top:755px" width="12" height="12"><path d="M10.5 4.5 A5 5 0 1 1 8 1.5" stroke="#cfcfcf" stroke-width="1.2" fill="none"/><path d="M3 5.5 L5.5 8 L11 2" stroke="#cfcfcf" stroke-width="1.4" fill="none"/></svg>
<div style="left:573px;top:752px;width:16px;height:16px;background:#6a8fe0;border-radius:2px;"></div>
<svg style="left:593px;top:756px" width="14" height="10"><path d="M4 0.5 H13.5 V9.5 H4 L0.5 5 Z" fill="#ddd"/><circle cx="5" cy="5" r="1.6" fill="#333"/></svg>
<svg style="left:649px;top:753px" width="15" height="15"><rect x="0" y="6" width="8" height="8" fill="#a7d2f7"/><rect x="2" y="4" width="6" height="4" fill="#a7d2f7"/><path d="M6 1 H14 M8 4 H14 M8 7 H14" stroke="#ddd" stroke-width="1.1"/></svg>
<div class="t" style="left:667px;top:755px;color:#e6e6e6;font-size:12px;">Color Array 2 [Color]</div>
<div style="left:946px;top:751px;width:21px;height:19px;background:#2e2e2e;border-radius:3px;"></div>
<svg style="left:948px;top:755px" width="18" height="11"><path d="M1 5.5 L4 2 H7 V9 H4 Z" fill="#777"/><path d="M11 2 H14 L17 5.5 L14 9 H11 Z" fill="#d05ae8"/><path d="M9 0 V11" stroke="#262626"/></svg>
<svg style="left:971px;top:755px" width="12" height="12"><circle cx="6" cy="6" r="4.5" fill="none" stroke="#666" stroke-width="1.2"/></svg>
<div style="left:1015px;top:750px;width:889px;height:19px;background:repeating-linear-gradient(135deg, #5c8ce6 0 11.5px, #a8ccff 11.5px 12.5px, #74a2f2 12.5px 24.7px);border:1px solid #e8e8f0;"><div style="left:0;top:0;right:0;bottom:0;background:radial-gradient(circle, rgba(215,232,255,0.5) 0.8px, transparent 1.3px);background-size:3px 3px"></div></div>
<div class="t" style="left:1023px;top:754px;font-size:12px;color:#ffffff">Color Array 2 [Color]</div>
<div style="left:494px;top:772px;width:494px;height:22px;background:#383838;"></div>
<div style="left:496px;top:773px;width:18px;height:19px;background:#2e2e2e;border-radius:3px;"></div>
<div style="left:515px;top:773px;width:18px;height:19px;background:#2e2e2e;border-radius:3px;"></div>
<svg style="left:518px;top:777px" width="12" height="12"><path d="M10.5 4.5 A5 5 0 1 1 8 1.5" stroke="#cfcfcf" stroke-width="1.2" fill="none"/><path d="M3 5.5 L5.5 8 L11 2" stroke="#cfcfcf" stroke-width="1.4" fill="none"/></svg>
<div style="left:573px;top:774px;width:16px;height:16px;background:#c9ef7a;border-radius:2px;"></div>
<svg style="left:593px;top:778px" width="14" height="10"><path d="M4 0.5 H13.5 V9.5 H4 L0.5 5 Z" fill="#ddd"/><circle cx="5" cy="5" r="1.6" fill="#333"/></svg>
<svg style="left:649px;top:775px" width="15" height="15"><path d="M1 3 H14 M1 7 H14 M1 11 H14" stroke="#ddd" stroke-width="2"/></svg>
<div class="t" style="left:667px;top:777px;color:#e6e6e6;font-size:12px;">Sub-Mesh [TextDuplicator]</div>
<div style="left:946px;top:773px;width:21px;height:19px;background:#2e2e2e;border-radius:3px;"></div>
<svg style="left:948px;top:777px" width="18" height="11"><path d="M1 5.5 L4 2 H7 V9 H4 Z" fill="#e2cc78"/><path d="M11 2 H14 L17 5.5 L14 9 H11 Z" fill="#d05ae8"/><path d="M9 0 V11" stroke="#262626"/></svg>
<svg style="left:971px;top:777px" width="12" height="12"><circle cx="6" cy="6" r="4.5" fill="none" stroke="#666" stroke-width="1.2"/></svg>
<div style="left:1015px;top:772px;width:889px;height:19px;background:repeating-linear-gradient(135deg, #e2fb92 0 1px, #b9d96f 1px 12.35px, #e2fb92 12.35px 13.35px, #cbec7c 13.35px 24.7px);"></div>
<div class="t" style="left:1023px;top:776px;font-size:12px;color:#1e1e1e">Sub-Mesh [TextDuplicator]</div>
<div style="left:494px;top:794px;width:494px;height:22px;background:#383838;"></div>
<div style="left:496px;top:795px;width:18px;height:19px;background:#2e2e2e;border-radius:3px;"></div>
<div style="left:515px;top:795px;width:18px;height:19px;background:#2e2e2e;border-radius:3px;"></div>
<svg style="left:517px;top:799px" width="14" height="12"><ellipse cx="7" cy="6" rx="6" ry="3.8" fill="none" stroke="#ddd" stroke-width="1.1"/><circle cx="7" cy="6" r="1.8" fill="#ddd"/></svg>
<div style="left:535px;top:795px;width:18px;height:19px;background:#2e2e2e;border-radius:3px;"></div>
<div style="left:573px;top:796px;width:16px;height:16px;background:#ffe27a;border-radius:2px;"></div>
<svg style="left:593px;top:800px" width="14" height="10"><path d="M4 0.5 H13.5 V9.5 H4 L0.5 5 Z" fill="#ddd"/><circle cx="5" cy="5" r="1.6" fill="#333"/></svg>
<div style="left:611px;top:795px;width:32px;height:19px;background:#2e2e2e;border-radius:3px;"></div>
<svg style="left:616px;top:802px" width="9" height="6"><path d="M0.5 0.5 L4.5 5 L8.5 0.5" stroke="#999" stroke-width="1.1" fill="none"/></svg>
<svg style="left:649px;top:797px" width="15" height="15"><circle cx="2" cy="2" r="1.1" fill="#e6d57a"/><circle cx="2" cy="7" r="1.1" fill="#e6d57a"/><circle cx="2" cy="12" r="1.1" fill="#e6d57a"/><circle cx="7" cy="2" r="1.1" fill="#e6d57a"/><circle cx="7" cy="7" r="1.1" fill="#e6d57a"/><circle cx="7" cy="12" r="1.1" fill="#e6d57a"/><circle cx="12" cy="2" r="1.1" fill="#e6d57a"/><circle cx="12" cy="7" r="1.1" fill="#e6d57a"/><circle cx="12" cy="12" r="1.1" fill="#e6d57a"/></svg>
<div class="t" style="left:667px;top:799px;color:#e6e6e6;font-size:12px;">TextDuplicator</div>
<div style="left:946px;top:795px;width:21px;height:19px;background:#2e2e2e;border-radius:3px;"></div>
<svg style="left:948px;top:799px" width="18" height="11"><path d="M1 5.5 L4 2 H7 V9 H4 Z" fill="#e2cc78"/><path d="M11 2 H14 L17 5.5 L14 9 H11 Z" fill="#d05ae8"/><path d="M9 0 V11" stroke="#262626"/></svg>
<svg style="left:971px;top:799px" width="12" height="12"><circle cx="6" cy="6" r="4.5" fill="none" stroke="#666" stroke-width="1.2"/></svg>
<div style="left:1015px;top:794px;width:889px;height:19px;background:#ffe680;border-radius:3px;"></div>
<div class="t" style="left:1023px;top:798px;font-size:12px;color:#1e1e1e">TextDuplicator</div>
<div style="left:494px;top:816px;width:494px;height:22px;background:#383838;"></div>
<div style="left:496px;top:817px;width:18px;height:19px;background:#2e2e2e;border-radius:3px;"></div>
<div style="left:515px;top:817px;width:18px;height:19px;background:#2e2e2e;border-radius:3px;"></div>
<svg style="left:518px;top:821px" width="12" height="12"><path d="M10.5 4.5 A5 5 0 1 1 8 1.5" stroke="#cfcfcf" stroke-width="1.2" fill="none"/><path d="M3 5.5 L5.5 8 L11 2" stroke="#cfcfcf" stroke-width="1.4" fill="none"/></svg>
<div style="left:573px;top:818px;width:16px;height:16px;background:#c9ef7a;border-radius:2px;"></div>
<svg style="left:593px;top:822px" width="14" height="10"><path d="M4 0.5 H13.5 V9.5 H4 L0.5 5 Z" fill="#ddd"/><circle cx="5" cy="5" r="1.6" fill="#333"/></svg>
<div style="left:630px;top:817px;width:32px;height:19px;background:#2e2e2e;border-radius:3px;"></div>
<svg style="left:635px;top:824px" width="9" height="6"><path d="M0.5 0.5 L4.5 5 L8.5 0.5" stroke="#999" stroke-width="1.1" fill="none"/></svg>
<svg style="left:668px;top:819px" width="15" height="15"><path d="M1 1 V13 H14" stroke="#ddd" stroke-width="1" stroke-dasharray="1.5 1.5" fill="none"/><path d="M3 12 L12 3 M7 3 H12 V8" stroke="#8fe39a" stroke-width="1.3" fill="none"/></svg>
<div class="t" style="left:686px;top:821px;color:#e6e6e6;font-size:12px;">Get Vector [Shape Position]</div>
<div style="left:946px;top:817px;width:21px;height:19px;background:#2e2e2e;border-radius:3px;"></div>
<svg style="left:948px;top:821px" width="18" height="11"><path d="M1 5.5 L4 2 H7 V9 H4 Z" fill="#e2cc78"/><path d="M11 2 H14 L17 5.5 L14 9 H11 Z" fill="#d05ae8"/><path d="M9 0 V11" stroke="#262626"/></svg>
<svg style="left:971px;top:821px" width="12" height="12"><circle cx="6" cy="6" r="4.5" fill="none" stroke="#666" stroke-width="1.2"/></svg>
<div style="left:1015px;top:816px;width:889px;height:19px;background:repeating-linear-gradient(135deg, #e2fb92 0 1px, #b9d96f 1px 12.35px, #e2fb92 12.35px 13.35px, #cbec7c 13.35px 24.7px);"></div>
<div class="t" style="left:1023px;top:820px;font-size:12px;color:#1e1e1e">Get Vector [Shape Position]</div>
<div style="left:494px;top:838px;width:494px;height:22px;background:#383838;"></div>
<div style="left:496px;top:839px;width:18px;height:19px;background:#2e2e2e;border-radius:3px;"></div>
<div style="left:515px;top:839px;width:18px;height:19px;background:#2e2e2e;border-radius:3px;"></div>
<svg style="left:518px;top:843px" width="12" height="12"><path d="M10.5 4.5 A5 5 0 1 1 8 1.5" stroke="#cfcfcf" stroke-width="1.2" fill="none"/><path d="M3 5.5 L5.5 8 L11 2" stroke="#cfcfcf" stroke-width="1.4" fill="none"/></svg>
<div style="left:573px;top:840px;width:16px;height:16px;background:#c9ef7a;border-radius:2px;"></div>
<svg style="left:593px;top:844px" width="14" height="10"><path d="M4 0.5 H13.5 V9.5 H4 L0.5 5 Z" fill="#ddd"/><circle cx="5" cy="5" r="1.6" fill="#333"/></svg>
<svg style="left:687px;top:841px" width="15" height="15"><path d="M2 3 H12 L7 12 Z" fill="none" stroke="#8fe39a" stroke-width="1.4"/></svg>
<div class="t" style="left:705px;top:843px;color:#e6e6e6;font-size:12px;">Value 2 [Strength]</div>
<div style="left:946px;top:839px;width:21px;height:19px;background:#2e2e2e;border-radius:3px;"></div>
<svg style="left:948px;top:843px" width="18" height="11"><path d="M1 5.5 L4 2 H7 V9 H4 Z" fill="#e2cc78"/><path d="M11 2 H14 L17 5.5 L14 9 H11 Z" fill="#d05ae8"/><path d="M9 0 V11" stroke="#262626"/></svg>
<svg style="left:971px;top:843px" width="12" height="12"><circle cx="6" cy="6" r="4.5" fill="none" stroke="#666" stroke-width="1.2"/></svg>
<div style="left:1015px;top:838px;width:889px;height:19px;background:repeating-linear-gradient(135deg, #e2fb92 0 1px, #b9d96f 1px 12.35px, #e2fb92 12.35px 13.35px, #cbec7c 13.35px 24.7px);"></div>
<div class="t" style="left:1023px;top:842px;font-size:12px;color:#1e1e1e">Value 2 [Strength]</div>
<div style="left:494px;top:860px;width:494px;height:22px;background:#383838;"></div>
<div style="left:496px;top:861px;width:18px;height:19px;background:#2e2e2e;border-radius:3px;"></div>
<div style="left:515px;top:861px;width:18px;height:19px;background:#2e2e2e;border-radius:3px;"></div>
<svg style="left:517px;top:865px" width="14" height="12"><ellipse cx="7" cy="6" rx="6" ry="3.8" fill="none" stroke="#ddd" stroke-width="1.1"/><circle cx="7" cy="6" r="1.8" fill="#ddd"/></svg>
<div style="left:535px;top:861px;width:18px;height:19px;background:#2e2e2e;border-radius:3px;"></div>
<div style="left:573px;top:862px;width:16px;height:16px;background:#8fd6f5;border-radius:2px;"></div>
<svg style="left:593px;top:866px" width="14" height="10"><path d="M4 0.5 H13.5 V9.5 H4 L0.5 5 Z" fill="#ddd"/><circle cx="5" cy="5" r="1.6" fill="#333"/></svg>
<div style="left:649px;top:861px;width:32px;height:19px;background:#2e2e2e;border-radius:3px;"></div>
<svg style="left:654px;top:868px" width="9" height="6"><path d="M0.5 0.5 L4.5 5 L8.5 0.5" stroke="#999" stroke-width="1.1" fill="none"/></svg>
<svg style="left:687px;top:863px" width="15" height="15"><path d="M7 1 V13 M1 7 H13" stroke="#ddd" stroke-width="1.1"/><rect x="5" y="5" width="4" height="4" fill="#333"/></svg>
<div class="t" style="left:705px;top:865px;color:#e6e6e6;font-size:12px;">Null - Position Vector</div>
<div style="left:946px;top:861px;width:21px;height:19px;background:#2e2e2e;border-radius:3px;"></div>
<svg style="left:948px;top:865px" width="18" height="11"><path d="M1 5.5 L4 2 H7 V9 H4 Z" fill="#777"/><path d="M11 2 H14 L17 5.5 L14 9 H11 Z" fill="#d05ae8"/><path d="M9 0 V11" stroke="#262626"/></svg>
<svg style="left:971px;top:865px" width="12" height="12"><circle cx="6" cy="6" r="4.5" fill="none" stroke="#666" stroke-width="1.2"/></svg>
<div style="left:1015px;top:860px;width:889px;height:19px;background:#8fd6f5;border-radius:3px;"></div>
<div class="t" style="left:1023px;top:864px;font-size:12px;color:#1e1e1e">Null - Position Vector</div>
<div style="left:494px;top:882px;width:494px;height:22px;background:#383838;"></div>
<div style="left:496px;top:883px;width:18px;height:19px;background:#2e2e2e;border-radius:3px;"></div>
<div style="left:515px;top:883px;width:18px;height:19px;background:#2e2e2e;border-radius:3px;"></div>
<svg style="left:517px;top:887px" width="14" height="12"><ellipse cx="7" cy="6" rx="6" ry="3.8" fill="none" stroke="#ddd" stroke-width="1.1"/><circle cx="7" cy="6" r="1.8" fill="#ddd"/></svg>
<div style="left:535px;top:883px;width:18px;height:19px;background:#2e2e2e;border-radius:3px;"></div>
<div style="left:573px;top:884px;width:16px;height:16px;background:#6a8fe0;border-radius:2px;"></div>
<svg style="left:593px;top:888px" width="14" height="10"><path d="M4 0.5 H13.5 V9.5 H4 L0.5 5 Z" fill="#ddd"/><circle cx="5" cy="5" r="1.6" fill="#333"/></svg>
<svg style="left:706px;top:885px" width="15" height="15"><circle cx="7" cy="7" r="6" fill="none" stroke="#ddd" stroke-width="1" stroke-dasharray="1.5 1.5"/><circle cx="7" cy="7" r="3.2" fill="#a7d2f7"/></svg>
<div class="t" style="left:724px;top:887px;color:#e6e6e6;font-size:12px;">Falloff [Value 2 [Strength]]</div>
<div style="left:946px;top:883px;width:21px;height:19px;background:#2e2e2e;border-radius:3px;"></div>
<svg style="left:948px;top:887px" width="18" height="11"><path d="M1 5.5 L4 2 H7 V9 H4 Z" fill="#e2cc78"/><path d="M11 2 H14 L17 5.5 L14 9 H11 Z" fill="#d05ae8"/><path d="M9 0 V11" stroke="#262626"/></svg>
<svg style="left:971px;top:887px" width="12" height="12"><circle cx="6" cy="6" r="4.5" fill="none" stroke="#666" stroke-width="1.2"/></svg>
<div style="left:1015px;top:882px;width:889px;height:19px;background:#668de6;border-radius:3px;"></div>
<div class="t" style="left:1023px;top:886px;font-size:12px;color:#ffffff">Falloff [Value 2 [Strength]]</div>
<div style="left:494px;top:904px;width:494px;height:22px;background:#383838;"></div>
<div style="left:496px;top:905px;width:18px;height:19px;background:#2e2e2e;border-radius:3px;"></div>
<div style="left:515px;top:905px;width:18px;height:19px;background:#2e2e2e;border-radius:3px;"></div>
<svg style="left:518px;top:909px" width="12" height="12"><path d="M10.5 4.5 A5 5 0 1 1 8 1.5" stroke="#cfcfcf" stroke-width="1.2" fill="none"/><path d="M3 5.5 L5.5 8 L11 2" stroke="#cfcfcf" stroke-width="1.4" fill="none"/></svg>
<div style="left:573px;top:906px;width:16px;height:16px;background:#c9ef7a;border-radius:2px;"></div>
<svg style="left:593px;top:910px" width="14" height="10"><path d="M4 0.5 H13.5 V9.5 H4 L0.5 5 Z" fill="#ddd"/><circle cx="5" cy="5" r="1.6" fill="#333"/></svg>
<svg style="left:649px;top:907px" width="15" height="15"><path d="M1 3 H13 L7 12 Z M4 3 L7 8 L10 3" fill="none" stroke="#8fe39a" stroke-width="1.3"/></svg>
<div class="t" style="left:667px;top:909px;color:#e6e6e6;font-size:12px;">Value Blend [Font Size]</div>
<div style="left:946px;top:905px;width:21px;height:19px;background:#2e2e2e;border-radius:3px;"></div>
<svg style="left:948px;top:909px" width="18" height="11"><path d="M1 5.5 L4 2 H7 V9 H4 Z" fill="#e2cc78"/><path d="M11 2 H14 L17 5.5 L14 9 H11 Z" fill="#d05ae8"/><path d="M9 0 V11" stroke="#262626"/></svg>
<svg style="left:971px;top:909px" width="12" height="12"><circle cx="6" cy="6" r="4.5" fill="none" stroke="#666" stroke-width="1.2"/></svg>
<div style="left:1015px;top:904px;width:889px;height:19px;background:repeating-linear-gradient(135deg, #e2fb92 0 1px, #b9d96f 1px 12.35px, #e2fb92 12.35px 13.35px, #cbec7c 13.35px 24.7px);"></div>
<div class="t" style="left:1023px;top:908px;font-size:12px;color:#1e1e1e">Value Blend [Font Size]</div>
<div style="left:494px;top:926px;width:494px;height:22px;background:#383838;"></div>
<div style="left:496px;top:927px;width:18px;height:19px;background:#2e2e2e;border-radius:3px;"></div>
<div style="left:515px;top:927px;width:18px;height:19px;background:#2e2e2e;border-radius:3px;"></div>
<div style="left:535px;top:927px;width:18px;height:19px;background:#2e2e2e;border-radius:3px;"></div>
<div style="left:573px;top:928px;width:16px;height:16px;background:#b48ff5;border-radius:2px;"></div>
<svg style="left:593px;top:932px" width="14" height="10"><path d="M4 0.5 H13.5 V9.5 H4 L0.5 5 Z" fill="#ddd"/><circle cx="5" cy="5" r="1.6" fill="#333"/></svg>
<div style="left:611px;top:927px;width:32px;height:19px;background:#2e2e2e;border-radius:3px;"></div>
<svg style="left:616px;top:934px" width="9" height="6"><path d="M0.5 0.5 L4.5 5 L8.5 0.5" stroke="#999" stroke-width="1.1" fill="none"/></svg>
<svg style="left:649px;top:929px" width="15" height="15"><rect x="0.5" y="0.5" width="14" height="14" fill="none" stroke="#ddd" stroke-width="1" stroke-dasharray="2 1"/><path d="M3 3 H12 V5 H8.5 V12 H6.5 V5 H3 Z" fill="#e6d57a"/></svg>
<div class="t" style="left:667px;top:931px;color:#9a9a9a;font-size:12px;">Main Text</div>
<div style="left:946px;top:927px;width:21px;height:19px;background:#2e2e2e;border-radius:3px;"></div>
<svg style="left:948px;top:931px" width="18" height="11"><path d="M1 5.5 L4 2 H7 V9 H4 Z" fill="#e2cc78"/><path d="M11 2 H14 L17 5.5 L14 9 H11 Z" fill="#d05ae8"/><path d="M9 0 V11" stroke="#262626"/></svg>
<svg style="left:971px;top:931px" width="12" height="12"><circle cx="6" cy="6" r="4.5" fill="none" stroke="#666" stroke-width="1.2"/></svg>
<div style="left:1015px;top:926px;width:889px;height:19px;background:#b48ff5;border-radius:3px;"></div>
<div class="t" style="left:1023px;top:930px;font-size:12px;color:#ffffff">Main Text</div>
<div style="left:494px;top:948px;width:494px;height:22px;background:#383838;"></div>
<div style="left:496px;top:949px;width:18px;height:19px;background:#2e2e2e;border-radius:3px;"></div>
<div style="left:515px;top:949px;width:18px;height:19px;background:#2e2e2e;border-radius:3px;"></div>
<svg style="left:518px;top:953px" width="12" height="12"><path d="M10.5 4.5 A5 5 0 1 1 8 1.5" stroke="#cfcfcf" stroke-width="1.2" fill="none"/><path d="M3 5.5 L5.5 8 L11 2" stroke="#cfcfcf" stroke-width="1.4" fill="none"/></svg>
<div style="left:573px;top:950px;width:16px;height:16px;background:#6a8fe0;border-radius:2px;"></div>
<svg style="left:593px;top:954px" width="14" height="10"><path d="M4 0.5 H13.5 V9.5 H4 L0.5 5 Z" fill="#ddd"/><circle cx="5" cy="5" r="1.6" fill="#333"/></svg>
<div style="left:630px;top:949px;width:32px;height:19px;background:#2e2e2e;border-radius:3px;"></div>
<svg style="left:635px;top:956px" width="9" height="6"><path d="M0.5 0.5 L4.5 5 L8.5 0.5" stroke="#999" stroke-width="1.1" fill="none"/></svg>
<svg style="left:668px;top:951px" width="15" height="15"><path d="M3 1 V13 M0 4 H6" stroke="#ddd" stroke-width="1.3"/><path d="M7 1 H15 M8 4 H15 M8 7 H15" stroke="#ddd" stroke-width="1.1"/></svg>
<div class="t" style="left:686px;top:953px;color:#e6e6e6;font-size:12px;">Typeface Array</div>
<div style="left:946px;top:949px;width:21px;height:19px;background:#2e2e2e;border-radius:3px;"></div>
<svg style="left:948px;top:953px" width="18" height="11"><path d="M1 5.5 L4 2 H7 V9 H4 Z" fill="#e2cc78"/><path d="M11 2 H14 L17 5.5 L14 9 H11 Z" fill="#d05ae8"/><path d="M9 0 V11" stroke="#262626"/></svg>
<svg style="left:971px;top:953px" width="12" height="12"><circle cx="6" cy="6" r="4.5" fill="none" stroke="#666" stroke-width="1.2"/></svg>
<div style="left:1015px;top:948px;width:889px;height:18px;background:repeating-linear-gradient(135deg, #7fa8f5 0 1px, #5a86dc 1px 12.35px, #7fa8f5 12.35px 13.35px, #6a95ea 13.35px 24.7px);"></div>
<div class="t" style="left:1023px;top:952px;font-size:12px;color:#ffffff">Typeface Array</div>
<div style="left:988px;top:708px;width:10px;height:143px;background:#4a4a4a;border-radius:5px;"></div>
<div style="left:637px;top:747px;width:181px;height:27px;border:3px solid #b2dc1e;"></div>
<div style="left:946px;top:774px;width:10px;height:16px;border:1px solid #b89c50;"></div>
<div style="left:1000px;top:641px;width:909px;height:22px;background:#474747;"></div>
<div class="t" style="left:1166px;top:647px;color:#e6e6e6;font-size:12px;">Composition 1</div>
<div style="left:1004px;top:663px;width:909px;height:24px;background:#232323;"></div>
<svg style="left:1004px;top:663px" width="909" height="24"><path d="M9.5 15 V23" stroke="#999" stroke-width="1"/><text x="9.5" y="12" fill="#e0e0e0" font-size="12" text-anchor="middle" font-family="Liberation Sans">0</text><path d="M20.2 19 V23" stroke="#777" stroke-width="1"/><path d="M30.9 19 V23" stroke="#777" stroke-width="1"/><path d="M41.6 19 V23" stroke="#777" stroke-width="1"/><path d="M52.3 19 V23" stroke="#777" stroke-width="1"/><path d="M63.0 15 V23" stroke="#999" stroke-width="1"/><text x="63.0" y="12" fill="#e0e0e0" font-size="12" text-anchor="middle" font-family="Liberation Sans">15</text><path d="M73.7 19 V23" stroke="#777" stroke-width="1"/><path d="M84.4 19 V23" stroke="#777" stroke-width="1"/><path d="M95.1 19 V23" stroke="#777" stroke-width="1"/><path d="M105.8 19 V23" stroke="#777" stroke-width="1"/><path d="M116.5 15 V23" stroke="#999" stroke-width="1"/><text x="116.5" y="12" fill="#e0e0e0" font-size="12" text-anchor="middle" font-family="Liberation Sans">30</text><path d="M127.2 19 V23" stroke="#777" stroke-width="1"/><path d="M137.9 19 V23" stroke="#777" stroke-width="1"/><path d="M148.6 19 V23" stroke="#777" stroke-width="1"/><path d="M159.3 19 V23" stroke="#777" stroke-width="1"/><path d="M170.0 15 V23" stroke="#999" stroke-width="1"/><text x="170.0" y="12" fill="#e0e0e0" font-size="12" text-anchor="middle" font-family="Liberation Sans">45</text><path d="M180.7 19 V23" stroke="#777" stroke-width="1"/><path d="M191.4 19 V23" stroke="#777" stroke-width="1"/><path d="M202.1 19 V23" stroke="#777" stroke-width="1"/><path d="M212.8 19 V23" stroke="#777" stroke-width="1"/><path d="M223.5 15 V23" stroke="#999" stroke-width="1"/><text x="223.5" y="12" fill="#e0e0e0" font-size="12" text-anchor="middle" font-family="Liberation Sans">60</text><path d="M234.2 19 V23" stroke="#777" stroke-width="1"/><path d="M244.9 19 V23" stroke="#777" stroke-width="1"/><path d="M255.6 19 V23" stroke="#777" stroke-width="1"/><path d="M266.3 19 V23" stroke="#777" stroke-width="1"/><path d="M277.0 15 V23" stroke="#999" stroke-width="1"/><text x="277.0" y="12" fill="#e0e0e0" font-size="12" text-anchor="middle" font-family="Liberation Sans">75</text><path d="M287.7 19 V23" stroke="#777" stroke-width="1"/><path d="M298.4 19 V23" stroke="#777" stroke-width="1"/><path d="M309.1 19 V23" stroke="#777" stroke-width="1"/><path d="M319.8 19 V23" stroke="#777" stroke-width="1"/><path d="M330.5 15 V23" stroke="#999" stroke-width="1"/><text x="330.5" y="12" fill="#e0e0e0" font-size="12" text-anchor="middle" font-family="Liberation Sans">90</text><path d="M341.2 19 V23" stroke="#777" stroke-width="1"/><path d="M351.9 19 V23" stroke="#777" stroke-width="1"/><path d="M362.6 19 V23" stroke="#777" stroke-width="1"/><path d="M373.3 19 V23" stroke="#777" stroke-width="1"/><path d="M384.0 15 V23" stroke="#999" stroke-width="1"/><text x="384.0" y="12" fill="#e0e0e0" font-size="12" text-anchor="middle" font-family="Liberation Sans">105</text><path d="M394.7 19 V23" stroke="#777" stroke-width="1"/><path d="M405.4 19 V23" stroke="#777" stroke-width="1"/><path d="M416.1 19 V23" stroke="#777" stroke-width="1"/><path d="M426.8 19 V23" stroke="#777" stroke-width="1"/><path d="M437.5 15 V23" stroke="#999" stroke-width="1"/><text x="437.5" y="12" fill="#e0e0e0" font-size="12" text-anchor="middle" font-family="Liberation Sans">120</text><path d="M448.2 19 V23" stroke="#777" stroke-width="1"/><path d="M458.9 19 V23" stroke="#777" stroke-width="1"/><path d="M469.6 19 V23" stroke="#777" stroke-width="1"/><path d="M480.3 19 V23" stroke="#777" stroke-width="1"/><path d="M491.0 15 V23" stroke="#999" stroke-width="1"/><text x="491.0" y="12" fill="#e0e0e0" font-size="12" text-anchor="middle" font-family="Liberation Sans">135</text><path d="M501.7 19 V23" stroke="#777" stroke-width="1"/><path d="M512.4 19 V23" stroke="#777" stroke-width="1"/><path d="M523.1 19 V23" stroke="#777" stroke-width="1"/><path d="M533.8 19 V23" stroke="#777" stroke-width="1"/><path d="M544.5 15 V23" stroke="#999" stroke-width="1"/><text x="544.5" y="12" fill="#e0e0e0" font-size="12" text-anchor="middle" font-family="Liberation Sans">150</text><path d="M555.2 19 V23" stroke="#777" stroke-width="1"/><path d="M565.9 19 V23" stroke="#777" stroke-width="1"/><path d="M576.6 19 V23" stroke="#777" stroke-width="1"/><path d="M587.3 19 V23" stroke="#777" stroke-width="1"/><path d="M598.0 15 V23" stroke="#999" stroke-width="1"/><text x="598.0" y="12" fill="#e0e0e0" font-size="12" text-anchor="middle" font-family="Liberation Sans">165</text><path d="M608.7 19 V23" stroke="#777" stroke-width="1"/><path d="M619.4 19 V23" stroke="#777" stroke-width="1"/><path d="M630.1 19 V23" stroke="#777" stroke-width="1"/><path d="M640.8 19 V23" stroke="#777" stroke-width="1"/><path d="M651.5 15 V23" stroke="#999" stroke-width="1"/><text x="651.5" y="12" fill="#e0e0e0" font-size="12" text-anchor="middle" font-family="Liberation Sans">180</text><path d="M662.2 19 V23" stroke="#777" stroke-width="1"/><path d="M672.9 19 V23" stroke="#777" stroke-width="1"/><path d="M683.6 19 V23" stroke="#777" stroke-width="1"/><path d="M694.3 19 V23" stroke="#777" stroke-width="1"/><path d="M705.0 15 V23" stroke="#999" stroke-width="1"/><text x="705.0" y="12" fill="#e0e0e0" font-size="12" text-anchor="middle" font-family="Liberation Sans">195</text><path d="M715.7 19 V23" stroke="#777" stroke-width="1"/><path d="M726.4 19 V23" stroke="#777" stroke-width="1"/><path d="M737.1 19 V23" stroke="#777" stroke-width="1"/><path d="M747.8 19 V23" stroke="#777" stroke-width="1"/><path d="M758.5 15 V23" stroke="#999" stroke-width="1"/><text x="758.5" y="12" fill="#e0e0e0" font-size="12" text-anchor="middle" font-family="Liberation Sans">210</text><path d="M769.2 19 V23" stroke="#777" stroke-width="1"/><path d="M779.9 19 V23" stroke="#777" stroke-width="1"/><path d="M790.6 19 V23" stroke="#777" stroke-width="1"/><path d="M801.3 19 V23" stroke="#777" stroke-width="1"/><path d="M812.0 15 V23" stroke="#999" stroke-width="1"/><text x="812.0" y="12" fill="#e0e0e0" font-size="12" text-anchor="middle" font-family="Liberation Sans">225</text><path d="M822.7 19 V23" stroke="#777" stroke-width="1"/><path d="M833.4 19 V23" stroke="#777" stroke-width="1"/><path d="M844.1 19 V23" stroke="#777" stroke-width="1"/><path d="M854.8 19 V23" stroke="#777" stroke-width="1"/><path d="M865.5 15 V23" stroke="#999" stroke-width="1"/><text x="865.5" y="12" fill="#e0e0e0" font-size="12" text-anchor="middle" font-family="Liberation Sans">240</text><path d="M876.2 19 V23" stroke="#777" stroke-width="1"/><path d="M886.9 19 V23" stroke="#777" stroke-width="1"/><path d="M897.6 19 V23" stroke="#777" stroke-width="1"/></svg>
<div style="left:1004px;top:687px;width:905px;height:16px;background:#474747;"></div>
<div style="left:1010px;top:686px;width:6px;height:18px;background:#6fc2aa;border-radius:2px;"></div>
<div style="left:1905px;top:686px;width:6px;height:18px;background:#6fc2aa;border-radius:2px;"></div>
<div style="left:1224px;top:679px;width:1px;height:284px;background:#5fb9a0;"></div>
<svg style="left:1217px;top:676px" width="15" height="10"><path d="M0.5 0.5 H14.5 L7.5 9 Z" fill="#6fc2aa"/></svg>
<div style="left:1000px;top:700px;width:4px;height:263px;background:#232323;"></div>
<svg style="left:1001px;top:823px" width="3" height="20"><g fill="#666"><rect x="1" y="0" width="1" height="2"/><rect x="1" y="3" width="1" height="2"/><rect x="1" y="6" width="1" height="2"/><rect x="1" y="9" width="1" height="2"/><rect x="1" y="12" width="1" height="2"/><rect x="1" y="15" width="1" height="2"/><rect x="1" y="18" width="1" height="2"/></g></svg>
<div style="left:494px;top:962px;width:506px;height:14px;background:#2b2b2b;"></div>
<div style="left:495px;top:964px;width:490px;height:10px;background:#4a4a4a;border-radius:5px;"></div>
<div style="left:1004px;top:962px;width:910px;height:14px;background:#2b2b2b;"></div>
<div style="left:1008px;top:964px;width:901px;height:10px;background:#4a4a4a;border-radius:5px;"></div>
<div style="left:494px;top:976px;width:506px;height:22px;background:#3a3a3a;"></div>
<div style="left:1004px;top:976px;width:910px;height:22px;background:#3a3a3a;"></div>
<div style="left:496px;top:978px;width:20px;height:19px;background:#2b2b2b;border:1px solid #222;border-radius:4px;"></div>
<svg style="left:499px;top:983px" width="14" height="10"><path d="M4 0.5 H13.5 V9.5 H4 L0.5 5 Z" fill="#ddd"/><circle cx="5" cy="5" r="1.6" fill="#333"/></svg>
<div class="t" style="left:520px;top:981px;color:#e6e6e6;font-size:12px;">1 selected</div>
<div style="left:792px;top:978px;width:19px;height:19px;background:#2b2b2b;border:1px solid #222;border-radius:4px;"></div>
<svg style="left:796px;top:982px" width="11" height="11"><rect x="0.6" y="0.6" width="9.8" height="9.8" fill="none" stroke="#ddd" stroke-width="1.1"/><rect x="3.5" y="3.5" width="4" height="4" fill="#ddd"/></svg>
<div style="left:814px;top:977px;width:184px;height:20px;background:#555;border:1px solid #333;border-radius:4px;"></div>
<div style="left:815px;top:978px;width:87px;height:18px;background:#2a2a2a;border-radius:3px;"></div>
<svg style="left:821px;top:981px" width="12" height="12"><path d="M1 2 H8 M3 6 H11 M1 10 H8" stroke="#3ddc71" stroke-width="2"/></svg>
<div class="t" style="left:837px;top:981px;color:#e6e6e6;font-size:12px;">Time Editor</div>
<svg style="left:909px;top:981px" width="14" height="12"><path d="M1 0 V11 H14" stroke="#aaa" stroke-width="1" fill="none"/><path d="M2 10 L11 2" stroke="#ccc" stroke-width="1.1"/></svg>
<div class="t" style="left:926px;top:981px;color:#e6e6e6;font-size:12px;">Graph Editor</div>
<div style="left:1010px;top:978px;width:19px;height:19px;background:#2b2b2b;border:1px solid #222;border-radius:4px;"></div>
<svg style="left:1013px;top:982px" width="13" height="12"><path d="M0 1 H13 M2 5 H11 M0 9 H13" stroke="#ddd" stroke-width="1.2"/></svg>
<div style="left:1031px;top:978px;width:150px;height:18px;background:#2b2b2b;border-radius:3px;"></div>
<div class="t" style="left:1033px;top:981px;color:#e6e6e6;font-size:12px;">Default Keyframe Layer</div>
<div style="left:1186px;top:978px;width:70px;height:18px;background:#2b2b2b;border-radius:3px;"></div>
<div class="t" style="left:1192px;top:981px;color:#555;font-size:12px;">F</div>
<div class="t" style="left:1204px;top:981px;color:#aaa;font-size:12px;">-</div>
<div class="t" style="left:1263px;top:981px;color:#e6e6e6;font-size:12px;">Align:</div>
<div style="left:1300px;top:978px;width:55px;height:18px;background:#2b2b2b;border:1px solid #222;border-radius:4px;"></div>
<svg style="left:1303px;top:981px" width="12" height="12"><path d="M1 0 V12 M3 3 H9 M3 8 H11" stroke="#dcdcdc" stroke-width="1.3" stroke-dasharray="2 1"/></svg>
<div style="left:1318px;top:979px;width:1px;height:16px;background:#3a3a3a;"></div>
<svg style="left:1321px;top:981px" width="12" height="12"><path d="M6 0 V12 M2 3 H10 M1 8 H11" stroke="#dcdcdc" stroke-width="1.3" stroke-dasharray="2 1"/></svg>
<div style="left:1336px;top:979px;width:1px;height:16px;background:#3a3a3a;"></div>
<svg style="left:1339px;top:981px" width="12" height="12"><path d="M11 0 V12 M3 3 H9 M1 8 H9" stroke="#dcdcdc" stroke-width="1.3" stroke-dasharray="2 1"/></svg>
<div style="left:1355px;top:978px;width:20px;height:19px;background:#2b2b2b;border:1px solid #222;border-radius:4px;"></div>
<svg style="left:1359px;top:982px" width="12" height="12"><rect x="0.6" y="0.6" width="10.8" height="10.8" fill="none" stroke="#ddd" stroke-width="1" stroke-dasharray="2 1.5"/><rect x="4" y="4" width="4" height="4" fill="#ddd"/></svg>
<div style="left:1377px;top:978px;width:28px;height:19px;background:#2b2b2b;border:1px solid #222;border-radius:4px;"></div>
<svg style="left:1380px;top:981px" width="14" height="13"><path d="M2 11 V6 A4.5 4.5 0 0 1 11 6 V7" stroke="#ddd" stroke-width="2" fill="none"/></svg>
<svg style="left:1397px;top:983px" width="7" height="9"><path d="M1 1 L6 4.5 L1 8 Z" fill="none" stroke="#888" stroke-width="1"/></svg>
<div style="left:1412px;top:978px;width:30px;height:19px;background:#2b2b2b;border:1px solid #222;border-radius:4px;"></div>
<svg style="left:1415px;top:981px" width="14" height="13"><path d="M0 6.5 H14 M4 2 V11 M7 1 V12 M10 3 V10" stroke="#ddd" stroke-width="1"/></svg>
<svg style="left:1433px;top:983px" width="7" height="9"><path d="M1 1 L6 4.5 L1 8 Z" fill="none" stroke="#888" stroke-width="1"/></svg>
<svg style="left:1742px;top:980px" width="14" height="14"><circle cx="6" cy="6" r="5" fill="none" stroke="#ddd" stroke-width="1.2"/><path d="M3.5 6 H8.5" stroke="#ddd" stroke-width="1.2"/><path d="M9.5 9.5 L13 13" stroke="#ddd" stroke-width="1.6"/></svg>
<div style="left:1763px;top:985px;width:118px;height:4px;background:#2a2a2a;border-radius:2px;"></div>
<svg style="left:1760px;top:981px" width="12" height="12"><circle cx="6" cy="6" r="5" fill="#6fc2aa" stroke="#4a9a84"/></svg>
<svg style="left:1886px;top:980px" width="14" height="14"><circle cx="6" cy="6" r="5" fill="none" stroke="#ddd" stroke-width="1.2"/><path d="M3.5 6 H8.5 M6 3.5 V8.5" stroke="#ddd" stroke-width="1.2"/><path d="M9.5 9.5 L13 13" stroke="#ddd" stroke-width="1.6"/></svg>
<div style="left:494px;top:998px;width:1420px;height:7px;background:#1c1c1c;"></div>
<div style="left:494px;top:1005px;width:1420px;height:22px;background:#3a3a3a;"></div>
<svg style="left:497px;top:1010px" width="3" height="12"><circle cx="1.5" cy="1.5" r="1" fill="#777"/><circle cx="1.5" cy="6" r="1" fill="#777"/><circle cx="1.5" cy="10.5" r="1" fill="#777"/></svg>
<div style="left:506px;top:1006px;width:18px;height:19px;background:#2b2b2b;border:1px solid #222;border-radius:3px;"></div>
<svg style="left:509px;top:1009px" width="13" height="13"><path d="M1 1 H12 V9 H6 L3 12 V9 H1 Z" fill="none" stroke="#ddd" stroke-width="1.2"/><path d="M3 4 H10 M3 6.5 H10" stroke="#ddd" stroke-width="1"/></svg>
<div style="left:528px;top:1008px;width:18px;height:15px;background:#2ebd5c;border-radius:2px;"></div>
<div class="t" style="left:533px;top:1010px;color:#111;font-size:11.5px;">1</div>
<svg style="left:554px;top:1012px" width="7" height="7"><circle cx="3.5" cy="3.5" r="3" fill="#2ebd5c"/></svg>
<div class="t" style="left:565px;top:1010px;color:#e6e6e6;font-size:12px;">Saved scene to: D:/DATA/AI Creator/Cavalry/manipulating-text-from-csv-data-in-cavalry.cv.</div>
<div class="t" style="left:1360px;top:1010px;color:#e6e6e6;font-size:12px;font-style:italic;letter-spacing:-0.75px;">Click to see next message</div>
<div style="left:1488px;top:1007px;width:80px;height:18px;background:#d5b862;border-radius:3px;"></div>
<div class="t" style="left:1494px;top:1010px;color:#1e1e1e;font-size:12px;letter-spacing:-0.3px;">Feedback</div>
<div style="left:1571px;top:1007px;width:109px;height:18px;background:#2fbf5e;border-radius:3px;"></div>
<div class="t" style="left:1577px;top:1010px;color:#1e1e1e;font-size:12px;letter-spacing:-0.3px;">Upgrade to Pro</div>
<div style="left:1683px;top:1007px;width:118px;height:18px;background:#b48ff5;border-radius:3px;"></div>
<div class="t" style="left:1689px;top:1010px;color:#1e1e1e;font-size:12px;letter-spacing:-0.3px;">Update Available</div>
<div style="left:1805px;top:1007px;width:105px;height:18px;background:#2aa7e6;border-radius:3px;"></div>
<div class="t" style="left:1811px;top:1010px;color:#1e1e1e;font-size:12px;letter-spacing:-0.3px;">Tips and Tricks</div>
<svg style="left:1549px;top:1009px" width="14" height="14"><rect x="1" y="2" width="9" height="11" fill="#fff"/><path d="M5 10 L12 3" stroke="#e85a2a" stroke-width="2.2"/></svg>
<svg style="left:1659px;top:1010px" width="16" height="12"><ellipse cx="4.5" cy="7" rx="3.5" ry="4.5" fill="#f5c400"/><ellipse cx="11.5" cy="7" rx="3.5" ry="4.5" fill="#f5c400"/></svg>
<svg style="left:1779px;top:1009px" width="14" height="14"><circle cx="7" cy="7" r="6" fill="#f5b400"/><circle cx="5" cy="6" r="1" fill="#333"/><circle cx="9" cy="6" r="1" fill="#333"/><path d="M0 3 L3 1 M14 3 L11 1" stroke="#e0457a" stroke-width="1.5"/></svg>
<svg style="left:1888px;top:1009px" width="14" height="14"><path d="M13 1 L6 4 L3 9 L5 11 L10 8 Z" fill="#ddd"/><path d="M3 9 L1 13 L5 11" fill="#e85a2a"/><circle cx="9" cy="5" r="1.5" fill="#2aa7e6"/></svg></body></html>
